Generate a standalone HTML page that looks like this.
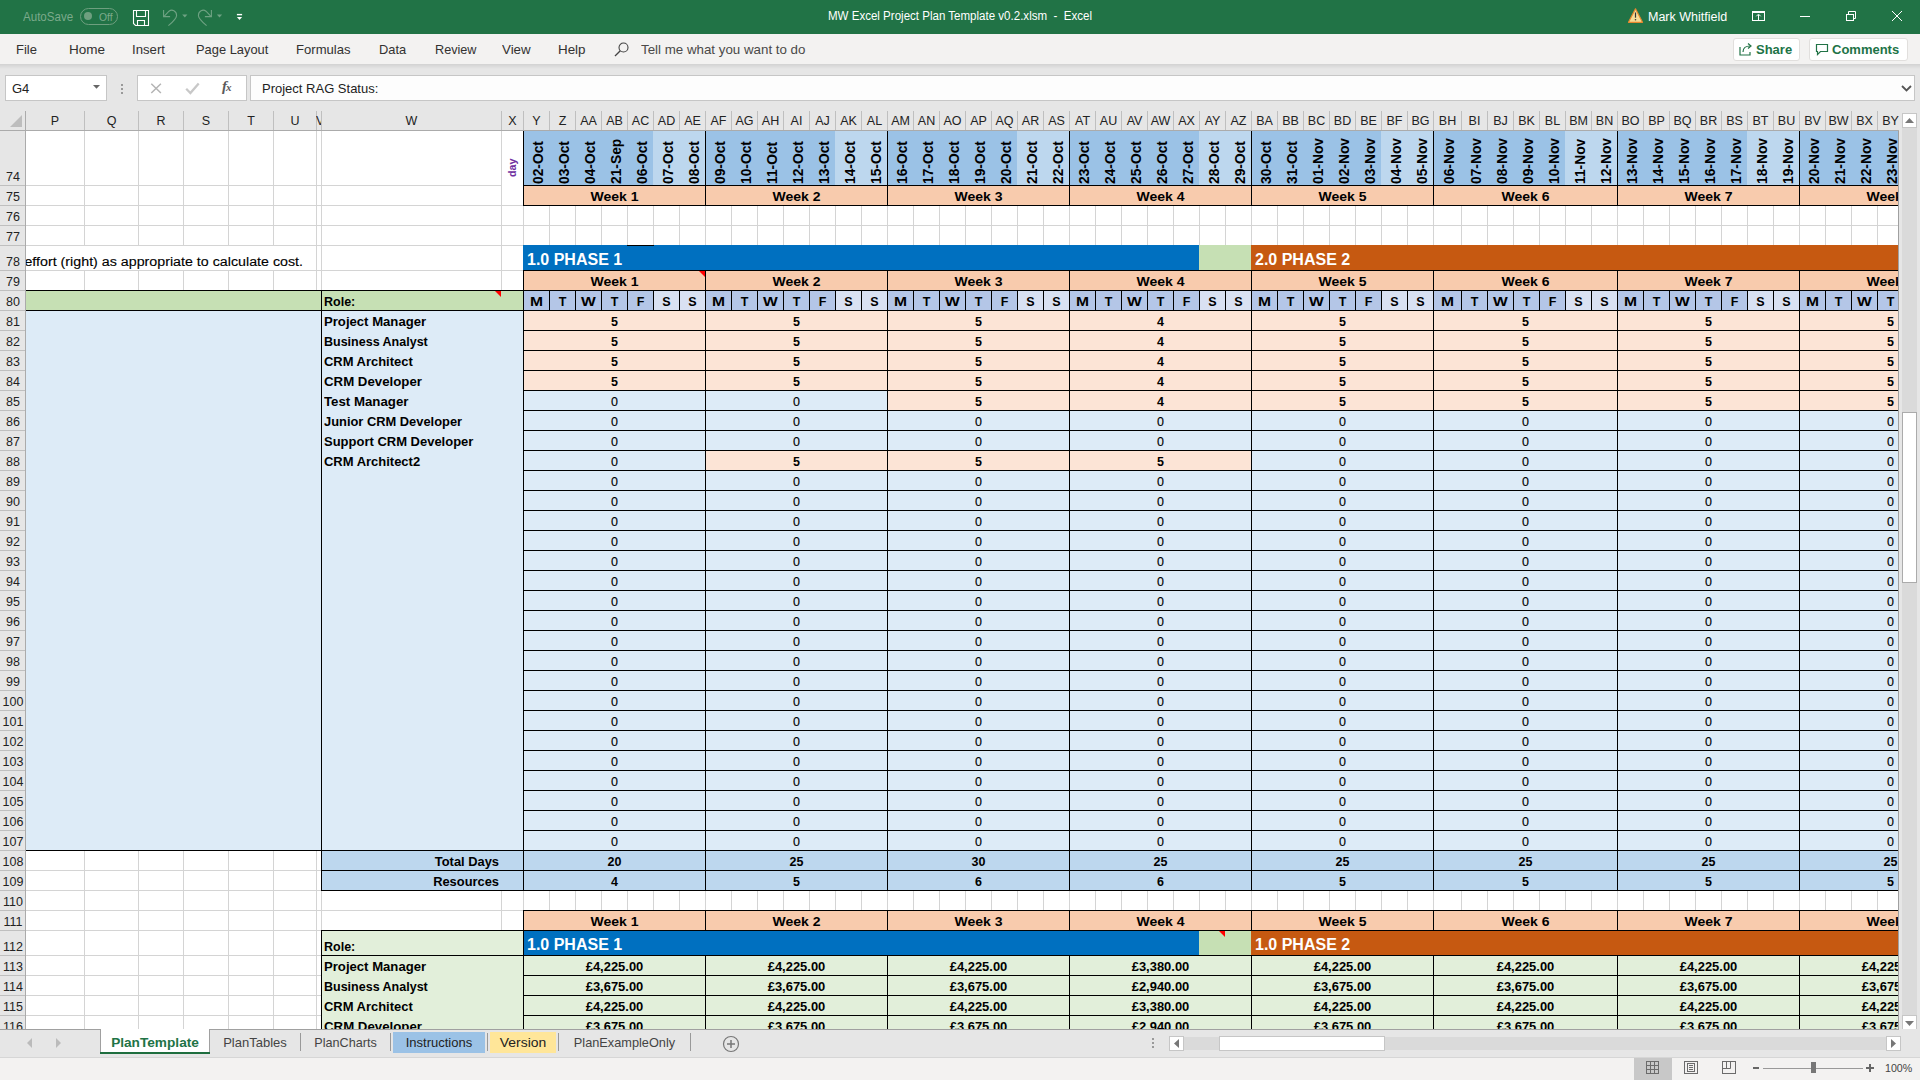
<!DOCTYPE html>
<html><head><meta charset="utf-8"><style>
html,body{margin:0;padding:0;width:1920px;height:1080px;overflow:hidden;background:#fff;}
body{position:relative;font-family:"Liberation Sans", sans-serif;}
div,span,svg{position:absolute;box-sizing:border-box;}
.sheet{left:0;top:0;width:1920px;height:1080px;}
</style></head><body>
<div style="left:0px;top:0px;width:1920px;height:34px;background:#217346;"></div>
<div style="left:23px;top:8.50px;height:16px;line-height:16px;font-size:13px;font-weight:400;color:#7BAA8B;white-space:nowrap;font-family:'Liberation Sans', sans-serif;transform:scaleX(0.89);transform-origin:0 0;">AutoSave</div>
<div style="left:80px;top:8px;width:38px;height:17px;border:1px solid #6E9F7F;border-radius:9px;"></div>
<div style="left:84px;top:12px;width:8px;height:8px;border-radius:50%;background:#6E9F7F;"></div>
<div style="left:99px;top:9.52px;height:14px;line-height:14px;font-size:11.5px;font-weight:400;color:#7BAA8B;white-space:nowrap;font-family:'Liberation Sans', sans-serif;transform:scaleX(0.9);transform-origin:0 0;">Off</div>
<svg style="left:128px;top:6px" width="26" height="24" viewBox="0 0 26 24"><g fill="none" stroke="#fff" stroke-width="1.1"><path d="M5.5 4.5H20.5V19.5H7.5L5.5 17.5Z"/><path d="M8.5 4.5V10.5H17.5V4.5"/><path d="M9.5 19.5V14.5H16.5V19.5"/></g></svg>
<svg style="left:155px;top:5px" width="95" height="25" viewBox="0 0 95 25"><g fill="none" stroke="#6FA283" stroke-width="1.1"><path d="M8.6 5v6.6h6.5"/><path d="M9.3 11.2L14 6.2C17 3.8 21.6 5.8 21.6 10.4C21.6 13 20 15 13.4 20.6"/><path d="M56.4 5v6.6h-6.5"/><path d="M55.7 11.2L51 6.2C48 3.8 43.4 5.8 43.4 10.4C43.4 13 45 15 51.6 20.6"/></g><path d="M27.2 9.6h5.2l-2.6 2.8z" fill="#6FA283"/><path d="M61.9 9.6h5.2l-2.6 2.8z" fill="#6FA283"/><rect x="81.9" y="8.9" width="5.2" height="1.4" fill="#fff"/><path d="M81.9 12.1h5.2l-2.6 3z" fill="#fff"/></svg>
<div style="left:828px;top:7.67px;height:16px;line-height:16px;font-size:12.5px;font-weight:400;color:#fff;white-space:nowrap;font-family:'Liberation Sans', sans-serif;transform:scaleX(0.923);transform-origin:0 0;">MW Excel Project Plan Template v0.2.xlsm&nbsp; -&nbsp; Excel</div>
<svg style="left:1627px;top:7px" width="17" height="17" viewBox="0 0 17 17"><path d="M8.5 1.8L15.5 15.3H1.5z" fill="#F5DC96" stroke="#E8872E" stroke-width="1.2" stroke-linejoin="round"/><path d="M8.5 5.5v5.2" stroke="#333" stroke-width="1.2"/><circle cx="8.5" cy="12.8" r="0.8" fill="#333"/></svg>
<div style="left:1648px;top:8.67px;height:16px;line-height:16px;font-size:12.5px;font-weight:400;color:#fff;white-space:nowrap;font-family:'Liberation Sans', sans-serif;">Mark Whitfield</div>
<svg style="left:1745px;top:4px" width="165" height="24" viewBox="0 0 165 24"><g fill="none" stroke="#fff" stroke-width="1"><rect x="7.5" y="7.5" width="12" height="9"/><path d="M7.5 8.5h12M13.5 11v5.5M11.3 12.3l2.2-2.2l2.2 2.2"/><path d="M55 12.5h10"/><rect x="101.5" y="10.5" width="7" height="6"/><path d="M103.5 10.5v-3h7v7h-2"/><path d="M147 7l10 10M157 7l-10 10"/></g></svg>
<div style="left:0px;top:34px;width:1920px;height:30px;background:#F3F2F1;"></div>
<div style="left:16px;top:41.50px;height:16px;line-height:16px;font-size:13px;font-weight:400;color:#323130;white-space:nowrap;font-family:'Liberation Sans', sans-serif;transform:scaleX(1.0);transform-origin:0 0;">File</div>
<div style="left:69px;top:41.50px;height:16px;line-height:16px;font-size:13px;font-weight:400;color:#323130;white-space:nowrap;font-family:'Liberation Sans', sans-serif;transform:scaleX(1.04);transform-origin:0 0;">Home</div>
<div style="left:132px;top:41.50px;height:16px;line-height:16px;font-size:13px;font-weight:400;color:#323130;white-space:nowrap;font-family:'Liberation Sans', sans-serif;transform:scaleX(1.013);transform-origin:0 0;">Insert</div>
<div style="left:196px;top:41.50px;height:16px;line-height:16px;font-size:13px;font-weight:400;color:#323130;white-space:nowrap;font-family:'Liberation Sans', sans-serif;transform:scaleX(0.99);transform-origin:0 0;">Page Layout</div>
<div style="left:296px;top:41.50px;height:16px;line-height:16px;font-size:13px;font-weight:400;color:#323130;white-space:nowrap;font-family:'Liberation Sans', sans-serif;transform:scaleX(1.007);transform-origin:0 0;">Formulas</div>
<div style="left:379px;top:41.50px;height:16px;line-height:16px;font-size:13px;font-weight:400;color:#323130;white-space:nowrap;font-family:'Liberation Sans', sans-serif;transform:scaleX(0.988);transform-origin:0 0;">Data</div>
<div style="left:435px;top:41.50px;height:16px;line-height:16px;font-size:13px;font-weight:400;color:#323130;white-space:nowrap;font-family:'Liberation Sans', sans-serif;transform:scaleX(0.974);transform-origin:0 0;">Review</div>
<div style="left:502px;top:41.50px;height:16px;line-height:16px;font-size:13px;font-weight:400;color:#323130;white-space:nowrap;font-family:'Liberation Sans', sans-serif;transform:scaleX(1.023);transform-origin:0 0;">View</div>
<div style="left:558px;top:41.50px;height:16px;line-height:16px;font-size:13px;font-weight:400;color:#323130;white-space:nowrap;font-family:'Liberation Sans', sans-serif;transform:scaleX(1.03);transform-origin:0 0;">Help</div>
<svg style="left:613px;top:41px" width="18" height="18" viewBox="0 0 18 18"><circle cx="10.5" cy="6.5" r="4.5" fill="none" stroke="#444" stroke-width="1.1"/><path d="M7.3 9.7L2 15" stroke="#444" stroke-width="1.3"/></svg>
<div style="left:641px;top:41.50px;height:16px;line-height:16px;font-size:13px;font-weight:400;color:#4A4948;white-space:nowrap;font-family:'Liberation Sans', sans-serif;transform:scaleX(1.025);transform-origin:0 0;">Tell me what you want to do</div>
<div style="left:1733px;top:38px;width:67px;height:23px;background:#fff;border:1px solid #E1DFDD;border-radius:3px;"></div>
<svg style="left:1739px;top:42px" width="14" height="14" viewBox="0 0 14 14"><path d="M1 5v8h10v-3" fill="none" stroke="#217346" stroke-width="1.2"/><path d="M4 10c0-4 3-6 7-6" fill="none" stroke="#217346" stroke-width="1.2"/><path d="M9 1.5l3 2.5l-3 2.5" fill="none" stroke="#217346" stroke-width="1.2"/></svg>
<div style="left:1756px;top:41.50px;height:16px;line-height:16px;font-size:13px;font-weight:700;color:#217346;white-space:nowrap;font-family:'Liberation Sans', sans-serif;">Share</div>
<div style="left:1809px;top:38px;width:99px;height:23px;background:#fff;border:1px solid #E1DFDD;border-radius:3px;"></div>
<svg style="left:1815px;top:43px" width="14" height="13" viewBox="0 0 14 13"><path d="M1.5 1.5h11v7h-7l-3 3v-3h-1z" fill="none" stroke="#217346" stroke-width="1.2"/></svg>
<div style="left:1832px;top:41.50px;height:16px;line-height:16px;font-size:13px;font-weight:700;color:#217346;white-space:nowrap;font-family:'Liberation Sans', sans-serif;">Comments</div>
<div style="left:0;top:64px;width:1920px;height:5px;background:linear-gradient(#D2D2D2,#E6E6E6);"></div>
<div style="left:0px;top:69px;width:1920px;height:42px;background:#E6E6E6;"></div>
<div style="left:5px;top:75px;width:102px;height:26px;background:#fff;border:1px solid #C6C6C6;"></div>
<div style="left:12px;top:80.50px;height:16px;line-height:16px;font-size:13px;font-weight:400;color:#222;white-space:nowrap;font-family:'Liberation Sans', sans-serif;">G4</div>
<svg style="left:93px;top:85px" width="8" height="5" viewBox="0 0 8 5"><path d="M0 0h7l-3.5 3.8z" fill="#666"/></svg>
<div style="left:121px;top:84px;width:2px;height:2px;background:#999;"></div>
<div style="left:121px;top:88px;width:2px;height:2px;background:#999;"></div>
<div style="left:121px;top:92px;width:2px;height:2px;background:#999;"></div>
<div style="left:137px;top:75px;width:110px;height:26px;background:#fff;border:1px solid #C6C6C6;"></div>
<svg style="left:150px;top:83px" width="13" height="11" viewBox="0 0 13 11"><path d="M1.3 0.8l9.6 9.2M10.9 0.8l-9.6 9.2" stroke="#B4B4B4" stroke-width="1.5"/></svg>
<svg style="left:185px;top:82px" width="15" height="13" viewBox="0 0 15 13"><path d="M1.2 6.8l4.2 4.2l8.3-9.6" fill="none" stroke="#C8C8C8" stroke-width="2.3"/></svg>
<div style="left:222px;top:77.30px;height:19px;line-height:19px;font-size:15px;font-weight:400;color:#5A5A5A;white-space:nowrap;font-family:'Liberation Serif', serif;"><b><i>f</i></b><span style="position:relative;font-size:11px;font-style:italic;font-weight:700;margin-left:-1px">x</span></div>
<div style="left:250px;top:75px;width:1665px;height:26px;background:#FDFDFD;border:1px solid #C6C6C6;"></div>
<div style="left:262px;top:80.50px;height:16px;line-height:16px;font-size:13px;font-weight:400;color:#222;white-space:nowrap;font-family:'Liberation Sans', sans-serif;">Project RAG Status:</div>
<svg style="left:1901px;top:85px" width="11" height="7" viewBox="0 0 11 7"><path d="M1 1l4.5 4.5l4.5-4.5" fill="none" stroke="#555" stroke-width="1.8"/></svg>
<div style="left:0px;top:111px;width:1920px;height:20px;background:#E6E6E6;"></div>
<div style="left:0px;top:130px;width:1899px;height:1px;background:#ABABAB;"></div>
<div style="left:25px;top:111px;width:1px;height:918px;background:#ABABAB;"></div>
<svg style="left:8px;top:114px" width="16" height="14" viewBox="0 0 16 14"><path d="M14 1v12h-12z" fill="#BDBDBD"/></svg>
<div style="left:84px;top:111px;width:1px;height:19px;background:#BFBFBF;"></div>
<div style="left:26px;top:112.67px;height:16px;line-height:16px;font-size:12.5px;font-weight:400;color:#222;white-space:nowrap;font-family:'Liberation Sans', sans-serif;width:58px;text-align:center;overflow:hidden;">P</div>
<div style="left:138px;top:111px;width:1px;height:19px;background:#BFBFBF;"></div>
<div style="left:85px;top:112.67px;height:16px;line-height:16px;font-size:12.5px;font-weight:400;color:#222;white-space:nowrap;font-family:'Liberation Sans', sans-serif;width:53px;text-align:center;overflow:hidden;">Q</div>
<div style="left:183px;top:111px;width:1px;height:19px;background:#BFBFBF;"></div>
<div style="left:139px;top:112.67px;height:16px;line-height:16px;font-size:12.5px;font-weight:400;color:#222;white-space:nowrap;font-family:'Liberation Sans', sans-serif;width:44px;text-align:center;overflow:hidden;">R</div>
<div style="left:228px;top:111px;width:1px;height:19px;background:#BFBFBF;"></div>
<div style="left:184px;top:112.67px;height:16px;line-height:16px;font-size:12.5px;font-weight:400;color:#222;white-space:nowrap;font-family:'Liberation Sans', sans-serif;width:44px;text-align:center;overflow:hidden;">S</div>
<div style="left:273px;top:111px;width:1px;height:19px;background:#BFBFBF;"></div>
<div style="left:229px;top:112.67px;height:16px;line-height:16px;font-size:12.5px;font-weight:400;color:#222;white-space:nowrap;font-family:'Liberation Sans', sans-serif;width:44px;text-align:center;overflow:hidden;">T</div>
<div style="left:316px;top:111px;width:1px;height:19px;background:#BFBFBF;"></div>
<div style="left:274px;top:112.67px;height:16px;line-height:16px;font-size:12.5px;font-weight:400;color:#222;white-space:nowrap;font-family:'Liberation Sans', sans-serif;width:42px;text-align:center;overflow:hidden;">U</div>
<div style="left:321px;top:111px;width:1px;height:19px;background:#BFBFBF;"></div>
<div style="left:501px;top:111px;width:1px;height:19px;background:#BFBFBF;"></div>
<div style="left:322px;top:112.67px;height:16px;line-height:16px;font-size:12.5px;font-weight:400;color:#222;white-space:nowrap;font-family:'Liberation Sans', sans-serif;width:179px;text-align:center;overflow:hidden;">W</div>
<div style="left:523px;top:111px;width:1px;height:19px;background:#BFBFBF;"></div>
<div style="left:502px;top:112.67px;height:16px;line-height:16px;font-size:12.5px;font-weight:400;color:#222;white-space:nowrap;font-family:'Liberation Sans', sans-serif;width:21px;text-align:center;overflow:hidden;">X</div>
<div style="left:549px;top:111px;width:1px;height:19px;background:#BFBFBF;"></div>
<div style="left:524px;top:112.67px;height:16px;line-height:16px;font-size:12.5px;font-weight:400;color:#222;white-space:nowrap;font-family:'Liberation Sans', sans-serif;width:25px;text-align:center;overflow:hidden;">Y</div>
<div style="left:575px;top:111px;width:1px;height:19px;background:#BFBFBF;"></div>
<div style="left:550px;top:112.67px;height:16px;line-height:16px;font-size:12.5px;font-weight:400;color:#222;white-space:nowrap;font-family:'Liberation Sans', sans-serif;width:25px;text-align:center;overflow:hidden;">Z</div>
<div style="left:601px;top:111px;width:1px;height:19px;background:#BFBFBF;"></div>
<div style="left:576px;top:112.67px;height:16px;line-height:16px;font-size:12.5px;font-weight:400;color:#222;white-space:nowrap;font-family:'Liberation Sans', sans-serif;width:25px;text-align:center;overflow:hidden;">AA</div>
<div style="left:627px;top:111px;width:1px;height:19px;background:#BFBFBF;"></div>
<div style="left:602px;top:112.67px;height:16px;line-height:16px;font-size:12.5px;font-weight:400;color:#222;white-space:nowrap;font-family:'Liberation Sans', sans-serif;width:25px;text-align:center;overflow:hidden;">AB</div>
<div style="left:653px;top:111px;width:1px;height:19px;background:#BFBFBF;"></div>
<div style="left:628px;top:112.67px;height:16px;line-height:16px;font-size:12.5px;font-weight:400;color:#222;white-space:nowrap;font-family:'Liberation Sans', sans-serif;width:25px;text-align:center;overflow:hidden;">AC</div>
<div style="left:679px;top:111px;width:1px;height:19px;background:#BFBFBF;"></div>
<div style="left:654px;top:112.67px;height:16px;line-height:16px;font-size:12.5px;font-weight:400;color:#222;white-space:nowrap;font-family:'Liberation Sans', sans-serif;width:25px;text-align:center;overflow:hidden;">AD</div>
<div style="left:705px;top:111px;width:1px;height:19px;background:#BFBFBF;"></div>
<div style="left:680px;top:112.67px;height:16px;line-height:16px;font-size:12.5px;font-weight:400;color:#222;white-space:nowrap;font-family:'Liberation Sans', sans-serif;width:25px;text-align:center;overflow:hidden;">AE</div>
<div style="left:731px;top:111px;width:1px;height:19px;background:#BFBFBF;"></div>
<div style="left:706px;top:112.67px;height:16px;line-height:16px;font-size:12.5px;font-weight:400;color:#222;white-space:nowrap;font-family:'Liberation Sans', sans-serif;width:25px;text-align:center;overflow:hidden;">AF</div>
<div style="left:757px;top:111px;width:1px;height:19px;background:#BFBFBF;"></div>
<div style="left:732px;top:112.67px;height:16px;line-height:16px;font-size:12.5px;font-weight:400;color:#222;white-space:nowrap;font-family:'Liberation Sans', sans-serif;width:25px;text-align:center;overflow:hidden;">AG</div>
<div style="left:783px;top:111px;width:1px;height:19px;background:#BFBFBF;"></div>
<div style="left:758px;top:112.67px;height:16px;line-height:16px;font-size:12.5px;font-weight:400;color:#222;white-space:nowrap;font-family:'Liberation Sans', sans-serif;width:25px;text-align:center;overflow:hidden;">AH</div>
<div style="left:809px;top:111px;width:1px;height:19px;background:#BFBFBF;"></div>
<div style="left:784px;top:112.67px;height:16px;line-height:16px;font-size:12.5px;font-weight:400;color:#222;white-space:nowrap;font-family:'Liberation Sans', sans-serif;width:25px;text-align:center;overflow:hidden;">AI</div>
<div style="left:835px;top:111px;width:1px;height:19px;background:#BFBFBF;"></div>
<div style="left:810px;top:112.67px;height:16px;line-height:16px;font-size:12.5px;font-weight:400;color:#222;white-space:nowrap;font-family:'Liberation Sans', sans-serif;width:25px;text-align:center;overflow:hidden;">AJ</div>
<div style="left:861px;top:111px;width:1px;height:19px;background:#BFBFBF;"></div>
<div style="left:836px;top:112.67px;height:16px;line-height:16px;font-size:12.5px;font-weight:400;color:#222;white-space:nowrap;font-family:'Liberation Sans', sans-serif;width:25px;text-align:center;overflow:hidden;">AK</div>
<div style="left:887px;top:111px;width:1px;height:19px;background:#BFBFBF;"></div>
<div style="left:862px;top:112.67px;height:16px;line-height:16px;font-size:12.5px;font-weight:400;color:#222;white-space:nowrap;font-family:'Liberation Sans', sans-serif;width:25px;text-align:center;overflow:hidden;">AL</div>
<div style="left:913px;top:111px;width:1px;height:19px;background:#BFBFBF;"></div>
<div style="left:888px;top:112.67px;height:16px;line-height:16px;font-size:12.5px;font-weight:400;color:#222;white-space:nowrap;font-family:'Liberation Sans', sans-serif;width:25px;text-align:center;overflow:hidden;">AM</div>
<div style="left:939px;top:111px;width:1px;height:19px;background:#BFBFBF;"></div>
<div style="left:914px;top:112.67px;height:16px;line-height:16px;font-size:12.5px;font-weight:400;color:#222;white-space:nowrap;font-family:'Liberation Sans', sans-serif;width:25px;text-align:center;overflow:hidden;">AN</div>
<div style="left:965px;top:111px;width:1px;height:19px;background:#BFBFBF;"></div>
<div style="left:940px;top:112.67px;height:16px;line-height:16px;font-size:12.5px;font-weight:400;color:#222;white-space:nowrap;font-family:'Liberation Sans', sans-serif;width:25px;text-align:center;overflow:hidden;">AO</div>
<div style="left:991px;top:111px;width:1px;height:19px;background:#BFBFBF;"></div>
<div style="left:966px;top:112.67px;height:16px;line-height:16px;font-size:12.5px;font-weight:400;color:#222;white-space:nowrap;font-family:'Liberation Sans', sans-serif;width:25px;text-align:center;overflow:hidden;">AP</div>
<div style="left:1017px;top:111px;width:1px;height:19px;background:#BFBFBF;"></div>
<div style="left:992px;top:112.67px;height:16px;line-height:16px;font-size:12.5px;font-weight:400;color:#222;white-space:nowrap;font-family:'Liberation Sans', sans-serif;width:25px;text-align:center;overflow:hidden;">AQ</div>
<div style="left:1043px;top:111px;width:1px;height:19px;background:#BFBFBF;"></div>
<div style="left:1018px;top:112.67px;height:16px;line-height:16px;font-size:12.5px;font-weight:400;color:#222;white-space:nowrap;font-family:'Liberation Sans', sans-serif;width:25px;text-align:center;overflow:hidden;">AR</div>
<div style="left:1069px;top:111px;width:1px;height:19px;background:#BFBFBF;"></div>
<div style="left:1044px;top:112.67px;height:16px;line-height:16px;font-size:12.5px;font-weight:400;color:#222;white-space:nowrap;font-family:'Liberation Sans', sans-serif;width:25px;text-align:center;overflow:hidden;">AS</div>
<div style="left:1095px;top:111px;width:1px;height:19px;background:#BFBFBF;"></div>
<div style="left:1070px;top:112.67px;height:16px;line-height:16px;font-size:12.5px;font-weight:400;color:#222;white-space:nowrap;font-family:'Liberation Sans', sans-serif;width:25px;text-align:center;overflow:hidden;">AT</div>
<div style="left:1121px;top:111px;width:1px;height:19px;background:#BFBFBF;"></div>
<div style="left:1096px;top:112.67px;height:16px;line-height:16px;font-size:12.5px;font-weight:400;color:#222;white-space:nowrap;font-family:'Liberation Sans', sans-serif;width:25px;text-align:center;overflow:hidden;">AU</div>
<div style="left:1147px;top:111px;width:1px;height:19px;background:#BFBFBF;"></div>
<div style="left:1122px;top:112.67px;height:16px;line-height:16px;font-size:12.5px;font-weight:400;color:#222;white-space:nowrap;font-family:'Liberation Sans', sans-serif;width:25px;text-align:center;overflow:hidden;">AV</div>
<div style="left:1173px;top:111px;width:1px;height:19px;background:#BFBFBF;"></div>
<div style="left:1148px;top:112.67px;height:16px;line-height:16px;font-size:12.5px;font-weight:400;color:#222;white-space:nowrap;font-family:'Liberation Sans', sans-serif;width:25px;text-align:center;overflow:hidden;">AW</div>
<div style="left:1199px;top:111px;width:1px;height:19px;background:#BFBFBF;"></div>
<div style="left:1174px;top:112.67px;height:16px;line-height:16px;font-size:12.5px;font-weight:400;color:#222;white-space:nowrap;font-family:'Liberation Sans', sans-serif;width:25px;text-align:center;overflow:hidden;">AX</div>
<div style="left:1225px;top:111px;width:1px;height:19px;background:#BFBFBF;"></div>
<div style="left:1200px;top:112.67px;height:16px;line-height:16px;font-size:12.5px;font-weight:400;color:#222;white-space:nowrap;font-family:'Liberation Sans', sans-serif;width:25px;text-align:center;overflow:hidden;">AY</div>
<div style="left:1251px;top:111px;width:1px;height:19px;background:#BFBFBF;"></div>
<div style="left:1226px;top:112.67px;height:16px;line-height:16px;font-size:12.5px;font-weight:400;color:#222;white-space:nowrap;font-family:'Liberation Sans', sans-serif;width:25px;text-align:center;overflow:hidden;">AZ</div>
<div style="left:1277px;top:111px;width:1px;height:19px;background:#BFBFBF;"></div>
<div style="left:1252px;top:112.67px;height:16px;line-height:16px;font-size:12.5px;font-weight:400;color:#222;white-space:nowrap;font-family:'Liberation Sans', sans-serif;width:25px;text-align:center;overflow:hidden;">BA</div>
<div style="left:1303px;top:111px;width:1px;height:19px;background:#BFBFBF;"></div>
<div style="left:1278px;top:112.67px;height:16px;line-height:16px;font-size:12.5px;font-weight:400;color:#222;white-space:nowrap;font-family:'Liberation Sans', sans-serif;width:25px;text-align:center;overflow:hidden;">BB</div>
<div style="left:1329px;top:111px;width:1px;height:19px;background:#BFBFBF;"></div>
<div style="left:1304px;top:112.67px;height:16px;line-height:16px;font-size:12.5px;font-weight:400;color:#222;white-space:nowrap;font-family:'Liberation Sans', sans-serif;width:25px;text-align:center;overflow:hidden;">BC</div>
<div style="left:1355px;top:111px;width:1px;height:19px;background:#BFBFBF;"></div>
<div style="left:1330px;top:112.67px;height:16px;line-height:16px;font-size:12.5px;font-weight:400;color:#222;white-space:nowrap;font-family:'Liberation Sans', sans-serif;width:25px;text-align:center;overflow:hidden;">BD</div>
<div style="left:1381px;top:111px;width:1px;height:19px;background:#BFBFBF;"></div>
<div style="left:1356px;top:112.67px;height:16px;line-height:16px;font-size:12.5px;font-weight:400;color:#222;white-space:nowrap;font-family:'Liberation Sans', sans-serif;width:25px;text-align:center;overflow:hidden;">BE</div>
<div style="left:1407px;top:111px;width:1px;height:19px;background:#BFBFBF;"></div>
<div style="left:1382px;top:112.67px;height:16px;line-height:16px;font-size:12.5px;font-weight:400;color:#222;white-space:nowrap;font-family:'Liberation Sans', sans-serif;width:25px;text-align:center;overflow:hidden;">BF</div>
<div style="left:1433px;top:111px;width:1px;height:19px;background:#BFBFBF;"></div>
<div style="left:1408px;top:112.67px;height:16px;line-height:16px;font-size:12.5px;font-weight:400;color:#222;white-space:nowrap;font-family:'Liberation Sans', sans-serif;width:25px;text-align:center;overflow:hidden;">BG</div>
<div style="left:1461px;top:111px;width:1px;height:19px;background:#BFBFBF;"></div>
<div style="left:1434px;top:112.67px;height:16px;line-height:16px;font-size:12.5px;font-weight:400;color:#222;white-space:nowrap;font-family:'Liberation Sans', sans-serif;width:27px;text-align:center;overflow:hidden;">BH</div>
<div style="left:1487px;top:111px;width:1px;height:19px;background:#BFBFBF;"></div>
<div style="left:1462px;top:112.67px;height:16px;line-height:16px;font-size:12.5px;font-weight:400;color:#222;white-space:nowrap;font-family:'Liberation Sans', sans-serif;width:25px;text-align:center;overflow:hidden;">BI</div>
<div style="left:1513px;top:111px;width:1px;height:19px;background:#BFBFBF;"></div>
<div style="left:1488px;top:112.67px;height:16px;line-height:16px;font-size:12.5px;font-weight:400;color:#222;white-space:nowrap;font-family:'Liberation Sans', sans-serif;width:25px;text-align:center;overflow:hidden;">BJ</div>
<div style="left:1539px;top:111px;width:1px;height:19px;background:#BFBFBF;"></div>
<div style="left:1514px;top:112.67px;height:16px;line-height:16px;font-size:12.5px;font-weight:400;color:#222;white-space:nowrap;font-family:'Liberation Sans', sans-serif;width:25px;text-align:center;overflow:hidden;">BK</div>
<div style="left:1565px;top:111px;width:1px;height:19px;background:#BFBFBF;"></div>
<div style="left:1540px;top:112.67px;height:16px;line-height:16px;font-size:12.5px;font-weight:400;color:#222;white-space:nowrap;font-family:'Liberation Sans', sans-serif;width:25px;text-align:center;overflow:hidden;">BL</div>
<div style="left:1591px;top:111px;width:1px;height:19px;background:#BFBFBF;"></div>
<div style="left:1566px;top:112.67px;height:16px;line-height:16px;font-size:12.5px;font-weight:400;color:#222;white-space:nowrap;font-family:'Liberation Sans', sans-serif;width:25px;text-align:center;overflow:hidden;">BM</div>
<div style="left:1617px;top:111px;width:1px;height:19px;background:#BFBFBF;"></div>
<div style="left:1592px;top:112.67px;height:16px;line-height:16px;font-size:12.5px;font-weight:400;color:#222;white-space:nowrap;font-family:'Liberation Sans', sans-serif;width:25px;text-align:center;overflow:hidden;">BN</div>
<div style="left:1643px;top:111px;width:1px;height:19px;background:#BFBFBF;"></div>
<div style="left:1618px;top:112.67px;height:16px;line-height:16px;font-size:12.5px;font-weight:400;color:#222;white-space:nowrap;font-family:'Liberation Sans', sans-serif;width:25px;text-align:center;overflow:hidden;">BO</div>
<div style="left:1669px;top:111px;width:1px;height:19px;background:#BFBFBF;"></div>
<div style="left:1644px;top:112.67px;height:16px;line-height:16px;font-size:12.5px;font-weight:400;color:#222;white-space:nowrap;font-family:'Liberation Sans', sans-serif;width:25px;text-align:center;overflow:hidden;">BP</div>
<div style="left:1695px;top:111px;width:1px;height:19px;background:#BFBFBF;"></div>
<div style="left:1670px;top:112.67px;height:16px;line-height:16px;font-size:12.5px;font-weight:400;color:#222;white-space:nowrap;font-family:'Liberation Sans', sans-serif;width:25px;text-align:center;overflow:hidden;">BQ</div>
<div style="left:1721px;top:111px;width:1px;height:19px;background:#BFBFBF;"></div>
<div style="left:1696px;top:112.67px;height:16px;line-height:16px;font-size:12.5px;font-weight:400;color:#222;white-space:nowrap;font-family:'Liberation Sans', sans-serif;width:25px;text-align:center;overflow:hidden;">BR</div>
<div style="left:1747px;top:111px;width:1px;height:19px;background:#BFBFBF;"></div>
<div style="left:1722px;top:112.67px;height:16px;line-height:16px;font-size:12.5px;font-weight:400;color:#222;white-space:nowrap;font-family:'Liberation Sans', sans-serif;width:25px;text-align:center;overflow:hidden;">BS</div>
<div style="left:1773px;top:111px;width:1px;height:19px;background:#BFBFBF;"></div>
<div style="left:1748px;top:112.67px;height:16px;line-height:16px;font-size:12.5px;font-weight:400;color:#222;white-space:nowrap;font-family:'Liberation Sans', sans-serif;width:25px;text-align:center;overflow:hidden;">BT</div>
<div style="left:1799px;top:111px;width:1px;height:19px;background:#BFBFBF;"></div>
<div style="left:1774px;top:112.67px;height:16px;line-height:16px;font-size:12.5px;font-weight:400;color:#222;white-space:nowrap;font-family:'Liberation Sans', sans-serif;width:25px;text-align:center;overflow:hidden;">BU</div>
<div style="left:1825px;top:111px;width:1px;height:19px;background:#BFBFBF;"></div>
<div style="left:1800px;top:112.67px;height:16px;line-height:16px;font-size:12.5px;font-weight:400;color:#222;white-space:nowrap;font-family:'Liberation Sans', sans-serif;width:25px;text-align:center;overflow:hidden;">BV</div>
<div style="left:1851px;top:111px;width:1px;height:19px;background:#BFBFBF;"></div>
<div style="left:1826px;top:112.67px;height:16px;line-height:16px;font-size:12.5px;font-weight:400;color:#222;white-space:nowrap;font-family:'Liberation Sans', sans-serif;width:25px;text-align:center;overflow:hidden;">BW</div>
<div style="left:1877px;top:111px;width:1px;height:19px;background:#BFBFBF;"></div>
<div style="left:1852px;top:112.67px;height:16px;line-height:16px;font-size:12.5px;font-weight:400;color:#222;white-space:nowrap;font-family:'Liberation Sans', sans-serif;width:25px;text-align:center;overflow:hidden;">BX</div>
<div style="left:1903px;top:111px;width:1px;height:19px;background:#BFBFBF;"></div>
<div style="left:1878px;top:112.67px;height:16px;line-height:16px;font-size:12.5px;font-weight:400;color:#222;white-space:nowrap;font-family:'Liberation Sans', sans-serif;width:25px;text-align:center;overflow:hidden;">BY</div>
<div style="left:316px;top:112.67px;height:16px;line-height:16px;font-size:12.5px;font-weight:400;color:#222;white-space:nowrap;font-family:'Liberation Sans', sans-serif;width:5px;overflow:hidden;">V</div>
<div style="left:0px;top:131px;width:25px;height:898px;background:#E6E6E6;"></div>
<div style="left:0px;top:185px;width:25px;height:1px;background:#BFBFBF;"></div>
<div style="left:0px;top:168.67px;height:16px;line-height:16px;font-size:12.5px;font-weight:400;color:#222;white-space:nowrap;font-family:'Liberation Sans', sans-serif;width:26px;text-align:center;">74</div>
<div style="left:0px;top:205px;width:25px;height:1px;background:#BFBFBF;"></div>
<div style="left:0px;top:188.67px;height:16px;line-height:16px;font-size:12.5px;font-weight:400;color:#222;white-space:nowrap;font-family:'Liberation Sans', sans-serif;width:26px;text-align:center;">75</div>
<div style="left:0px;top:225px;width:25px;height:1px;background:#BFBFBF;"></div>
<div style="left:0px;top:208.67px;height:16px;line-height:16px;font-size:12.5px;font-weight:400;color:#222;white-space:nowrap;font-family:'Liberation Sans', sans-serif;width:26px;text-align:center;">76</div>
<div style="left:0px;top:245px;width:25px;height:1px;background:#BFBFBF;"></div>
<div style="left:0px;top:228.67px;height:16px;line-height:16px;font-size:12.5px;font-weight:400;color:#222;white-space:nowrap;font-family:'Liberation Sans', sans-serif;width:26px;text-align:center;">77</div>
<div style="left:0px;top:270px;width:25px;height:1px;background:#BFBFBF;"></div>
<div style="left:0px;top:253.67px;height:16px;line-height:16px;font-size:12.5px;font-weight:400;color:#222;white-space:nowrap;font-family:'Liberation Sans', sans-serif;width:26px;text-align:center;">78</div>
<div style="left:0px;top:290px;width:25px;height:1px;background:#BFBFBF;"></div>
<div style="left:0px;top:273.67px;height:16px;line-height:16px;font-size:12.5px;font-weight:400;color:#222;white-space:nowrap;font-family:'Liberation Sans', sans-serif;width:26px;text-align:center;">79</div>
<div style="left:0px;top:310px;width:25px;height:1px;background:#BFBFBF;"></div>
<div style="left:0px;top:293.67px;height:16px;line-height:16px;font-size:12.5px;font-weight:400;color:#222;white-space:nowrap;font-family:'Liberation Sans', sans-serif;width:26px;text-align:center;">80</div>
<div style="left:0px;top:330px;width:25px;height:1px;background:#BFBFBF;"></div>
<div style="left:0px;top:313.67px;height:16px;line-height:16px;font-size:12.5px;font-weight:400;color:#222;white-space:nowrap;font-family:'Liberation Sans', sans-serif;width:26px;text-align:center;">81</div>
<div style="left:0px;top:350px;width:25px;height:1px;background:#BFBFBF;"></div>
<div style="left:0px;top:333.67px;height:16px;line-height:16px;font-size:12.5px;font-weight:400;color:#222;white-space:nowrap;font-family:'Liberation Sans', sans-serif;width:26px;text-align:center;">82</div>
<div style="left:0px;top:370px;width:25px;height:1px;background:#BFBFBF;"></div>
<div style="left:0px;top:353.67px;height:16px;line-height:16px;font-size:12.5px;font-weight:400;color:#222;white-space:nowrap;font-family:'Liberation Sans', sans-serif;width:26px;text-align:center;">83</div>
<div style="left:0px;top:390px;width:25px;height:1px;background:#BFBFBF;"></div>
<div style="left:0px;top:373.67px;height:16px;line-height:16px;font-size:12.5px;font-weight:400;color:#222;white-space:nowrap;font-family:'Liberation Sans', sans-serif;width:26px;text-align:center;">84</div>
<div style="left:0px;top:410px;width:25px;height:1px;background:#BFBFBF;"></div>
<div style="left:0px;top:393.67px;height:16px;line-height:16px;font-size:12.5px;font-weight:400;color:#222;white-space:nowrap;font-family:'Liberation Sans', sans-serif;width:26px;text-align:center;">85</div>
<div style="left:0px;top:430px;width:25px;height:1px;background:#BFBFBF;"></div>
<div style="left:0px;top:413.67px;height:16px;line-height:16px;font-size:12.5px;font-weight:400;color:#222;white-space:nowrap;font-family:'Liberation Sans', sans-serif;width:26px;text-align:center;">86</div>
<div style="left:0px;top:450px;width:25px;height:1px;background:#BFBFBF;"></div>
<div style="left:0px;top:433.67px;height:16px;line-height:16px;font-size:12.5px;font-weight:400;color:#222;white-space:nowrap;font-family:'Liberation Sans', sans-serif;width:26px;text-align:center;">87</div>
<div style="left:0px;top:470px;width:25px;height:1px;background:#BFBFBF;"></div>
<div style="left:0px;top:453.67px;height:16px;line-height:16px;font-size:12.5px;font-weight:400;color:#222;white-space:nowrap;font-family:'Liberation Sans', sans-serif;width:26px;text-align:center;">88</div>
<div style="left:0px;top:490px;width:25px;height:1px;background:#BFBFBF;"></div>
<div style="left:0px;top:473.67px;height:16px;line-height:16px;font-size:12.5px;font-weight:400;color:#222;white-space:nowrap;font-family:'Liberation Sans', sans-serif;width:26px;text-align:center;">89</div>
<div style="left:0px;top:510px;width:25px;height:1px;background:#BFBFBF;"></div>
<div style="left:0px;top:493.67px;height:16px;line-height:16px;font-size:12.5px;font-weight:400;color:#222;white-space:nowrap;font-family:'Liberation Sans', sans-serif;width:26px;text-align:center;">90</div>
<div style="left:0px;top:530px;width:25px;height:1px;background:#BFBFBF;"></div>
<div style="left:0px;top:513.67px;height:16px;line-height:16px;font-size:12.5px;font-weight:400;color:#222;white-space:nowrap;font-family:'Liberation Sans', sans-serif;width:26px;text-align:center;">91</div>
<div style="left:0px;top:550px;width:25px;height:1px;background:#BFBFBF;"></div>
<div style="left:0px;top:533.67px;height:16px;line-height:16px;font-size:12.5px;font-weight:400;color:#222;white-space:nowrap;font-family:'Liberation Sans', sans-serif;width:26px;text-align:center;">92</div>
<div style="left:0px;top:570px;width:25px;height:1px;background:#BFBFBF;"></div>
<div style="left:0px;top:553.67px;height:16px;line-height:16px;font-size:12.5px;font-weight:400;color:#222;white-space:nowrap;font-family:'Liberation Sans', sans-serif;width:26px;text-align:center;">93</div>
<div style="left:0px;top:590px;width:25px;height:1px;background:#BFBFBF;"></div>
<div style="left:0px;top:573.67px;height:16px;line-height:16px;font-size:12.5px;font-weight:400;color:#222;white-space:nowrap;font-family:'Liberation Sans', sans-serif;width:26px;text-align:center;">94</div>
<div style="left:0px;top:610px;width:25px;height:1px;background:#BFBFBF;"></div>
<div style="left:0px;top:593.67px;height:16px;line-height:16px;font-size:12.5px;font-weight:400;color:#222;white-space:nowrap;font-family:'Liberation Sans', sans-serif;width:26px;text-align:center;">95</div>
<div style="left:0px;top:630px;width:25px;height:1px;background:#BFBFBF;"></div>
<div style="left:0px;top:613.67px;height:16px;line-height:16px;font-size:12.5px;font-weight:400;color:#222;white-space:nowrap;font-family:'Liberation Sans', sans-serif;width:26px;text-align:center;">96</div>
<div style="left:0px;top:650px;width:25px;height:1px;background:#BFBFBF;"></div>
<div style="left:0px;top:633.67px;height:16px;line-height:16px;font-size:12.5px;font-weight:400;color:#222;white-space:nowrap;font-family:'Liberation Sans', sans-serif;width:26px;text-align:center;">97</div>
<div style="left:0px;top:670px;width:25px;height:1px;background:#BFBFBF;"></div>
<div style="left:0px;top:653.67px;height:16px;line-height:16px;font-size:12.5px;font-weight:400;color:#222;white-space:nowrap;font-family:'Liberation Sans', sans-serif;width:26px;text-align:center;">98</div>
<div style="left:0px;top:690px;width:25px;height:1px;background:#BFBFBF;"></div>
<div style="left:0px;top:673.67px;height:16px;line-height:16px;font-size:12.5px;font-weight:400;color:#222;white-space:nowrap;font-family:'Liberation Sans', sans-serif;width:26px;text-align:center;">99</div>
<div style="left:0px;top:710px;width:25px;height:1px;background:#BFBFBF;"></div>
<div style="left:0px;top:693.67px;height:16px;line-height:16px;font-size:12.5px;font-weight:400;color:#222;white-space:nowrap;font-family:'Liberation Sans', sans-serif;width:26px;text-align:center;">100</div>
<div style="left:0px;top:730px;width:25px;height:1px;background:#BFBFBF;"></div>
<div style="left:0px;top:713.67px;height:16px;line-height:16px;font-size:12.5px;font-weight:400;color:#222;white-space:nowrap;font-family:'Liberation Sans', sans-serif;width:26px;text-align:center;">101</div>
<div style="left:0px;top:750px;width:25px;height:1px;background:#BFBFBF;"></div>
<div style="left:0px;top:733.67px;height:16px;line-height:16px;font-size:12.5px;font-weight:400;color:#222;white-space:nowrap;font-family:'Liberation Sans', sans-serif;width:26px;text-align:center;">102</div>
<div style="left:0px;top:770px;width:25px;height:1px;background:#BFBFBF;"></div>
<div style="left:0px;top:753.67px;height:16px;line-height:16px;font-size:12.5px;font-weight:400;color:#222;white-space:nowrap;font-family:'Liberation Sans', sans-serif;width:26px;text-align:center;">103</div>
<div style="left:0px;top:790px;width:25px;height:1px;background:#BFBFBF;"></div>
<div style="left:0px;top:773.67px;height:16px;line-height:16px;font-size:12.5px;font-weight:400;color:#222;white-space:nowrap;font-family:'Liberation Sans', sans-serif;width:26px;text-align:center;">104</div>
<div style="left:0px;top:810px;width:25px;height:1px;background:#BFBFBF;"></div>
<div style="left:0px;top:793.67px;height:16px;line-height:16px;font-size:12.5px;font-weight:400;color:#222;white-space:nowrap;font-family:'Liberation Sans', sans-serif;width:26px;text-align:center;">105</div>
<div style="left:0px;top:830px;width:25px;height:1px;background:#BFBFBF;"></div>
<div style="left:0px;top:813.67px;height:16px;line-height:16px;font-size:12.5px;font-weight:400;color:#222;white-space:nowrap;font-family:'Liberation Sans', sans-serif;width:26px;text-align:center;">106</div>
<div style="left:0px;top:850px;width:25px;height:1px;background:#BFBFBF;"></div>
<div style="left:0px;top:833.67px;height:16px;line-height:16px;font-size:12.5px;font-weight:400;color:#222;white-space:nowrap;font-family:'Liberation Sans', sans-serif;width:26px;text-align:center;">107</div>
<div style="left:0px;top:870px;width:25px;height:1px;background:#BFBFBF;"></div>
<div style="left:0px;top:853.67px;height:16px;line-height:16px;font-size:12.5px;font-weight:400;color:#222;white-space:nowrap;font-family:'Liberation Sans', sans-serif;width:26px;text-align:center;">108</div>
<div style="left:0px;top:890px;width:25px;height:1px;background:#BFBFBF;"></div>
<div style="left:0px;top:873.67px;height:16px;line-height:16px;font-size:12.5px;font-weight:400;color:#222;white-space:nowrap;font-family:'Liberation Sans', sans-serif;width:26px;text-align:center;">109</div>
<div style="left:0px;top:910px;width:25px;height:1px;background:#BFBFBF;"></div>
<div style="left:0px;top:893.67px;height:16px;line-height:16px;font-size:12.5px;font-weight:400;color:#222;white-space:nowrap;font-family:'Liberation Sans', sans-serif;width:26px;text-align:center;">110</div>
<div style="left:0px;top:930px;width:25px;height:1px;background:#BFBFBF;"></div>
<div style="left:0px;top:913.67px;height:16px;line-height:16px;font-size:12.5px;font-weight:400;color:#222;white-space:nowrap;font-family:'Liberation Sans', sans-serif;width:26px;text-align:center;">111</div>
<div style="left:0px;top:955px;width:25px;height:1px;background:#BFBFBF;"></div>
<div style="left:0px;top:938.67px;height:16px;line-height:16px;font-size:12.5px;font-weight:400;color:#222;white-space:nowrap;font-family:'Liberation Sans', sans-serif;width:26px;text-align:center;">112</div>
<div style="left:0px;top:975px;width:25px;height:1px;background:#BFBFBF;"></div>
<div style="left:0px;top:958.67px;height:16px;line-height:16px;font-size:12.5px;font-weight:400;color:#222;white-space:nowrap;font-family:'Liberation Sans', sans-serif;width:26px;text-align:center;">113</div>
<div style="left:0px;top:995px;width:25px;height:1px;background:#BFBFBF;"></div>
<div style="left:0px;top:978.67px;height:16px;line-height:16px;font-size:12.5px;font-weight:400;color:#222;white-space:nowrap;font-family:'Liberation Sans', sans-serif;width:26px;text-align:center;">114</div>
<div style="left:0px;top:1015px;width:25px;height:1px;background:#BFBFBF;"></div>
<div style="left:0px;top:998.67px;height:16px;line-height:16px;font-size:12.5px;font-weight:400;color:#222;white-space:nowrap;font-family:'Liberation Sans', sans-serif;width:26px;text-align:center;">115</div>
<div style="left:0px;top:1018.67px;height:16px;line-height:16px;font-size:12.5px;font-weight:400;color:#222;white-space:nowrap;font-family:'Liberation Sans', sans-serif;width:26px;text-align:center;">116</div>
<div style="left:26px;top:131px;width:1872px;height:898px;overflow:hidden;background:#fff;">
<div style="left:58px;top:0px;width:1px;height:910px;background:#D4D4D4;"></div>
<div style="left:112px;top:0px;width:1px;height:910px;background:#D4D4D4;"></div>
<div style="left:157px;top:0px;width:1px;height:910px;background:#D4D4D4;"></div>
<div style="left:202px;top:0px;width:1px;height:910px;background:#D4D4D4;"></div>
<div style="left:247px;top:0px;width:1px;height:910px;background:#D4D4D4;"></div>
<div style="left:290px;top:0px;width:1px;height:910px;background:#D4D4D4;"></div>
<div style="left:295px;top:0px;width:1px;height:910px;background:#D4D4D4;"></div>
<div style="left:475px;top:0px;width:1px;height:910px;background:#D4D4D4;"></div>
<div style="left:497px;top:0px;width:1px;height:910px;background:#D4D4D4;"></div>
<div style="left:523px;top:0px;width:1px;height:910px;background:#D4D4D4;"></div>
<div style="left:549px;top:0px;width:1px;height:910px;background:#D4D4D4;"></div>
<div style="left:575px;top:0px;width:1px;height:910px;background:#D4D4D4;"></div>
<div style="left:601px;top:0px;width:1px;height:910px;background:#D4D4D4;"></div>
<div style="left:627px;top:0px;width:1px;height:910px;background:#D4D4D4;"></div>
<div style="left:653px;top:0px;width:1px;height:910px;background:#D4D4D4;"></div>
<div style="left:679px;top:0px;width:1px;height:910px;background:#D4D4D4;"></div>
<div style="left:705px;top:0px;width:1px;height:910px;background:#D4D4D4;"></div>
<div style="left:731px;top:0px;width:1px;height:910px;background:#D4D4D4;"></div>
<div style="left:757px;top:0px;width:1px;height:910px;background:#D4D4D4;"></div>
<div style="left:783px;top:0px;width:1px;height:910px;background:#D4D4D4;"></div>
<div style="left:809px;top:0px;width:1px;height:910px;background:#D4D4D4;"></div>
<div style="left:835px;top:0px;width:1px;height:910px;background:#D4D4D4;"></div>
<div style="left:861px;top:0px;width:1px;height:910px;background:#D4D4D4;"></div>
<div style="left:887px;top:0px;width:1px;height:910px;background:#D4D4D4;"></div>
<div style="left:913px;top:0px;width:1px;height:910px;background:#D4D4D4;"></div>
<div style="left:939px;top:0px;width:1px;height:910px;background:#D4D4D4;"></div>
<div style="left:965px;top:0px;width:1px;height:910px;background:#D4D4D4;"></div>
<div style="left:991px;top:0px;width:1px;height:910px;background:#D4D4D4;"></div>
<div style="left:1017px;top:0px;width:1px;height:910px;background:#D4D4D4;"></div>
<div style="left:1043px;top:0px;width:1px;height:910px;background:#D4D4D4;"></div>
<div style="left:1069px;top:0px;width:1px;height:910px;background:#D4D4D4;"></div>
<div style="left:1095px;top:0px;width:1px;height:910px;background:#D4D4D4;"></div>
<div style="left:1121px;top:0px;width:1px;height:910px;background:#D4D4D4;"></div>
<div style="left:1147px;top:0px;width:1px;height:910px;background:#D4D4D4;"></div>
<div style="left:1173px;top:0px;width:1px;height:910px;background:#D4D4D4;"></div>
<div style="left:1199px;top:0px;width:1px;height:910px;background:#D4D4D4;"></div>
<div style="left:1225px;top:0px;width:1px;height:910px;background:#D4D4D4;"></div>
<div style="left:1251px;top:0px;width:1px;height:910px;background:#D4D4D4;"></div>
<div style="left:1277px;top:0px;width:1px;height:910px;background:#D4D4D4;"></div>
<div style="left:1303px;top:0px;width:1px;height:910px;background:#D4D4D4;"></div>
<div style="left:1329px;top:0px;width:1px;height:910px;background:#D4D4D4;"></div>
<div style="left:1355px;top:0px;width:1px;height:910px;background:#D4D4D4;"></div>
<div style="left:1381px;top:0px;width:1px;height:910px;background:#D4D4D4;"></div>
<div style="left:1407px;top:0px;width:1px;height:910px;background:#D4D4D4;"></div>
<div style="left:1435px;top:0px;width:1px;height:910px;background:#D4D4D4;"></div>
<div style="left:1461px;top:0px;width:1px;height:910px;background:#D4D4D4;"></div>
<div style="left:1487px;top:0px;width:1px;height:910px;background:#D4D4D4;"></div>
<div style="left:1513px;top:0px;width:1px;height:910px;background:#D4D4D4;"></div>
<div style="left:1539px;top:0px;width:1px;height:910px;background:#D4D4D4;"></div>
<div style="left:1565px;top:0px;width:1px;height:910px;background:#D4D4D4;"></div>
<div style="left:1591px;top:0px;width:1px;height:910px;background:#D4D4D4;"></div>
<div style="left:1617px;top:0px;width:1px;height:910px;background:#D4D4D4;"></div>
<div style="left:1643px;top:0px;width:1px;height:910px;background:#D4D4D4;"></div>
<div style="left:1669px;top:0px;width:1px;height:910px;background:#D4D4D4;"></div>
<div style="left:1695px;top:0px;width:1px;height:910px;background:#D4D4D4;"></div>
<div style="left:1721px;top:0px;width:1px;height:910px;background:#D4D4D4;"></div>
<div style="left:1747px;top:0px;width:1px;height:910px;background:#D4D4D4;"></div>
<div style="left:1773px;top:0px;width:1px;height:910px;background:#D4D4D4;"></div>
<div style="left:1799px;top:0px;width:1px;height:910px;background:#D4D4D4;"></div>
<div style="left:1825px;top:0px;width:1px;height:910px;background:#D4D4D4;"></div>
<div style="left:1851px;top:0px;width:1px;height:910px;background:#D4D4D4;"></div>
<div style="left:1877px;top:0px;width:1px;height:910px;background:#D4D4D4;"></div>
<div style="left:0px;top:54px;width:1885px;height:1px;background:#D4D4D4;"></div>
<div style="left:0px;top:74px;width:1885px;height:1px;background:#D4D4D4;"></div>
<div style="left:0px;top:94px;width:1885px;height:1px;background:#D4D4D4;"></div>
<div style="left:0px;top:114px;width:1885px;height:1px;background:#D4D4D4;"></div>
<div style="left:0px;top:139px;width:1885px;height:1px;background:#D4D4D4;"></div>
<div style="left:0px;top:159px;width:1885px;height:1px;background:#D4D4D4;"></div>
<div style="left:0px;top:179px;width:1885px;height:1px;background:#D4D4D4;"></div>
<div style="left:0px;top:199px;width:1885px;height:1px;background:#D4D4D4;"></div>
<div style="left:0px;top:219px;width:1885px;height:1px;background:#D4D4D4;"></div>
<div style="left:0px;top:239px;width:1885px;height:1px;background:#D4D4D4;"></div>
<div style="left:0px;top:259px;width:1885px;height:1px;background:#D4D4D4;"></div>
<div style="left:0px;top:279px;width:1885px;height:1px;background:#D4D4D4;"></div>
<div style="left:0px;top:299px;width:1885px;height:1px;background:#D4D4D4;"></div>
<div style="left:0px;top:319px;width:1885px;height:1px;background:#D4D4D4;"></div>
<div style="left:0px;top:339px;width:1885px;height:1px;background:#D4D4D4;"></div>
<div style="left:0px;top:359px;width:1885px;height:1px;background:#D4D4D4;"></div>
<div style="left:0px;top:379px;width:1885px;height:1px;background:#D4D4D4;"></div>
<div style="left:0px;top:399px;width:1885px;height:1px;background:#D4D4D4;"></div>
<div style="left:0px;top:419px;width:1885px;height:1px;background:#D4D4D4;"></div>
<div style="left:0px;top:439px;width:1885px;height:1px;background:#D4D4D4;"></div>
<div style="left:0px;top:459px;width:1885px;height:1px;background:#D4D4D4;"></div>
<div style="left:0px;top:479px;width:1885px;height:1px;background:#D4D4D4;"></div>
<div style="left:0px;top:499px;width:1885px;height:1px;background:#D4D4D4;"></div>
<div style="left:0px;top:519px;width:1885px;height:1px;background:#D4D4D4;"></div>
<div style="left:0px;top:539px;width:1885px;height:1px;background:#D4D4D4;"></div>
<div style="left:0px;top:559px;width:1885px;height:1px;background:#D4D4D4;"></div>
<div style="left:0px;top:579px;width:1885px;height:1px;background:#D4D4D4;"></div>
<div style="left:0px;top:599px;width:1885px;height:1px;background:#D4D4D4;"></div>
<div style="left:0px;top:619px;width:1885px;height:1px;background:#D4D4D4;"></div>
<div style="left:0px;top:639px;width:1885px;height:1px;background:#D4D4D4;"></div>
<div style="left:0px;top:659px;width:1885px;height:1px;background:#D4D4D4;"></div>
<div style="left:0px;top:679px;width:1885px;height:1px;background:#D4D4D4;"></div>
<div style="left:0px;top:699px;width:1885px;height:1px;background:#D4D4D4;"></div>
<div style="left:0px;top:719px;width:1885px;height:1px;background:#D4D4D4;"></div>
<div style="left:0px;top:739px;width:1885px;height:1px;background:#D4D4D4;"></div>
<div style="left:0px;top:759px;width:1885px;height:1px;background:#D4D4D4;"></div>
<div style="left:0px;top:779px;width:1885px;height:1px;background:#D4D4D4;"></div>
<div style="left:0px;top:799px;width:1885px;height:1px;background:#D4D4D4;"></div>
<div style="left:0px;top:824px;width:1885px;height:1px;background:#D4D4D4;"></div>
<div style="left:0px;top:844px;width:1885px;height:1px;background:#D4D4D4;"></div>
<div style="left:0px;top:864px;width:1885px;height:1px;background:#D4D4D4;"></div>
<div style="left:0px;top:884px;width:1885px;height:1px;background:#D4D4D4;"></div>
<div style="left:0px;top:904px;width:1885px;height:1px;background:#D4D4D4;"></div>
<div style="left:497px;top:-1px;width:27px;height:56px;background:#9BC2E6;"></div>
<div style="left:523px;top:-1px;width:27px;height:56px;background:#9BC2E6;"></div>
<div style="left:549px;top:-1px;width:27px;height:56px;background:#9BC2E6;"></div>
<div style="left:575px;top:-1px;width:27px;height:56px;background:#9BC2E6;"></div>
<div style="left:601px;top:-1px;width:27px;height:56px;background:#9BC2E6;"></div>
<div style="left:627px;top:-1px;width:27px;height:56px;background:#BDD7EE;"></div>
<div style="left:653px;top:-1px;width:27px;height:56px;background:#BDD7EE;"></div>
<div style="left:679px;top:-1px;width:27px;height:56px;background:#9BC2E6;"></div>
<div style="left:705px;top:-1px;width:27px;height:56px;background:#9BC2E6;"></div>
<div style="left:731px;top:-1px;width:27px;height:56px;background:#9BC2E6;"></div>
<div style="left:757px;top:-1px;width:27px;height:56px;background:#9BC2E6;"></div>
<div style="left:783px;top:-1px;width:27px;height:56px;background:#9BC2E6;"></div>
<div style="left:809px;top:-1px;width:27px;height:56px;background:#BDD7EE;"></div>
<div style="left:835px;top:-1px;width:27px;height:56px;background:#BDD7EE;"></div>
<div style="left:861px;top:-1px;width:27px;height:56px;background:#9BC2E6;"></div>
<div style="left:887px;top:-1px;width:27px;height:56px;background:#9BC2E6;"></div>
<div style="left:913px;top:-1px;width:27px;height:56px;background:#9BC2E6;"></div>
<div style="left:939px;top:-1px;width:27px;height:56px;background:#9BC2E6;"></div>
<div style="left:965px;top:-1px;width:27px;height:56px;background:#9BC2E6;"></div>
<div style="left:991px;top:-1px;width:27px;height:56px;background:#BDD7EE;"></div>
<div style="left:1017px;top:-1px;width:27px;height:56px;background:#BDD7EE;"></div>
<div style="left:1043px;top:-1px;width:27px;height:56px;background:#9BC2E6;"></div>
<div style="left:1069px;top:-1px;width:27px;height:56px;background:#9BC2E6;"></div>
<div style="left:1095px;top:-1px;width:27px;height:56px;background:#9BC2E6;"></div>
<div style="left:1121px;top:-1px;width:27px;height:56px;background:#9BC2E6;"></div>
<div style="left:1147px;top:-1px;width:27px;height:56px;background:#9BC2E6;"></div>
<div style="left:1173px;top:-1px;width:27px;height:56px;background:#BDD7EE;"></div>
<div style="left:1199px;top:-1px;width:27px;height:56px;background:#BDD7EE;"></div>
<div style="left:1225px;top:-1px;width:27px;height:56px;background:#9BC2E6;"></div>
<div style="left:1251px;top:-1px;width:27px;height:56px;background:#9BC2E6;"></div>
<div style="left:1277px;top:-1px;width:27px;height:56px;background:#9BC2E6;"></div>
<div style="left:1303px;top:-1px;width:27px;height:56px;background:#9BC2E6;"></div>
<div style="left:1329px;top:-1px;width:27px;height:56px;background:#9BC2E6;"></div>
<div style="left:1355px;top:-1px;width:27px;height:56px;background:#BDD7EE;"></div>
<div style="left:1381px;top:-1px;width:27px;height:56px;background:#BDD7EE;"></div>
<div style="left:1407px;top:-1px;width:29px;height:56px;background:#9BC2E6;"></div>
<div style="left:1435px;top:-1px;width:27px;height:56px;background:#9BC2E6;"></div>
<div style="left:1461px;top:-1px;width:27px;height:56px;background:#9BC2E6;"></div>
<div style="left:1487px;top:-1px;width:27px;height:56px;background:#9BC2E6;"></div>
<div style="left:1513px;top:-1px;width:27px;height:56px;background:#9BC2E6;"></div>
<div style="left:1539px;top:-1px;width:27px;height:56px;background:#BDD7EE;"></div>
<div style="left:1565px;top:-1px;width:27px;height:56px;background:#BDD7EE;"></div>
<div style="left:1591px;top:-1px;width:27px;height:56px;background:#9BC2E6;"></div>
<div style="left:1617px;top:-1px;width:27px;height:56px;background:#9BC2E6;"></div>
<div style="left:1643px;top:-1px;width:27px;height:56px;background:#9BC2E6;"></div>
<div style="left:1669px;top:-1px;width:27px;height:56px;background:#9BC2E6;"></div>
<div style="left:1695px;top:-1px;width:27px;height:56px;background:#9BC2E6;"></div>
<div style="left:1721px;top:-1px;width:27px;height:56px;background:#BDD7EE;"></div>
<div style="left:1747px;top:-1px;width:27px;height:56px;background:#BDD7EE;"></div>
<div style="left:1773px;top:-1px;width:27px;height:56px;background:#9BC2E6;"></div>
<div style="left:1799px;top:-1px;width:27px;height:56px;background:#9BC2E6;"></div>
<div style="left:1825px;top:-1px;width:27px;height:56px;background:#9BC2E6;"></div>
<div style="left:1851px;top:-1px;width:27px;height:56px;background:#9BC2E6;"></div>
<div style="left:476px;top:54px;width:21px;height:1px;background:#fff;"></div>
<div style="left:497px;top:54px;width:183px;height:21px;background:#F8CBAD;"></div>
<div style="left:679px;top:54px;width:183px;height:21px;background:#F8CBAD;"></div>
<div style="left:861px;top:54px;width:183px;height:21px;background:#F8CBAD;"></div>
<div style="left:1043px;top:54px;width:183px;height:21px;background:#F8CBAD;"></div>
<div style="left:1225px;top:54px;width:183px;height:21px;background:#F8CBAD;"></div>
<div style="left:1407px;top:54px;width:185px;height:21px;background:#F8CBAD;"></div>
<div style="left:1591px;top:54px;width:183px;height:21px;background:#F8CBAD;"></div>
<div style="left:1773px;top:54px;width:183px;height:21px;background:#F8CBAD;"></div>
<div style="left:497px;top:114px;width:677px;height:26px;background:#0070C0;"></div>
<div style="left:1173px;top:114px;width:53px;height:26px;background:#C6E0B4;"></div>
<div style="left:1225px;top:114px;width:660px;height:26px;background:#C65911;"></div>
<div style="left:0px;top:115px;width:290px;height:24px;background:#fff;"></div>
<div style="left:497px;top:139px;width:183px;height:21px;background:#F8CBAD;"></div>
<div style="left:679px;top:139px;width:183px;height:21px;background:#F8CBAD;"></div>
<div style="left:861px;top:139px;width:183px;height:21px;background:#F8CBAD;"></div>
<div style="left:1043px;top:139px;width:183px;height:21px;background:#F8CBAD;"></div>
<div style="left:1225px;top:139px;width:183px;height:21px;background:#F8CBAD;"></div>
<div style="left:1407px;top:139px;width:185px;height:21px;background:#F8CBAD;"></div>
<div style="left:1591px;top:139px;width:183px;height:21px;background:#F8CBAD;"></div>
<div style="left:1773px;top:139px;width:183px;height:21px;background:#F8CBAD;"></div>
<div style="left:0px;top:159px;width:498px;height:21px;background:#C6E0B4;"></div>
<div style="left:497px;top:159px;width:27px;height:21px;background:#B4C6E7;"></div>
<div style="left:523px;top:159px;width:27px;height:21px;background:#B4C6E7;"></div>
<div style="left:549px;top:159px;width:27px;height:21px;background:#B4C6E7;"></div>
<div style="left:575px;top:159px;width:27px;height:21px;background:#B4C6E7;"></div>
<div style="left:601px;top:159px;width:27px;height:21px;background:#B4C6E7;"></div>
<div style="left:627px;top:159px;width:27px;height:21px;background:#D9E1F2;"></div>
<div style="left:653px;top:159px;width:27px;height:21px;background:#D9E1F2;"></div>
<div style="left:679px;top:159px;width:27px;height:21px;background:#B4C6E7;"></div>
<div style="left:705px;top:159px;width:27px;height:21px;background:#B4C6E7;"></div>
<div style="left:731px;top:159px;width:27px;height:21px;background:#B4C6E7;"></div>
<div style="left:757px;top:159px;width:27px;height:21px;background:#B4C6E7;"></div>
<div style="left:783px;top:159px;width:27px;height:21px;background:#B4C6E7;"></div>
<div style="left:809px;top:159px;width:27px;height:21px;background:#D9E1F2;"></div>
<div style="left:835px;top:159px;width:27px;height:21px;background:#D9E1F2;"></div>
<div style="left:861px;top:159px;width:27px;height:21px;background:#B4C6E7;"></div>
<div style="left:887px;top:159px;width:27px;height:21px;background:#B4C6E7;"></div>
<div style="left:913px;top:159px;width:27px;height:21px;background:#B4C6E7;"></div>
<div style="left:939px;top:159px;width:27px;height:21px;background:#B4C6E7;"></div>
<div style="left:965px;top:159px;width:27px;height:21px;background:#B4C6E7;"></div>
<div style="left:991px;top:159px;width:27px;height:21px;background:#D9E1F2;"></div>
<div style="left:1017px;top:159px;width:27px;height:21px;background:#D9E1F2;"></div>
<div style="left:1043px;top:159px;width:27px;height:21px;background:#B4C6E7;"></div>
<div style="left:1069px;top:159px;width:27px;height:21px;background:#B4C6E7;"></div>
<div style="left:1095px;top:159px;width:27px;height:21px;background:#B4C6E7;"></div>
<div style="left:1121px;top:159px;width:27px;height:21px;background:#B4C6E7;"></div>
<div style="left:1147px;top:159px;width:27px;height:21px;background:#B4C6E7;"></div>
<div style="left:1173px;top:159px;width:27px;height:21px;background:#D9E1F2;"></div>
<div style="left:1199px;top:159px;width:27px;height:21px;background:#D9E1F2;"></div>
<div style="left:1225px;top:159px;width:27px;height:21px;background:#B4C6E7;"></div>
<div style="left:1251px;top:159px;width:27px;height:21px;background:#B4C6E7;"></div>
<div style="left:1277px;top:159px;width:27px;height:21px;background:#B4C6E7;"></div>
<div style="left:1303px;top:159px;width:27px;height:21px;background:#B4C6E7;"></div>
<div style="left:1329px;top:159px;width:27px;height:21px;background:#B4C6E7;"></div>
<div style="left:1355px;top:159px;width:27px;height:21px;background:#D9E1F2;"></div>
<div style="left:1381px;top:159px;width:27px;height:21px;background:#D9E1F2;"></div>
<div style="left:1407px;top:159px;width:29px;height:21px;background:#B4C6E7;"></div>
<div style="left:1435px;top:159px;width:27px;height:21px;background:#B4C6E7;"></div>
<div style="left:1461px;top:159px;width:27px;height:21px;background:#B4C6E7;"></div>
<div style="left:1487px;top:159px;width:27px;height:21px;background:#B4C6E7;"></div>
<div style="left:1513px;top:159px;width:27px;height:21px;background:#B4C6E7;"></div>
<div style="left:1539px;top:159px;width:27px;height:21px;background:#D9E1F2;"></div>
<div style="left:1565px;top:159px;width:27px;height:21px;background:#D9E1F2;"></div>
<div style="left:1591px;top:159px;width:27px;height:21px;background:#B4C6E7;"></div>
<div style="left:1617px;top:159px;width:27px;height:21px;background:#B4C6E7;"></div>
<div style="left:1643px;top:159px;width:27px;height:21px;background:#B4C6E7;"></div>
<div style="left:1669px;top:159px;width:27px;height:21px;background:#B4C6E7;"></div>
<div style="left:1695px;top:159px;width:27px;height:21px;background:#B4C6E7;"></div>
<div style="left:1721px;top:159px;width:27px;height:21px;background:#D9E1F2;"></div>
<div style="left:1747px;top:159px;width:27px;height:21px;background:#D9E1F2;"></div>
<div style="left:1773px;top:159px;width:27px;height:21px;background:#B4C6E7;"></div>
<div style="left:1799px;top:159px;width:27px;height:21px;background:#B4C6E7;"></div>
<div style="left:1825px;top:159px;width:27px;height:21px;background:#B4C6E7;"></div>
<div style="left:1851px;top:159px;width:27px;height:21px;background:#B4C6E7;"></div>
<div style="left:0px;top:179px;width:498px;height:541px;background:#DDEBF7;"></div>
<div style="left:497px;top:179px;width:183px;height:21px;background:#FCE4D6;"></div>
<div style="left:679px;top:179px;width:183px;height:21px;background:#FCE4D6;"></div>
<div style="left:861px;top:179px;width:183px;height:21px;background:#FCE4D6;"></div>
<div style="left:1043px;top:179px;width:183px;height:21px;background:#FCE4D6;"></div>
<div style="left:1225px;top:179px;width:183px;height:21px;background:#FCE4D6;"></div>
<div style="left:1407px;top:179px;width:185px;height:21px;background:#FCE4D6;"></div>
<div style="left:1591px;top:179px;width:183px;height:21px;background:#FCE4D6;"></div>
<div style="left:1773px;top:179px;width:183px;height:21px;background:#FCE4D6;"></div>
<div style="left:497px;top:199px;width:183px;height:21px;background:#FCE4D6;"></div>
<div style="left:679px;top:199px;width:183px;height:21px;background:#FCE4D6;"></div>
<div style="left:861px;top:199px;width:183px;height:21px;background:#FCE4D6;"></div>
<div style="left:1043px;top:199px;width:183px;height:21px;background:#FCE4D6;"></div>
<div style="left:1225px;top:199px;width:183px;height:21px;background:#FCE4D6;"></div>
<div style="left:1407px;top:199px;width:185px;height:21px;background:#FCE4D6;"></div>
<div style="left:1591px;top:199px;width:183px;height:21px;background:#FCE4D6;"></div>
<div style="left:1773px;top:199px;width:183px;height:21px;background:#FCE4D6;"></div>
<div style="left:497px;top:219px;width:183px;height:21px;background:#FCE4D6;"></div>
<div style="left:679px;top:219px;width:183px;height:21px;background:#FCE4D6;"></div>
<div style="left:861px;top:219px;width:183px;height:21px;background:#FCE4D6;"></div>
<div style="left:1043px;top:219px;width:183px;height:21px;background:#FCE4D6;"></div>
<div style="left:1225px;top:219px;width:183px;height:21px;background:#FCE4D6;"></div>
<div style="left:1407px;top:219px;width:185px;height:21px;background:#FCE4D6;"></div>
<div style="left:1591px;top:219px;width:183px;height:21px;background:#FCE4D6;"></div>
<div style="left:1773px;top:219px;width:183px;height:21px;background:#FCE4D6;"></div>
<div style="left:497px;top:239px;width:183px;height:21px;background:#FCE4D6;"></div>
<div style="left:679px;top:239px;width:183px;height:21px;background:#FCE4D6;"></div>
<div style="left:861px;top:239px;width:183px;height:21px;background:#FCE4D6;"></div>
<div style="left:1043px;top:239px;width:183px;height:21px;background:#FCE4D6;"></div>
<div style="left:1225px;top:239px;width:183px;height:21px;background:#FCE4D6;"></div>
<div style="left:1407px;top:239px;width:185px;height:21px;background:#FCE4D6;"></div>
<div style="left:1591px;top:239px;width:183px;height:21px;background:#FCE4D6;"></div>
<div style="left:1773px;top:239px;width:183px;height:21px;background:#FCE4D6;"></div>
<div style="left:497px;top:259px;width:183px;height:21px;background:#DDEBF7;"></div>
<div style="left:679px;top:259px;width:183px;height:21px;background:#DDEBF7;"></div>
<div style="left:861px;top:259px;width:183px;height:21px;background:#FCE4D6;"></div>
<div style="left:1043px;top:259px;width:183px;height:21px;background:#FCE4D6;"></div>
<div style="left:1225px;top:259px;width:183px;height:21px;background:#FCE4D6;"></div>
<div style="left:1407px;top:259px;width:185px;height:21px;background:#FCE4D6;"></div>
<div style="left:1591px;top:259px;width:183px;height:21px;background:#FCE4D6;"></div>
<div style="left:1773px;top:259px;width:183px;height:21px;background:#FCE4D6;"></div>
<div style="left:497px;top:279px;width:183px;height:21px;background:#DDEBF7;"></div>
<div style="left:679px;top:279px;width:183px;height:21px;background:#DDEBF7;"></div>
<div style="left:861px;top:279px;width:183px;height:21px;background:#DDEBF7;"></div>
<div style="left:1043px;top:279px;width:183px;height:21px;background:#DDEBF7;"></div>
<div style="left:1225px;top:279px;width:183px;height:21px;background:#DDEBF7;"></div>
<div style="left:1407px;top:279px;width:185px;height:21px;background:#DDEBF7;"></div>
<div style="left:1591px;top:279px;width:183px;height:21px;background:#DDEBF7;"></div>
<div style="left:1773px;top:279px;width:183px;height:21px;background:#DDEBF7;"></div>
<div style="left:497px;top:299px;width:183px;height:21px;background:#DDEBF7;"></div>
<div style="left:679px;top:299px;width:183px;height:21px;background:#DDEBF7;"></div>
<div style="left:861px;top:299px;width:183px;height:21px;background:#DDEBF7;"></div>
<div style="left:1043px;top:299px;width:183px;height:21px;background:#DDEBF7;"></div>
<div style="left:1225px;top:299px;width:183px;height:21px;background:#DDEBF7;"></div>
<div style="left:1407px;top:299px;width:185px;height:21px;background:#DDEBF7;"></div>
<div style="left:1591px;top:299px;width:183px;height:21px;background:#DDEBF7;"></div>
<div style="left:1773px;top:299px;width:183px;height:21px;background:#DDEBF7;"></div>
<div style="left:497px;top:319px;width:183px;height:21px;background:#DDEBF7;"></div>
<div style="left:679px;top:319px;width:183px;height:21px;background:#FCE4D6;"></div>
<div style="left:861px;top:319px;width:183px;height:21px;background:#FCE4D6;"></div>
<div style="left:1043px;top:319px;width:183px;height:21px;background:#FCE4D6;"></div>
<div style="left:1225px;top:319px;width:183px;height:21px;background:#DDEBF7;"></div>
<div style="left:1407px;top:319px;width:185px;height:21px;background:#DDEBF7;"></div>
<div style="left:1591px;top:319px;width:183px;height:21px;background:#DDEBF7;"></div>
<div style="left:1773px;top:319px;width:183px;height:21px;background:#DDEBF7;"></div>
<div style="left:497px;top:339px;width:183px;height:21px;background:#DDEBF7;"></div>
<div style="left:679px;top:339px;width:183px;height:21px;background:#DDEBF7;"></div>
<div style="left:861px;top:339px;width:183px;height:21px;background:#DDEBF7;"></div>
<div style="left:1043px;top:339px;width:183px;height:21px;background:#DDEBF7;"></div>
<div style="left:1225px;top:339px;width:183px;height:21px;background:#DDEBF7;"></div>
<div style="left:1407px;top:339px;width:185px;height:21px;background:#DDEBF7;"></div>
<div style="left:1591px;top:339px;width:183px;height:21px;background:#DDEBF7;"></div>
<div style="left:1773px;top:339px;width:183px;height:21px;background:#DDEBF7;"></div>
<div style="left:497px;top:359px;width:183px;height:21px;background:#DDEBF7;"></div>
<div style="left:679px;top:359px;width:183px;height:21px;background:#DDEBF7;"></div>
<div style="left:861px;top:359px;width:183px;height:21px;background:#DDEBF7;"></div>
<div style="left:1043px;top:359px;width:183px;height:21px;background:#DDEBF7;"></div>
<div style="left:1225px;top:359px;width:183px;height:21px;background:#DDEBF7;"></div>
<div style="left:1407px;top:359px;width:185px;height:21px;background:#DDEBF7;"></div>
<div style="left:1591px;top:359px;width:183px;height:21px;background:#DDEBF7;"></div>
<div style="left:1773px;top:359px;width:183px;height:21px;background:#DDEBF7;"></div>
<div style="left:497px;top:379px;width:183px;height:21px;background:#DDEBF7;"></div>
<div style="left:679px;top:379px;width:183px;height:21px;background:#DDEBF7;"></div>
<div style="left:861px;top:379px;width:183px;height:21px;background:#DDEBF7;"></div>
<div style="left:1043px;top:379px;width:183px;height:21px;background:#DDEBF7;"></div>
<div style="left:1225px;top:379px;width:183px;height:21px;background:#DDEBF7;"></div>
<div style="left:1407px;top:379px;width:185px;height:21px;background:#DDEBF7;"></div>
<div style="left:1591px;top:379px;width:183px;height:21px;background:#DDEBF7;"></div>
<div style="left:1773px;top:379px;width:183px;height:21px;background:#DDEBF7;"></div>
<div style="left:497px;top:399px;width:183px;height:21px;background:#DDEBF7;"></div>
<div style="left:679px;top:399px;width:183px;height:21px;background:#DDEBF7;"></div>
<div style="left:861px;top:399px;width:183px;height:21px;background:#DDEBF7;"></div>
<div style="left:1043px;top:399px;width:183px;height:21px;background:#DDEBF7;"></div>
<div style="left:1225px;top:399px;width:183px;height:21px;background:#DDEBF7;"></div>
<div style="left:1407px;top:399px;width:185px;height:21px;background:#DDEBF7;"></div>
<div style="left:1591px;top:399px;width:183px;height:21px;background:#DDEBF7;"></div>
<div style="left:1773px;top:399px;width:183px;height:21px;background:#DDEBF7;"></div>
<div style="left:497px;top:419px;width:183px;height:21px;background:#DDEBF7;"></div>
<div style="left:679px;top:419px;width:183px;height:21px;background:#DDEBF7;"></div>
<div style="left:861px;top:419px;width:183px;height:21px;background:#DDEBF7;"></div>
<div style="left:1043px;top:419px;width:183px;height:21px;background:#DDEBF7;"></div>
<div style="left:1225px;top:419px;width:183px;height:21px;background:#DDEBF7;"></div>
<div style="left:1407px;top:419px;width:185px;height:21px;background:#DDEBF7;"></div>
<div style="left:1591px;top:419px;width:183px;height:21px;background:#DDEBF7;"></div>
<div style="left:1773px;top:419px;width:183px;height:21px;background:#DDEBF7;"></div>
<div style="left:497px;top:439px;width:183px;height:21px;background:#DDEBF7;"></div>
<div style="left:679px;top:439px;width:183px;height:21px;background:#DDEBF7;"></div>
<div style="left:861px;top:439px;width:183px;height:21px;background:#DDEBF7;"></div>
<div style="left:1043px;top:439px;width:183px;height:21px;background:#DDEBF7;"></div>
<div style="left:1225px;top:439px;width:183px;height:21px;background:#DDEBF7;"></div>
<div style="left:1407px;top:439px;width:185px;height:21px;background:#DDEBF7;"></div>
<div style="left:1591px;top:439px;width:183px;height:21px;background:#DDEBF7;"></div>
<div style="left:1773px;top:439px;width:183px;height:21px;background:#DDEBF7;"></div>
<div style="left:497px;top:459px;width:183px;height:21px;background:#DDEBF7;"></div>
<div style="left:679px;top:459px;width:183px;height:21px;background:#DDEBF7;"></div>
<div style="left:861px;top:459px;width:183px;height:21px;background:#DDEBF7;"></div>
<div style="left:1043px;top:459px;width:183px;height:21px;background:#DDEBF7;"></div>
<div style="left:1225px;top:459px;width:183px;height:21px;background:#DDEBF7;"></div>
<div style="left:1407px;top:459px;width:185px;height:21px;background:#DDEBF7;"></div>
<div style="left:1591px;top:459px;width:183px;height:21px;background:#DDEBF7;"></div>
<div style="left:1773px;top:459px;width:183px;height:21px;background:#DDEBF7;"></div>
<div style="left:497px;top:479px;width:183px;height:21px;background:#DDEBF7;"></div>
<div style="left:679px;top:479px;width:183px;height:21px;background:#DDEBF7;"></div>
<div style="left:861px;top:479px;width:183px;height:21px;background:#DDEBF7;"></div>
<div style="left:1043px;top:479px;width:183px;height:21px;background:#DDEBF7;"></div>
<div style="left:1225px;top:479px;width:183px;height:21px;background:#DDEBF7;"></div>
<div style="left:1407px;top:479px;width:185px;height:21px;background:#DDEBF7;"></div>
<div style="left:1591px;top:479px;width:183px;height:21px;background:#DDEBF7;"></div>
<div style="left:1773px;top:479px;width:183px;height:21px;background:#DDEBF7;"></div>
<div style="left:497px;top:499px;width:183px;height:21px;background:#DDEBF7;"></div>
<div style="left:679px;top:499px;width:183px;height:21px;background:#DDEBF7;"></div>
<div style="left:861px;top:499px;width:183px;height:21px;background:#DDEBF7;"></div>
<div style="left:1043px;top:499px;width:183px;height:21px;background:#DDEBF7;"></div>
<div style="left:1225px;top:499px;width:183px;height:21px;background:#DDEBF7;"></div>
<div style="left:1407px;top:499px;width:185px;height:21px;background:#DDEBF7;"></div>
<div style="left:1591px;top:499px;width:183px;height:21px;background:#DDEBF7;"></div>
<div style="left:1773px;top:499px;width:183px;height:21px;background:#DDEBF7;"></div>
<div style="left:497px;top:519px;width:183px;height:21px;background:#DDEBF7;"></div>
<div style="left:679px;top:519px;width:183px;height:21px;background:#DDEBF7;"></div>
<div style="left:861px;top:519px;width:183px;height:21px;background:#DDEBF7;"></div>
<div style="left:1043px;top:519px;width:183px;height:21px;background:#DDEBF7;"></div>
<div style="left:1225px;top:519px;width:183px;height:21px;background:#DDEBF7;"></div>
<div style="left:1407px;top:519px;width:185px;height:21px;background:#DDEBF7;"></div>
<div style="left:1591px;top:519px;width:183px;height:21px;background:#DDEBF7;"></div>
<div style="left:1773px;top:519px;width:183px;height:21px;background:#DDEBF7;"></div>
<div style="left:497px;top:539px;width:183px;height:21px;background:#DDEBF7;"></div>
<div style="left:679px;top:539px;width:183px;height:21px;background:#DDEBF7;"></div>
<div style="left:861px;top:539px;width:183px;height:21px;background:#DDEBF7;"></div>
<div style="left:1043px;top:539px;width:183px;height:21px;background:#DDEBF7;"></div>
<div style="left:1225px;top:539px;width:183px;height:21px;background:#DDEBF7;"></div>
<div style="left:1407px;top:539px;width:185px;height:21px;background:#DDEBF7;"></div>
<div style="left:1591px;top:539px;width:183px;height:21px;background:#DDEBF7;"></div>
<div style="left:1773px;top:539px;width:183px;height:21px;background:#DDEBF7;"></div>
<div style="left:497px;top:559px;width:183px;height:21px;background:#DDEBF7;"></div>
<div style="left:679px;top:559px;width:183px;height:21px;background:#DDEBF7;"></div>
<div style="left:861px;top:559px;width:183px;height:21px;background:#DDEBF7;"></div>
<div style="left:1043px;top:559px;width:183px;height:21px;background:#DDEBF7;"></div>
<div style="left:1225px;top:559px;width:183px;height:21px;background:#DDEBF7;"></div>
<div style="left:1407px;top:559px;width:185px;height:21px;background:#DDEBF7;"></div>
<div style="left:1591px;top:559px;width:183px;height:21px;background:#DDEBF7;"></div>
<div style="left:1773px;top:559px;width:183px;height:21px;background:#DDEBF7;"></div>
<div style="left:497px;top:579px;width:183px;height:21px;background:#DDEBF7;"></div>
<div style="left:679px;top:579px;width:183px;height:21px;background:#DDEBF7;"></div>
<div style="left:861px;top:579px;width:183px;height:21px;background:#DDEBF7;"></div>
<div style="left:1043px;top:579px;width:183px;height:21px;background:#DDEBF7;"></div>
<div style="left:1225px;top:579px;width:183px;height:21px;background:#DDEBF7;"></div>
<div style="left:1407px;top:579px;width:185px;height:21px;background:#DDEBF7;"></div>
<div style="left:1591px;top:579px;width:183px;height:21px;background:#DDEBF7;"></div>
<div style="left:1773px;top:579px;width:183px;height:21px;background:#DDEBF7;"></div>
<div style="left:497px;top:599px;width:183px;height:21px;background:#DDEBF7;"></div>
<div style="left:679px;top:599px;width:183px;height:21px;background:#DDEBF7;"></div>
<div style="left:861px;top:599px;width:183px;height:21px;background:#DDEBF7;"></div>
<div style="left:1043px;top:599px;width:183px;height:21px;background:#DDEBF7;"></div>
<div style="left:1225px;top:599px;width:183px;height:21px;background:#DDEBF7;"></div>
<div style="left:1407px;top:599px;width:185px;height:21px;background:#DDEBF7;"></div>
<div style="left:1591px;top:599px;width:183px;height:21px;background:#DDEBF7;"></div>
<div style="left:1773px;top:599px;width:183px;height:21px;background:#DDEBF7;"></div>
<div style="left:497px;top:619px;width:183px;height:21px;background:#DDEBF7;"></div>
<div style="left:679px;top:619px;width:183px;height:21px;background:#DDEBF7;"></div>
<div style="left:861px;top:619px;width:183px;height:21px;background:#DDEBF7;"></div>
<div style="left:1043px;top:619px;width:183px;height:21px;background:#DDEBF7;"></div>
<div style="left:1225px;top:619px;width:183px;height:21px;background:#DDEBF7;"></div>
<div style="left:1407px;top:619px;width:185px;height:21px;background:#DDEBF7;"></div>
<div style="left:1591px;top:619px;width:183px;height:21px;background:#DDEBF7;"></div>
<div style="left:1773px;top:619px;width:183px;height:21px;background:#DDEBF7;"></div>
<div style="left:497px;top:639px;width:183px;height:21px;background:#DDEBF7;"></div>
<div style="left:679px;top:639px;width:183px;height:21px;background:#DDEBF7;"></div>
<div style="left:861px;top:639px;width:183px;height:21px;background:#DDEBF7;"></div>
<div style="left:1043px;top:639px;width:183px;height:21px;background:#DDEBF7;"></div>
<div style="left:1225px;top:639px;width:183px;height:21px;background:#DDEBF7;"></div>
<div style="left:1407px;top:639px;width:185px;height:21px;background:#DDEBF7;"></div>
<div style="left:1591px;top:639px;width:183px;height:21px;background:#DDEBF7;"></div>
<div style="left:1773px;top:639px;width:183px;height:21px;background:#DDEBF7;"></div>
<div style="left:497px;top:659px;width:183px;height:21px;background:#DDEBF7;"></div>
<div style="left:679px;top:659px;width:183px;height:21px;background:#DDEBF7;"></div>
<div style="left:861px;top:659px;width:183px;height:21px;background:#DDEBF7;"></div>
<div style="left:1043px;top:659px;width:183px;height:21px;background:#DDEBF7;"></div>
<div style="left:1225px;top:659px;width:183px;height:21px;background:#DDEBF7;"></div>
<div style="left:1407px;top:659px;width:185px;height:21px;background:#DDEBF7;"></div>
<div style="left:1591px;top:659px;width:183px;height:21px;background:#DDEBF7;"></div>
<div style="left:1773px;top:659px;width:183px;height:21px;background:#DDEBF7;"></div>
<div style="left:497px;top:679px;width:183px;height:21px;background:#DDEBF7;"></div>
<div style="left:679px;top:679px;width:183px;height:21px;background:#DDEBF7;"></div>
<div style="left:861px;top:679px;width:183px;height:21px;background:#DDEBF7;"></div>
<div style="left:1043px;top:679px;width:183px;height:21px;background:#DDEBF7;"></div>
<div style="left:1225px;top:679px;width:183px;height:21px;background:#DDEBF7;"></div>
<div style="left:1407px;top:679px;width:185px;height:21px;background:#DDEBF7;"></div>
<div style="left:1591px;top:679px;width:183px;height:21px;background:#DDEBF7;"></div>
<div style="left:1773px;top:679px;width:183px;height:21px;background:#DDEBF7;"></div>
<div style="left:497px;top:699px;width:183px;height:21px;background:#DDEBF7;"></div>
<div style="left:679px;top:699px;width:183px;height:21px;background:#DDEBF7;"></div>
<div style="left:861px;top:699px;width:183px;height:21px;background:#DDEBF7;"></div>
<div style="left:1043px;top:699px;width:183px;height:21px;background:#DDEBF7;"></div>
<div style="left:1225px;top:699px;width:183px;height:21px;background:#DDEBF7;"></div>
<div style="left:1407px;top:699px;width:185px;height:21px;background:#DDEBF7;"></div>
<div style="left:1591px;top:699px;width:183px;height:21px;background:#DDEBF7;"></div>
<div style="left:1773px;top:699px;width:183px;height:21px;background:#DDEBF7;"></div>
<div style="left:295px;top:719px;width:203px;height:41px;background:#BDD7EE;"></div>
<div style="left:497px;top:719px;width:183px;height:21px;background:#BDD7EE;"></div>
<div style="left:679px;top:719px;width:183px;height:21px;background:#BDD7EE;"></div>
<div style="left:861px;top:719px;width:183px;height:21px;background:#BDD7EE;"></div>
<div style="left:1043px;top:719px;width:183px;height:21px;background:#BDD7EE;"></div>
<div style="left:1225px;top:719px;width:183px;height:21px;background:#BDD7EE;"></div>
<div style="left:1407px;top:719px;width:185px;height:21px;background:#BDD7EE;"></div>
<div style="left:1591px;top:719px;width:183px;height:21px;background:#BDD7EE;"></div>
<div style="left:1773px;top:719px;width:183px;height:21px;background:#BDD7EE;"></div>
<div style="left:497px;top:739px;width:183px;height:21px;background:#BDD7EE;"></div>
<div style="left:679px;top:739px;width:183px;height:21px;background:#BDD7EE;"></div>
<div style="left:861px;top:739px;width:183px;height:21px;background:#BDD7EE;"></div>
<div style="left:1043px;top:739px;width:183px;height:21px;background:#BDD7EE;"></div>
<div style="left:1225px;top:739px;width:183px;height:21px;background:#BDD7EE;"></div>
<div style="left:1407px;top:739px;width:185px;height:21px;background:#BDD7EE;"></div>
<div style="left:1591px;top:739px;width:183px;height:21px;background:#BDD7EE;"></div>
<div style="left:1773px;top:739px;width:183px;height:21px;background:#BDD7EE;"></div>
<div style="left:497px;top:779px;width:183px;height:21px;background:#F8CBAD;"></div>
<div style="left:679px;top:779px;width:183px;height:21px;background:#F8CBAD;"></div>
<div style="left:861px;top:779px;width:183px;height:21px;background:#F8CBAD;"></div>
<div style="left:1043px;top:779px;width:183px;height:21px;background:#F8CBAD;"></div>
<div style="left:1225px;top:779px;width:183px;height:21px;background:#F8CBAD;"></div>
<div style="left:1407px;top:779px;width:185px;height:21px;background:#F8CBAD;"></div>
<div style="left:1591px;top:779px;width:183px;height:21px;background:#F8CBAD;"></div>
<div style="left:1773px;top:779px;width:183px;height:21px;background:#F8CBAD;"></div>
<div style="left:295px;top:799px;width:203px;height:26px;background:#E2EFDA;"></div>
<div style="left:497px;top:799px;width:677px;height:26px;background:#0070C0;"></div>
<div style="left:1173px;top:799px;width:53px;height:26px;background:#C6E0B4;"></div>
<div style="left:1225px;top:799px;width:660px;height:26px;background:#C65911;"></div>
<div style="left:295px;top:824px;width:203px;height:86px;background:#E2EFDA;"></div>
<div style="left:497px;top:824px;width:183px;height:21px;background:#E2EFDA;"></div>
<div style="left:679px;top:824px;width:183px;height:21px;background:#E2EFDA;"></div>
<div style="left:861px;top:824px;width:183px;height:21px;background:#E2EFDA;"></div>
<div style="left:1043px;top:824px;width:183px;height:21px;background:#E2EFDA;"></div>
<div style="left:1225px;top:824px;width:183px;height:21px;background:#E2EFDA;"></div>
<div style="left:1407px;top:824px;width:185px;height:21px;background:#E2EFDA;"></div>
<div style="left:1591px;top:824px;width:183px;height:21px;background:#E2EFDA;"></div>
<div style="left:1773px;top:824px;width:183px;height:21px;background:#E2EFDA;"></div>
<div style="left:497px;top:844px;width:183px;height:21px;background:#E2EFDA;"></div>
<div style="left:679px;top:844px;width:183px;height:21px;background:#E2EFDA;"></div>
<div style="left:861px;top:844px;width:183px;height:21px;background:#E2EFDA;"></div>
<div style="left:1043px;top:844px;width:183px;height:21px;background:#E2EFDA;"></div>
<div style="left:1225px;top:844px;width:183px;height:21px;background:#E2EFDA;"></div>
<div style="left:1407px;top:844px;width:185px;height:21px;background:#E2EFDA;"></div>
<div style="left:1591px;top:844px;width:183px;height:21px;background:#E2EFDA;"></div>
<div style="left:1773px;top:844px;width:183px;height:21px;background:#E2EFDA;"></div>
<div style="left:497px;top:864px;width:183px;height:21px;background:#E2EFDA;"></div>
<div style="left:679px;top:864px;width:183px;height:21px;background:#E2EFDA;"></div>
<div style="left:861px;top:864px;width:183px;height:21px;background:#E2EFDA;"></div>
<div style="left:1043px;top:864px;width:183px;height:21px;background:#E2EFDA;"></div>
<div style="left:1225px;top:864px;width:183px;height:21px;background:#E2EFDA;"></div>
<div style="left:1407px;top:864px;width:185px;height:21px;background:#E2EFDA;"></div>
<div style="left:1591px;top:864px;width:183px;height:21px;background:#E2EFDA;"></div>
<div style="left:1773px;top:864px;width:183px;height:21px;background:#E2EFDA;"></div>
<div style="left:497px;top:884px;width:183px;height:21px;background:#E2EFDA;"></div>
<div style="left:679px;top:884px;width:183px;height:21px;background:#E2EFDA;"></div>
<div style="left:861px;top:884px;width:183px;height:21px;background:#E2EFDA;"></div>
<div style="left:1043px;top:884px;width:183px;height:21px;background:#E2EFDA;"></div>
<div style="left:1225px;top:884px;width:183px;height:21px;background:#E2EFDA;"></div>
<div style="left:1407px;top:884px;width:185px;height:21px;background:#E2EFDA;"></div>
<div style="left:1591px;top:884px;width:183px;height:21px;background:#E2EFDA;"></div>
<div style="left:1773px;top:884px;width:183px;height:21px;background:#E2EFDA;"></div>
<div style="left:497px;top:-1px;width:1px;height:76px;background:#000;"></div>
<div style="left:679px;top:-1px;width:1px;height:76px;background:#000;"></div>
<div style="left:861px;top:-1px;width:1px;height:76px;background:#000;"></div>
<div style="left:1043px;top:-1px;width:1px;height:76px;background:#000;"></div>
<div style="left:1225px;top:-1px;width:1px;height:76px;background:#000;"></div>
<div style="left:1407px;top:-1px;width:1px;height:76px;background:#000;"></div>
<div style="left:1591px;top:-1px;width:1px;height:76px;background:#000;"></div>
<div style="left:1773px;top:-1px;width:1px;height:76px;background:#000;"></div>
<div style="left:1955px;top:-1px;width:1px;height:76px;background:#000;"></div>
<div style="left:497px;top:54px;width:1388px;height:1px;background:#000;"></div>
<div style="left:497px;top:74px;width:1388px;height:1px;background:#000;"></div>
<div style="left:601px;top:114px;width:27px;height:1px;background:#000;"></div>
<div style="left:497px;top:139px;width:1px;height:41px;background:#000;"></div>
<div style="left:679px;top:139px;width:1px;height:41px;background:#000;"></div>
<div style="left:861px;top:139px;width:1px;height:41px;background:#000;"></div>
<div style="left:1043px;top:139px;width:1px;height:41px;background:#000;"></div>
<div style="left:1225px;top:139px;width:1px;height:41px;background:#000;"></div>
<div style="left:1407px;top:139px;width:1px;height:41px;background:#000;"></div>
<div style="left:1591px;top:139px;width:1px;height:41px;background:#000;"></div>
<div style="left:1773px;top:139px;width:1px;height:41px;background:#000;"></div>
<div style="left:1955px;top:139px;width:1px;height:41px;background:#000;"></div>
<div style="left:497px;top:139px;width:1388px;height:1px;background:#000;"></div>
<div style="left:0px;top:159px;width:1885px;height:1px;background:#000;"></div>
<div style="left:0px;top:179px;width:1885px;height:1px;background:#000;"></div>
<div style="left:523px;top:159px;width:1px;height:21px;background:#000;"></div>
<div style="left:549px;top:159px;width:1px;height:21px;background:#000;"></div>
<div style="left:575px;top:159px;width:1px;height:21px;background:#000;"></div>
<div style="left:601px;top:159px;width:1px;height:21px;background:#000;"></div>
<div style="left:627px;top:159px;width:1px;height:21px;background:#000;"></div>
<div style="left:653px;top:159px;width:1px;height:21px;background:#000;"></div>
<div style="left:679px;top:159px;width:1px;height:21px;background:#000;"></div>
<div style="left:705px;top:159px;width:1px;height:21px;background:#000;"></div>
<div style="left:731px;top:159px;width:1px;height:21px;background:#000;"></div>
<div style="left:757px;top:159px;width:1px;height:21px;background:#000;"></div>
<div style="left:783px;top:159px;width:1px;height:21px;background:#000;"></div>
<div style="left:809px;top:159px;width:1px;height:21px;background:#000;"></div>
<div style="left:835px;top:159px;width:1px;height:21px;background:#000;"></div>
<div style="left:861px;top:159px;width:1px;height:21px;background:#000;"></div>
<div style="left:887px;top:159px;width:1px;height:21px;background:#000;"></div>
<div style="left:913px;top:159px;width:1px;height:21px;background:#000;"></div>
<div style="left:939px;top:159px;width:1px;height:21px;background:#000;"></div>
<div style="left:965px;top:159px;width:1px;height:21px;background:#000;"></div>
<div style="left:991px;top:159px;width:1px;height:21px;background:#000;"></div>
<div style="left:1017px;top:159px;width:1px;height:21px;background:#000;"></div>
<div style="left:1043px;top:159px;width:1px;height:21px;background:#000;"></div>
<div style="left:1069px;top:159px;width:1px;height:21px;background:#000;"></div>
<div style="left:1095px;top:159px;width:1px;height:21px;background:#000;"></div>
<div style="left:1121px;top:159px;width:1px;height:21px;background:#000;"></div>
<div style="left:1147px;top:159px;width:1px;height:21px;background:#000;"></div>
<div style="left:1173px;top:159px;width:1px;height:21px;background:#000;"></div>
<div style="left:1199px;top:159px;width:1px;height:21px;background:#000;"></div>
<div style="left:1225px;top:159px;width:1px;height:21px;background:#000;"></div>
<div style="left:1251px;top:159px;width:1px;height:21px;background:#000;"></div>
<div style="left:1277px;top:159px;width:1px;height:21px;background:#000;"></div>
<div style="left:1303px;top:159px;width:1px;height:21px;background:#000;"></div>
<div style="left:1329px;top:159px;width:1px;height:21px;background:#000;"></div>
<div style="left:1355px;top:159px;width:1px;height:21px;background:#000;"></div>
<div style="left:1381px;top:159px;width:1px;height:21px;background:#000;"></div>
<div style="left:1407px;top:159px;width:1px;height:21px;background:#000;"></div>
<div style="left:1435px;top:159px;width:1px;height:21px;background:#000;"></div>
<div style="left:1461px;top:159px;width:1px;height:21px;background:#000;"></div>
<div style="left:1487px;top:159px;width:1px;height:21px;background:#000;"></div>
<div style="left:1513px;top:159px;width:1px;height:21px;background:#000;"></div>
<div style="left:1539px;top:159px;width:1px;height:21px;background:#000;"></div>
<div style="left:1565px;top:159px;width:1px;height:21px;background:#000;"></div>
<div style="left:1591px;top:159px;width:1px;height:21px;background:#000;"></div>
<div style="left:1617px;top:159px;width:1px;height:21px;background:#000;"></div>
<div style="left:1643px;top:159px;width:1px;height:21px;background:#000;"></div>
<div style="left:1669px;top:159px;width:1px;height:21px;background:#000;"></div>
<div style="left:1695px;top:159px;width:1px;height:21px;background:#000;"></div>
<div style="left:1721px;top:159px;width:1px;height:21px;background:#000;"></div>
<div style="left:1747px;top:159px;width:1px;height:21px;background:#000;"></div>
<div style="left:1773px;top:159px;width:1px;height:21px;background:#000;"></div>
<div style="left:1799px;top:159px;width:1px;height:21px;background:#000;"></div>
<div style="left:1825px;top:159px;width:1px;height:21px;background:#000;"></div>
<div style="left:1851px;top:159px;width:1px;height:21px;background:#000;"></div>
<div style="left:1877px;top:159px;width:1px;height:21px;background:#000;"></div>
<div style="left:295px;top:159px;width:1px;height:601px;background:#000;"></div>
<div style="left:295px;top:799px;width:1px;height:111px;background:#000;"></div>
<div style="left:497px;top:199px;width:1388px;height:1px;background:#000;"></div>
<div style="left:497px;top:219px;width:1388px;height:1px;background:#000;"></div>
<div style="left:497px;top:239px;width:1388px;height:1px;background:#000;"></div>
<div style="left:497px;top:259px;width:1388px;height:1px;background:#000;"></div>
<div style="left:497px;top:279px;width:1388px;height:1px;background:#000;"></div>
<div style="left:497px;top:299px;width:1388px;height:1px;background:#000;"></div>
<div style="left:497px;top:319px;width:1388px;height:1px;background:#000;"></div>
<div style="left:497px;top:339px;width:1388px;height:1px;background:#000;"></div>
<div style="left:497px;top:359px;width:1388px;height:1px;background:#000;"></div>
<div style="left:497px;top:379px;width:1388px;height:1px;background:#000;"></div>
<div style="left:497px;top:399px;width:1388px;height:1px;background:#000;"></div>
<div style="left:497px;top:419px;width:1388px;height:1px;background:#000;"></div>
<div style="left:497px;top:439px;width:1388px;height:1px;background:#000;"></div>
<div style="left:497px;top:459px;width:1388px;height:1px;background:#000;"></div>
<div style="left:497px;top:479px;width:1388px;height:1px;background:#000;"></div>
<div style="left:497px;top:499px;width:1388px;height:1px;background:#000;"></div>
<div style="left:497px;top:519px;width:1388px;height:1px;background:#000;"></div>
<div style="left:497px;top:539px;width:1388px;height:1px;background:#000;"></div>
<div style="left:497px;top:559px;width:1388px;height:1px;background:#000;"></div>
<div style="left:497px;top:579px;width:1388px;height:1px;background:#000;"></div>
<div style="left:497px;top:599px;width:1388px;height:1px;background:#000;"></div>
<div style="left:497px;top:619px;width:1388px;height:1px;background:#000;"></div>
<div style="left:497px;top:639px;width:1388px;height:1px;background:#000;"></div>
<div style="left:497px;top:659px;width:1388px;height:1px;background:#000;"></div>
<div style="left:497px;top:679px;width:1388px;height:1px;background:#000;"></div>
<div style="left:497px;top:699px;width:1388px;height:1px;background:#000;"></div>
<div style="left:497px;top:719px;width:1388px;height:1px;background:#000;"></div>
<div style="left:497px;top:179px;width:1px;height:581px;background:#000;"></div>
<div style="left:679px;top:179px;width:1px;height:581px;background:#000;"></div>
<div style="left:861px;top:179px;width:1px;height:581px;background:#000;"></div>
<div style="left:1043px;top:179px;width:1px;height:581px;background:#000;"></div>
<div style="left:1225px;top:179px;width:1px;height:581px;background:#000;"></div>
<div style="left:1407px;top:179px;width:1px;height:581px;background:#000;"></div>
<div style="left:1591px;top:179px;width:1px;height:581px;background:#000;"></div>
<div style="left:1773px;top:179px;width:1px;height:581px;background:#000;"></div>
<div style="left:1955px;top:179px;width:1px;height:581px;background:#000;"></div>
<div style="left:0px;top:719px;width:1885px;height:1px;background:#000;"></div>
<div style="left:295px;top:739px;width:1590px;height:1px;background:#000;"></div>
<div style="left:295px;top:759px;width:1590px;height:1px;background:#000;"></div>
<div style="left:497px;top:719px;width:1px;height:41px;background:#000;"></div>
<div style="left:497px;top:779px;width:1388px;height:1px;background:#000;"></div>
<div style="left:497px;top:779px;width:1px;height:21px;background:#000;"></div>
<div style="left:679px;top:779px;width:1px;height:21px;background:#000;"></div>
<div style="left:861px;top:779px;width:1px;height:21px;background:#000;"></div>
<div style="left:1043px;top:779px;width:1px;height:21px;background:#000;"></div>
<div style="left:1225px;top:779px;width:1px;height:21px;background:#000;"></div>
<div style="left:1407px;top:779px;width:1px;height:21px;background:#000;"></div>
<div style="left:1591px;top:779px;width:1px;height:21px;background:#000;"></div>
<div style="left:1773px;top:779px;width:1px;height:21px;background:#000;"></div>
<div style="left:1955px;top:779px;width:1px;height:21px;background:#000;"></div>
<div style="left:295px;top:799px;width:1590px;height:1px;background:#000;"></div>
<div style="left:295px;top:824px;width:1590px;height:1px;background:#000;"></div>
<div style="left:497px;top:799px;width:1px;height:111px;background:#000;"></div>
<div style="left:497px;top:844px;width:1388px;height:1px;background:#000;"></div>
<div style="left:497px;top:864px;width:1388px;height:1px;background:#000;"></div>
<div style="left:497px;top:884px;width:1388px;height:1px;background:#000;"></div>
<div style="left:497px;top:904px;width:1388px;height:1px;background:#000;"></div>
<div style="left:497px;top:824px;width:1px;height:86px;background:#000;"></div>
<div style="left:679px;top:824px;width:1px;height:86px;background:#000;"></div>
<div style="left:861px;top:824px;width:1px;height:86px;background:#000;"></div>
<div style="left:1043px;top:824px;width:1px;height:86px;background:#000;"></div>
<div style="left:1225px;top:824px;width:1px;height:86px;background:#000;"></div>
<div style="left:1407px;top:824px;width:1px;height:86px;background:#000;"></div>
<div style="left:1591px;top:824px;width:1px;height:86px;background:#000;"></div>
<div style="left:1773px;top:824px;width:1px;height:86px;background:#000;"></div>
<div style="left:1955px;top:824px;width:1px;height:86px;background:#000;"></div>
<svg style="left:469px;top:160px" width="6" height="6" viewBox="0 0 6 6"><path d="M0 0H6V6z" fill="#F00"/></svg>
<svg style="left:673px;top:140px" width="6" height="6" viewBox="0 0 6 6"><path d="M0 0H6V6z" fill="#F00"/></svg>
<svg style="left:1193px;top:800px" width="6" height="6" viewBox="0 0 6 6"><path d="M0 0H6V6z" fill="#F00"/></svg>
<div style="left:504.19px;top:53.00px;width:80px;height:17px;line-height:17px;font-size:13.8px;font-weight:700;color:#000;white-space:nowrap;transform-origin:0 0;transform:rotate(-90deg);">02-Oct</div>
<div style="left:530.19px;top:53.00px;width:80px;height:17px;line-height:17px;font-size:13.8px;font-weight:700;color:#000;white-space:nowrap;transform-origin:0 0;transform:rotate(-90deg);">03-Oct</div>
<div style="left:556.19px;top:53.00px;width:80px;height:17px;line-height:17px;font-size:13.8px;font-weight:700;color:#000;white-space:nowrap;transform-origin:0 0;transform:rotate(-90deg);">04-Oct</div>
<div style="left:582.19px;top:53.00px;width:80px;height:17px;line-height:17px;font-size:13.8px;font-weight:700;color:#000;white-space:nowrap;transform-origin:0 0;transform:rotate(-90deg);">21-Sep</div>
<div style="left:608.19px;top:53.00px;width:80px;height:17px;line-height:17px;font-size:13.8px;font-weight:700;color:#000;white-space:nowrap;transform-origin:0 0;transform:rotate(-90deg);">06-Oct</div>
<div style="left:634.19px;top:53.00px;width:80px;height:17px;line-height:17px;font-size:13.8px;font-weight:700;color:#000;white-space:nowrap;transform-origin:0 0;transform:rotate(-90deg);">07-Oct</div>
<div style="left:660.19px;top:53.00px;width:80px;height:17px;line-height:17px;font-size:13.8px;font-weight:700;color:#000;white-space:nowrap;transform-origin:0 0;transform:rotate(-90deg);">08-Oct</div>
<div style="left:686.19px;top:53.00px;width:80px;height:17px;line-height:17px;font-size:13.8px;font-weight:700;color:#000;white-space:nowrap;transform-origin:0 0;transform:rotate(-90deg);">09-Oct</div>
<div style="left:712.19px;top:53.00px;width:80px;height:17px;line-height:17px;font-size:13.8px;font-weight:700;color:#000;white-space:nowrap;transform-origin:0 0;transform:rotate(-90deg);">10-Oct</div>
<div style="left:738.19px;top:53.00px;width:80px;height:17px;line-height:17px;font-size:13.8px;font-weight:700;color:#000;white-space:nowrap;transform-origin:0 0;transform:rotate(-90deg);">11-Oct</div>
<div style="left:764.19px;top:53.00px;width:80px;height:17px;line-height:17px;font-size:13.8px;font-weight:700;color:#000;white-space:nowrap;transform-origin:0 0;transform:rotate(-90deg);">12-Oct</div>
<div style="left:790.19px;top:53.00px;width:80px;height:17px;line-height:17px;font-size:13.8px;font-weight:700;color:#000;white-space:nowrap;transform-origin:0 0;transform:rotate(-90deg);">13-Oct</div>
<div style="left:816.19px;top:53.00px;width:80px;height:17px;line-height:17px;font-size:13.8px;font-weight:700;color:#000;white-space:nowrap;transform-origin:0 0;transform:rotate(-90deg);">14-Oct</div>
<div style="left:842.19px;top:53.00px;width:80px;height:17px;line-height:17px;font-size:13.8px;font-weight:700;color:#000;white-space:nowrap;transform-origin:0 0;transform:rotate(-90deg);">15-Oct</div>
<div style="left:868.19px;top:53.00px;width:80px;height:17px;line-height:17px;font-size:13.8px;font-weight:700;color:#000;white-space:nowrap;transform-origin:0 0;transform:rotate(-90deg);">16-Oct</div>
<div style="left:894.19px;top:53.00px;width:80px;height:17px;line-height:17px;font-size:13.8px;font-weight:700;color:#000;white-space:nowrap;transform-origin:0 0;transform:rotate(-90deg);">17-Oct</div>
<div style="left:920.19px;top:53.00px;width:80px;height:17px;line-height:17px;font-size:13.8px;font-weight:700;color:#000;white-space:nowrap;transform-origin:0 0;transform:rotate(-90deg);">18-Oct</div>
<div style="left:946.19px;top:53.00px;width:80px;height:17px;line-height:17px;font-size:13.8px;font-weight:700;color:#000;white-space:nowrap;transform-origin:0 0;transform:rotate(-90deg);">19-Oct</div>
<div style="left:972.19px;top:53.00px;width:80px;height:17px;line-height:17px;font-size:13.8px;font-weight:700;color:#000;white-space:nowrap;transform-origin:0 0;transform:rotate(-90deg);">20-Oct</div>
<div style="left:998.19px;top:53.00px;width:80px;height:17px;line-height:17px;font-size:13.8px;font-weight:700;color:#000;white-space:nowrap;transform-origin:0 0;transform:rotate(-90deg);">21-Oct</div>
<div style="left:1024.19px;top:53.00px;width:80px;height:17px;line-height:17px;font-size:13.8px;font-weight:700;color:#000;white-space:nowrap;transform-origin:0 0;transform:rotate(-90deg);">22-Oct</div>
<div style="left:1050.19px;top:53.00px;width:80px;height:17px;line-height:17px;font-size:13.8px;font-weight:700;color:#000;white-space:nowrap;transform-origin:0 0;transform:rotate(-90deg);">23-Oct</div>
<div style="left:1076.19px;top:53.00px;width:80px;height:17px;line-height:17px;font-size:13.8px;font-weight:700;color:#000;white-space:nowrap;transform-origin:0 0;transform:rotate(-90deg);">24-Oct</div>
<div style="left:1102.19px;top:53.00px;width:80px;height:17px;line-height:17px;font-size:13.8px;font-weight:700;color:#000;white-space:nowrap;transform-origin:0 0;transform:rotate(-90deg);">25-Oct</div>
<div style="left:1128.19px;top:53.00px;width:80px;height:17px;line-height:17px;font-size:13.8px;font-weight:700;color:#000;white-space:nowrap;transform-origin:0 0;transform:rotate(-90deg);">26-Oct</div>
<div style="left:1154.19px;top:53.00px;width:80px;height:17px;line-height:17px;font-size:13.8px;font-weight:700;color:#000;white-space:nowrap;transform-origin:0 0;transform:rotate(-90deg);">27-Oct</div>
<div style="left:1180.19px;top:53.00px;width:80px;height:17px;line-height:17px;font-size:13.8px;font-weight:700;color:#000;white-space:nowrap;transform-origin:0 0;transform:rotate(-90deg);">28-Oct</div>
<div style="left:1206.19px;top:53.00px;width:80px;height:17px;line-height:17px;font-size:13.8px;font-weight:700;color:#000;white-space:nowrap;transform-origin:0 0;transform:rotate(-90deg);">29-Oct</div>
<div style="left:1232.19px;top:53.00px;width:80px;height:17px;line-height:17px;font-size:13.8px;font-weight:700;color:#000;white-space:nowrap;transform-origin:0 0;transform:rotate(-90deg);">30-Oct</div>
<div style="left:1258.19px;top:53.00px;width:80px;height:17px;line-height:17px;font-size:13.8px;font-weight:700;color:#000;white-space:nowrap;transform-origin:0 0;transform:rotate(-90deg);">31-Oct</div>
<div style="left:1284.19px;top:53.00px;width:80px;height:17px;line-height:17px;font-size:13.8px;font-weight:700;color:#000;white-space:nowrap;transform-origin:0 0;transform:rotate(-90deg);">01-Nov</div>
<div style="left:1310.19px;top:53.00px;width:80px;height:17px;line-height:17px;font-size:13.8px;font-weight:700;color:#000;white-space:nowrap;transform-origin:0 0;transform:rotate(-90deg);">02-Nov</div>
<div style="left:1336.19px;top:53.00px;width:80px;height:17px;line-height:17px;font-size:13.8px;font-weight:700;color:#000;white-space:nowrap;transform-origin:0 0;transform:rotate(-90deg);">03-Nov</div>
<div style="left:1362.19px;top:53.00px;width:80px;height:17px;line-height:17px;font-size:13.8px;font-weight:700;color:#000;white-space:nowrap;transform-origin:0 0;transform:rotate(-90deg);">04-Nov</div>
<div style="left:1388.19px;top:53.00px;width:80px;height:17px;line-height:17px;font-size:13.8px;font-weight:700;color:#000;white-space:nowrap;transform-origin:0 0;transform:rotate(-90deg);">05-Nov</div>
<div style="left:1415.19px;top:53.00px;width:80px;height:17px;line-height:17px;font-size:13.8px;font-weight:700;color:#000;white-space:nowrap;transform-origin:0 0;transform:rotate(-90deg);">06-Nov</div>
<div style="left:1442.19px;top:53.00px;width:80px;height:17px;line-height:17px;font-size:13.8px;font-weight:700;color:#000;white-space:nowrap;transform-origin:0 0;transform:rotate(-90deg);">07-Nov</div>
<div style="left:1468.19px;top:53.00px;width:80px;height:17px;line-height:17px;font-size:13.8px;font-weight:700;color:#000;white-space:nowrap;transform-origin:0 0;transform:rotate(-90deg);">08-Nov</div>
<div style="left:1494.19px;top:53.00px;width:80px;height:17px;line-height:17px;font-size:13.8px;font-weight:700;color:#000;white-space:nowrap;transform-origin:0 0;transform:rotate(-90deg);">09-Nov</div>
<div style="left:1520.19px;top:53.00px;width:80px;height:17px;line-height:17px;font-size:13.8px;font-weight:700;color:#000;white-space:nowrap;transform-origin:0 0;transform:rotate(-90deg);">10-Nov</div>
<div style="left:1546.19px;top:53.00px;width:80px;height:17px;line-height:17px;font-size:13.8px;font-weight:700;color:#000;white-space:nowrap;transform-origin:0 0;transform:rotate(-90deg);">11-Nov</div>
<div style="left:1572.19px;top:53.00px;width:80px;height:17px;line-height:17px;font-size:13.8px;font-weight:700;color:#000;white-space:nowrap;transform-origin:0 0;transform:rotate(-90deg);">12-Nov</div>
<div style="left:1598.19px;top:53.00px;width:80px;height:17px;line-height:17px;font-size:13.8px;font-weight:700;color:#000;white-space:nowrap;transform-origin:0 0;transform:rotate(-90deg);">13-Nov</div>
<div style="left:1624.19px;top:53.00px;width:80px;height:17px;line-height:17px;font-size:13.8px;font-weight:700;color:#000;white-space:nowrap;transform-origin:0 0;transform:rotate(-90deg);">14-Nov</div>
<div style="left:1650.19px;top:53.00px;width:80px;height:17px;line-height:17px;font-size:13.8px;font-weight:700;color:#000;white-space:nowrap;transform-origin:0 0;transform:rotate(-90deg);">15-Nov</div>
<div style="left:1676.19px;top:53.00px;width:80px;height:17px;line-height:17px;font-size:13.8px;font-weight:700;color:#000;white-space:nowrap;transform-origin:0 0;transform:rotate(-90deg);">16-Nov</div>
<div style="left:1702.19px;top:53.00px;width:80px;height:17px;line-height:17px;font-size:13.8px;font-weight:700;color:#000;white-space:nowrap;transform-origin:0 0;transform:rotate(-90deg);">17-Nov</div>
<div style="left:1728.19px;top:53.00px;width:80px;height:17px;line-height:17px;font-size:13.8px;font-weight:700;color:#000;white-space:nowrap;transform-origin:0 0;transform:rotate(-90deg);">18-Nov</div>
<div style="left:1754.19px;top:53.00px;width:80px;height:17px;line-height:17px;font-size:13.8px;font-weight:700;color:#000;white-space:nowrap;transform-origin:0 0;transform:rotate(-90deg);">19-Nov</div>
<div style="left:1780.19px;top:53.00px;width:80px;height:17px;line-height:17px;font-size:13.8px;font-weight:700;color:#000;white-space:nowrap;transform-origin:0 0;transform:rotate(-90deg);">20-Nov</div>
<div style="left:1806.19px;top:53.00px;width:80px;height:17px;line-height:17px;font-size:13.8px;font-weight:700;color:#000;white-space:nowrap;transform-origin:0 0;transform:rotate(-90deg);">21-Nov</div>
<div style="left:1832.19px;top:53.00px;width:80px;height:17px;line-height:17px;font-size:13.8px;font-weight:700;color:#000;white-space:nowrap;transform-origin:0 0;transform:rotate(-90deg);">22-Nov</div>
<div style="left:1858.19px;top:53.00px;width:80px;height:17px;line-height:17px;font-size:13.8px;font-weight:700;color:#000;white-space:nowrap;transform-origin:0 0;transform:rotate(-90deg);">23-Nov</div>
<div style="left:479.15px;top:46.00px;width:80px;height:14px;line-height:14px;font-size:10.8px;font-weight:700;color:#7030A0;white-space:nowrap;transform-origin:0 0;transform:rotate(-90deg);">day</div>
<div style="left:498px;top:57.67px;height:16px;line-height:16px;font-size:12.5px;font-weight:700;color:#000;white-space:nowrap;font-family:'Liberation Sans', sans-serif;width:181px;text-align:center;transform:scaleX(1.12);transform-origin:50% 0;">Week 1</div>
<div style="left:498px;top:142.67px;height:16px;line-height:16px;font-size:12.5px;font-weight:700;color:#000;white-space:nowrap;font-family:'Liberation Sans', sans-serif;width:181px;text-align:center;transform:scaleX(1.12);transform-origin:50% 0;">Week 1</div>
<div style="left:498px;top:782.67px;height:16px;line-height:16px;font-size:12.5px;font-weight:700;color:#000;white-space:nowrap;font-family:'Liberation Sans', sans-serif;width:181px;text-align:center;transform:scaleX(1.12);transform-origin:50% 0;">Week 1</div>
<div style="left:680px;top:57.67px;height:16px;line-height:16px;font-size:12.5px;font-weight:700;color:#000;white-space:nowrap;font-family:'Liberation Sans', sans-serif;width:181px;text-align:center;transform:scaleX(1.12);transform-origin:50% 0;">Week 2</div>
<div style="left:680px;top:142.67px;height:16px;line-height:16px;font-size:12.5px;font-weight:700;color:#000;white-space:nowrap;font-family:'Liberation Sans', sans-serif;width:181px;text-align:center;transform:scaleX(1.12);transform-origin:50% 0;">Week 2</div>
<div style="left:680px;top:782.67px;height:16px;line-height:16px;font-size:12.5px;font-weight:700;color:#000;white-space:nowrap;font-family:'Liberation Sans', sans-serif;width:181px;text-align:center;transform:scaleX(1.12);transform-origin:50% 0;">Week 2</div>
<div style="left:862px;top:57.67px;height:16px;line-height:16px;font-size:12.5px;font-weight:700;color:#000;white-space:nowrap;font-family:'Liberation Sans', sans-serif;width:181px;text-align:center;transform:scaleX(1.12);transform-origin:50% 0;">Week 3</div>
<div style="left:862px;top:142.67px;height:16px;line-height:16px;font-size:12.5px;font-weight:700;color:#000;white-space:nowrap;font-family:'Liberation Sans', sans-serif;width:181px;text-align:center;transform:scaleX(1.12);transform-origin:50% 0;">Week 3</div>
<div style="left:862px;top:782.67px;height:16px;line-height:16px;font-size:12.5px;font-weight:700;color:#000;white-space:nowrap;font-family:'Liberation Sans', sans-serif;width:181px;text-align:center;transform:scaleX(1.12);transform-origin:50% 0;">Week 3</div>
<div style="left:1044px;top:57.67px;height:16px;line-height:16px;font-size:12.5px;font-weight:700;color:#000;white-space:nowrap;font-family:'Liberation Sans', sans-serif;width:181px;text-align:center;transform:scaleX(1.12);transform-origin:50% 0;">Week 4</div>
<div style="left:1044px;top:142.67px;height:16px;line-height:16px;font-size:12.5px;font-weight:700;color:#000;white-space:nowrap;font-family:'Liberation Sans', sans-serif;width:181px;text-align:center;transform:scaleX(1.12);transform-origin:50% 0;">Week 4</div>
<div style="left:1044px;top:782.67px;height:16px;line-height:16px;font-size:12.5px;font-weight:700;color:#000;white-space:nowrap;font-family:'Liberation Sans', sans-serif;width:181px;text-align:center;transform:scaleX(1.12);transform-origin:50% 0;">Week 4</div>
<div style="left:1226px;top:57.67px;height:16px;line-height:16px;font-size:12.5px;font-weight:700;color:#000;white-space:nowrap;font-family:'Liberation Sans', sans-serif;width:181px;text-align:center;transform:scaleX(1.12);transform-origin:50% 0;">Week 5</div>
<div style="left:1226px;top:142.67px;height:16px;line-height:16px;font-size:12.5px;font-weight:700;color:#000;white-space:nowrap;font-family:'Liberation Sans', sans-serif;width:181px;text-align:center;transform:scaleX(1.12);transform-origin:50% 0;">Week 5</div>
<div style="left:1226px;top:782.67px;height:16px;line-height:16px;font-size:12.5px;font-weight:700;color:#000;white-space:nowrap;font-family:'Liberation Sans', sans-serif;width:181px;text-align:center;transform:scaleX(1.12);transform-origin:50% 0;">Week 5</div>
<div style="left:1408px;top:57.67px;height:16px;line-height:16px;font-size:12.5px;font-weight:700;color:#000;white-space:nowrap;font-family:'Liberation Sans', sans-serif;width:183px;text-align:center;transform:scaleX(1.12);transform-origin:50% 0;">Week 6</div>
<div style="left:1408px;top:142.67px;height:16px;line-height:16px;font-size:12.5px;font-weight:700;color:#000;white-space:nowrap;font-family:'Liberation Sans', sans-serif;width:183px;text-align:center;transform:scaleX(1.12);transform-origin:50% 0;">Week 6</div>
<div style="left:1408px;top:782.67px;height:16px;line-height:16px;font-size:12.5px;font-weight:700;color:#000;white-space:nowrap;font-family:'Liberation Sans', sans-serif;width:183px;text-align:center;transform:scaleX(1.12);transform-origin:50% 0;">Week 6</div>
<div style="left:1592px;top:57.67px;height:16px;line-height:16px;font-size:12.5px;font-weight:700;color:#000;white-space:nowrap;font-family:'Liberation Sans', sans-serif;width:181px;text-align:center;transform:scaleX(1.12);transform-origin:50% 0;">Week 7</div>
<div style="left:1592px;top:142.67px;height:16px;line-height:16px;font-size:12.5px;font-weight:700;color:#000;white-space:nowrap;font-family:'Liberation Sans', sans-serif;width:181px;text-align:center;transform:scaleX(1.12);transform-origin:50% 0;">Week 7</div>
<div style="left:1592px;top:782.67px;height:16px;line-height:16px;font-size:12.5px;font-weight:700;color:#000;white-space:nowrap;font-family:'Liberation Sans', sans-serif;width:181px;text-align:center;transform:scaleX(1.12);transform-origin:50% 0;">Week 7</div>
<div style="left:1774px;top:57.67px;height:16px;line-height:16px;font-size:12.5px;font-weight:700;color:#000;white-space:nowrap;font-family:'Liberation Sans', sans-serif;width:181px;text-align:center;transform:scaleX(1.12);transform-origin:50% 0;">Week 8</div>
<div style="left:1774px;top:142.67px;height:16px;line-height:16px;font-size:12.5px;font-weight:700;color:#000;white-space:nowrap;font-family:'Liberation Sans', sans-serif;width:181px;text-align:center;transform:scaleX(1.12);transform-origin:50% 0;">Week 8</div>
<div style="left:1774px;top:782.67px;height:16px;line-height:16px;font-size:12.5px;font-weight:700;color:#000;white-space:nowrap;font-family:'Liberation Sans', sans-serif;width:181px;text-align:center;transform:scaleX(1.12);transform-origin:50% 0;">Week 8</div>
<div style="left:-221px;top:122.67px;height:16px;line-height:16px;font-size:12.5px;font-weight:400;color:#000;white-space:nowrap;font-family:'Liberation Sans', sans-serif;width:498px;text-align:right;transform:scaleX(1.14);transform-origin:100% 0;-webkit-text-stroke:0.12px #000;">effort (right) as appropriate to calculate cost.</div>
<div style="left:501px;top:119.46px;height:20px;line-height:20px;font-size:16px;font-weight:700;color:#fff;white-space:nowrap;font-family:'Liberation Sans', sans-serif;">1.0 PHASE 1</div>
<div style="left:1229px;top:119.46px;height:20px;line-height:20px;font-size:16px;font-weight:700;color:#fff;white-space:nowrap;font-family:'Liberation Sans', sans-serif;">2.0 PHASE 2</div>
<div style="left:501px;top:804.46px;height:20px;line-height:20px;font-size:16px;font-weight:700;color:#fff;white-space:nowrap;font-family:'Liberation Sans', sans-serif;">1.0 PHASE 1</div>
<div style="left:1229px;top:804.46px;height:20px;line-height:20px;font-size:16px;font-weight:700;color:#fff;white-space:nowrap;font-family:'Liberation Sans', sans-serif;">1.0 PHASE 2</div>
<div style="left:298px;top:162.67px;height:16px;line-height:16px;font-size:12.5px;font-weight:700;color:#000;white-space:nowrap;font-family:'Liberation Sans', sans-serif;">Role:</div>
<div style="left:298px;top:807.67px;height:16px;line-height:16px;font-size:12.5px;font-weight:700;color:#000;white-space:nowrap;font-family:'Liberation Sans', sans-serif;">Role:</div>
<div style="left:498px;top:162.67px;height:16px;line-height:16px;font-size:12.5px;font-weight:700;color:#000;white-space:nowrap;font-family:'Liberation Sans', sans-serif;width:25px;text-align:center;transform:scaleX(1.25);transform-origin:50% 0;">M</div>
<div style="left:524px;top:162.67px;height:16px;line-height:16px;font-size:12.5px;font-weight:700;color:#000;white-space:nowrap;font-family:'Liberation Sans', sans-serif;width:25px;text-align:center;transform:scaleX(1.0);transform-origin:50% 0;">T</div>
<div style="left:550px;top:162.67px;height:16px;line-height:16px;font-size:12.5px;font-weight:700;color:#000;white-space:nowrap;font-family:'Liberation Sans', sans-serif;width:25px;text-align:center;transform:scaleX(1.25);transform-origin:50% 0;">W</div>
<div style="left:576px;top:162.67px;height:16px;line-height:16px;font-size:12.5px;font-weight:700;color:#000;white-space:nowrap;font-family:'Liberation Sans', sans-serif;width:25px;text-align:center;transform:scaleX(1.0);transform-origin:50% 0;">T</div>
<div style="left:602px;top:162.67px;height:16px;line-height:16px;font-size:12.5px;font-weight:700;color:#000;white-space:nowrap;font-family:'Liberation Sans', sans-serif;width:25px;text-align:center;transform:scaleX(1.0);transform-origin:50% 0;">F</div>
<div style="left:628px;top:162.67px;height:16px;line-height:16px;font-size:12.5px;font-weight:700;color:#000;white-space:nowrap;font-family:'Liberation Sans', sans-serif;width:25px;text-align:center;transform:scaleX(1.0);transform-origin:50% 0;">S</div>
<div style="left:654px;top:162.67px;height:16px;line-height:16px;font-size:12.5px;font-weight:700;color:#000;white-space:nowrap;font-family:'Liberation Sans', sans-serif;width:25px;text-align:center;transform:scaleX(1.0);transform-origin:50% 0;">S</div>
<div style="left:680px;top:162.67px;height:16px;line-height:16px;font-size:12.5px;font-weight:700;color:#000;white-space:nowrap;font-family:'Liberation Sans', sans-serif;width:25px;text-align:center;transform:scaleX(1.25);transform-origin:50% 0;">M</div>
<div style="left:706px;top:162.67px;height:16px;line-height:16px;font-size:12.5px;font-weight:700;color:#000;white-space:nowrap;font-family:'Liberation Sans', sans-serif;width:25px;text-align:center;transform:scaleX(1.0);transform-origin:50% 0;">T</div>
<div style="left:732px;top:162.67px;height:16px;line-height:16px;font-size:12.5px;font-weight:700;color:#000;white-space:nowrap;font-family:'Liberation Sans', sans-serif;width:25px;text-align:center;transform:scaleX(1.25);transform-origin:50% 0;">W</div>
<div style="left:758px;top:162.67px;height:16px;line-height:16px;font-size:12.5px;font-weight:700;color:#000;white-space:nowrap;font-family:'Liberation Sans', sans-serif;width:25px;text-align:center;transform:scaleX(1.0);transform-origin:50% 0;">T</div>
<div style="left:784px;top:162.67px;height:16px;line-height:16px;font-size:12.5px;font-weight:700;color:#000;white-space:nowrap;font-family:'Liberation Sans', sans-serif;width:25px;text-align:center;transform:scaleX(1.0);transform-origin:50% 0;">F</div>
<div style="left:810px;top:162.67px;height:16px;line-height:16px;font-size:12.5px;font-weight:700;color:#000;white-space:nowrap;font-family:'Liberation Sans', sans-serif;width:25px;text-align:center;transform:scaleX(1.0);transform-origin:50% 0;">S</div>
<div style="left:836px;top:162.67px;height:16px;line-height:16px;font-size:12.5px;font-weight:700;color:#000;white-space:nowrap;font-family:'Liberation Sans', sans-serif;width:25px;text-align:center;transform:scaleX(1.0);transform-origin:50% 0;">S</div>
<div style="left:862px;top:162.67px;height:16px;line-height:16px;font-size:12.5px;font-weight:700;color:#000;white-space:nowrap;font-family:'Liberation Sans', sans-serif;width:25px;text-align:center;transform:scaleX(1.25);transform-origin:50% 0;">M</div>
<div style="left:888px;top:162.67px;height:16px;line-height:16px;font-size:12.5px;font-weight:700;color:#000;white-space:nowrap;font-family:'Liberation Sans', sans-serif;width:25px;text-align:center;transform:scaleX(1.0);transform-origin:50% 0;">T</div>
<div style="left:914px;top:162.67px;height:16px;line-height:16px;font-size:12.5px;font-weight:700;color:#000;white-space:nowrap;font-family:'Liberation Sans', sans-serif;width:25px;text-align:center;transform:scaleX(1.25);transform-origin:50% 0;">W</div>
<div style="left:940px;top:162.67px;height:16px;line-height:16px;font-size:12.5px;font-weight:700;color:#000;white-space:nowrap;font-family:'Liberation Sans', sans-serif;width:25px;text-align:center;transform:scaleX(1.0);transform-origin:50% 0;">T</div>
<div style="left:966px;top:162.67px;height:16px;line-height:16px;font-size:12.5px;font-weight:700;color:#000;white-space:nowrap;font-family:'Liberation Sans', sans-serif;width:25px;text-align:center;transform:scaleX(1.0);transform-origin:50% 0;">F</div>
<div style="left:992px;top:162.67px;height:16px;line-height:16px;font-size:12.5px;font-weight:700;color:#000;white-space:nowrap;font-family:'Liberation Sans', sans-serif;width:25px;text-align:center;transform:scaleX(1.0);transform-origin:50% 0;">S</div>
<div style="left:1018px;top:162.67px;height:16px;line-height:16px;font-size:12.5px;font-weight:700;color:#000;white-space:nowrap;font-family:'Liberation Sans', sans-serif;width:25px;text-align:center;transform:scaleX(1.0);transform-origin:50% 0;">S</div>
<div style="left:1044px;top:162.67px;height:16px;line-height:16px;font-size:12.5px;font-weight:700;color:#000;white-space:nowrap;font-family:'Liberation Sans', sans-serif;width:25px;text-align:center;transform:scaleX(1.25);transform-origin:50% 0;">M</div>
<div style="left:1070px;top:162.67px;height:16px;line-height:16px;font-size:12.5px;font-weight:700;color:#000;white-space:nowrap;font-family:'Liberation Sans', sans-serif;width:25px;text-align:center;transform:scaleX(1.0);transform-origin:50% 0;">T</div>
<div style="left:1096px;top:162.67px;height:16px;line-height:16px;font-size:12.5px;font-weight:700;color:#000;white-space:nowrap;font-family:'Liberation Sans', sans-serif;width:25px;text-align:center;transform:scaleX(1.25);transform-origin:50% 0;">W</div>
<div style="left:1122px;top:162.67px;height:16px;line-height:16px;font-size:12.5px;font-weight:700;color:#000;white-space:nowrap;font-family:'Liberation Sans', sans-serif;width:25px;text-align:center;transform:scaleX(1.0);transform-origin:50% 0;">T</div>
<div style="left:1148px;top:162.67px;height:16px;line-height:16px;font-size:12.5px;font-weight:700;color:#000;white-space:nowrap;font-family:'Liberation Sans', sans-serif;width:25px;text-align:center;transform:scaleX(1.0);transform-origin:50% 0;">F</div>
<div style="left:1174px;top:162.67px;height:16px;line-height:16px;font-size:12.5px;font-weight:700;color:#000;white-space:nowrap;font-family:'Liberation Sans', sans-serif;width:25px;text-align:center;transform:scaleX(1.0);transform-origin:50% 0;">S</div>
<div style="left:1200px;top:162.67px;height:16px;line-height:16px;font-size:12.5px;font-weight:700;color:#000;white-space:nowrap;font-family:'Liberation Sans', sans-serif;width:25px;text-align:center;transform:scaleX(1.0);transform-origin:50% 0;">S</div>
<div style="left:1226px;top:162.67px;height:16px;line-height:16px;font-size:12.5px;font-weight:700;color:#000;white-space:nowrap;font-family:'Liberation Sans', sans-serif;width:25px;text-align:center;transform:scaleX(1.25);transform-origin:50% 0;">M</div>
<div style="left:1252px;top:162.67px;height:16px;line-height:16px;font-size:12.5px;font-weight:700;color:#000;white-space:nowrap;font-family:'Liberation Sans', sans-serif;width:25px;text-align:center;transform:scaleX(1.0);transform-origin:50% 0;">T</div>
<div style="left:1278px;top:162.67px;height:16px;line-height:16px;font-size:12.5px;font-weight:700;color:#000;white-space:nowrap;font-family:'Liberation Sans', sans-serif;width:25px;text-align:center;transform:scaleX(1.25);transform-origin:50% 0;">W</div>
<div style="left:1304px;top:162.67px;height:16px;line-height:16px;font-size:12.5px;font-weight:700;color:#000;white-space:nowrap;font-family:'Liberation Sans', sans-serif;width:25px;text-align:center;transform:scaleX(1.0);transform-origin:50% 0;">T</div>
<div style="left:1330px;top:162.67px;height:16px;line-height:16px;font-size:12.5px;font-weight:700;color:#000;white-space:nowrap;font-family:'Liberation Sans', sans-serif;width:25px;text-align:center;transform:scaleX(1.0);transform-origin:50% 0;">F</div>
<div style="left:1356px;top:162.67px;height:16px;line-height:16px;font-size:12.5px;font-weight:700;color:#000;white-space:nowrap;font-family:'Liberation Sans', sans-serif;width:25px;text-align:center;transform:scaleX(1.0);transform-origin:50% 0;">S</div>
<div style="left:1382px;top:162.67px;height:16px;line-height:16px;font-size:12.5px;font-weight:700;color:#000;white-space:nowrap;font-family:'Liberation Sans', sans-serif;width:25px;text-align:center;transform:scaleX(1.0);transform-origin:50% 0;">S</div>
<div style="left:1408px;top:162.67px;height:16px;line-height:16px;font-size:12.5px;font-weight:700;color:#000;white-space:nowrap;font-family:'Liberation Sans', sans-serif;width:27px;text-align:center;transform:scaleX(1.25);transform-origin:50% 0;">M</div>
<div style="left:1436px;top:162.67px;height:16px;line-height:16px;font-size:12.5px;font-weight:700;color:#000;white-space:nowrap;font-family:'Liberation Sans', sans-serif;width:25px;text-align:center;transform:scaleX(1.0);transform-origin:50% 0;">T</div>
<div style="left:1462px;top:162.67px;height:16px;line-height:16px;font-size:12.5px;font-weight:700;color:#000;white-space:nowrap;font-family:'Liberation Sans', sans-serif;width:25px;text-align:center;transform:scaleX(1.25);transform-origin:50% 0;">W</div>
<div style="left:1488px;top:162.67px;height:16px;line-height:16px;font-size:12.5px;font-weight:700;color:#000;white-space:nowrap;font-family:'Liberation Sans', sans-serif;width:25px;text-align:center;transform:scaleX(1.0);transform-origin:50% 0;">T</div>
<div style="left:1514px;top:162.67px;height:16px;line-height:16px;font-size:12.5px;font-weight:700;color:#000;white-space:nowrap;font-family:'Liberation Sans', sans-serif;width:25px;text-align:center;transform:scaleX(1.0);transform-origin:50% 0;">F</div>
<div style="left:1540px;top:162.67px;height:16px;line-height:16px;font-size:12.5px;font-weight:700;color:#000;white-space:nowrap;font-family:'Liberation Sans', sans-serif;width:25px;text-align:center;transform:scaleX(1.0);transform-origin:50% 0;">S</div>
<div style="left:1566px;top:162.67px;height:16px;line-height:16px;font-size:12.5px;font-weight:700;color:#000;white-space:nowrap;font-family:'Liberation Sans', sans-serif;width:25px;text-align:center;transform:scaleX(1.0);transform-origin:50% 0;">S</div>
<div style="left:1592px;top:162.67px;height:16px;line-height:16px;font-size:12.5px;font-weight:700;color:#000;white-space:nowrap;font-family:'Liberation Sans', sans-serif;width:25px;text-align:center;transform:scaleX(1.25);transform-origin:50% 0;">M</div>
<div style="left:1618px;top:162.67px;height:16px;line-height:16px;font-size:12.5px;font-weight:700;color:#000;white-space:nowrap;font-family:'Liberation Sans', sans-serif;width:25px;text-align:center;transform:scaleX(1.0);transform-origin:50% 0;">T</div>
<div style="left:1644px;top:162.67px;height:16px;line-height:16px;font-size:12.5px;font-weight:700;color:#000;white-space:nowrap;font-family:'Liberation Sans', sans-serif;width:25px;text-align:center;transform:scaleX(1.25);transform-origin:50% 0;">W</div>
<div style="left:1670px;top:162.67px;height:16px;line-height:16px;font-size:12.5px;font-weight:700;color:#000;white-space:nowrap;font-family:'Liberation Sans', sans-serif;width:25px;text-align:center;transform:scaleX(1.0);transform-origin:50% 0;">T</div>
<div style="left:1696px;top:162.67px;height:16px;line-height:16px;font-size:12.5px;font-weight:700;color:#000;white-space:nowrap;font-family:'Liberation Sans', sans-serif;width:25px;text-align:center;transform:scaleX(1.0);transform-origin:50% 0;">F</div>
<div style="left:1722px;top:162.67px;height:16px;line-height:16px;font-size:12.5px;font-weight:700;color:#000;white-space:nowrap;font-family:'Liberation Sans', sans-serif;width:25px;text-align:center;transform:scaleX(1.0);transform-origin:50% 0;">S</div>
<div style="left:1748px;top:162.67px;height:16px;line-height:16px;font-size:12.5px;font-weight:700;color:#000;white-space:nowrap;font-family:'Liberation Sans', sans-serif;width:25px;text-align:center;transform:scaleX(1.0);transform-origin:50% 0;">S</div>
<div style="left:1774px;top:162.67px;height:16px;line-height:16px;font-size:12.5px;font-weight:700;color:#000;white-space:nowrap;font-family:'Liberation Sans', sans-serif;width:25px;text-align:center;transform:scaleX(1.25);transform-origin:50% 0;">M</div>
<div style="left:1800px;top:162.67px;height:16px;line-height:16px;font-size:12.5px;font-weight:700;color:#000;white-space:nowrap;font-family:'Liberation Sans', sans-serif;width:25px;text-align:center;transform:scaleX(1.0);transform-origin:50% 0;">T</div>
<div style="left:1826px;top:162.67px;height:16px;line-height:16px;font-size:12.5px;font-weight:700;color:#000;white-space:nowrap;font-family:'Liberation Sans', sans-serif;width:25px;text-align:center;transform:scaleX(1.25);transform-origin:50% 0;">W</div>
<div style="left:1852px;top:162.67px;height:16px;line-height:16px;font-size:12.5px;font-weight:700;color:#000;white-space:nowrap;font-family:'Liberation Sans', sans-serif;width:25px;text-align:center;transform:scaleX(1.0);transform-origin:50% 0;">T</div>
<div style="left:298px;top:182.67px;height:16px;line-height:16px;font-size:12.5px;font-weight:700;color:#000;white-space:nowrap;font-family:'Liberation Sans', sans-serif;transform:scaleX(1.05);transform-origin:0 0;">Project Manager</div>
<div style="left:298px;top:202.67px;height:16px;line-height:16px;font-size:12.5px;font-weight:700;color:#000;white-space:nowrap;font-family:'Liberation Sans', sans-serif;transform:scaleX(1.0);transform-origin:0 0;">Business Analyst</div>
<div style="left:298px;top:222.67px;height:16px;line-height:16px;font-size:12.5px;font-weight:700;color:#000;white-space:nowrap;font-family:'Liberation Sans', sans-serif;transform:scaleX(1.036);transform-origin:0 0;">CRM Architect</div>
<div style="left:298px;top:242.67px;height:16px;line-height:16px;font-size:12.5px;font-weight:700;color:#000;white-space:nowrap;font-family:'Liberation Sans', sans-serif;transform:scaleX(1.06);transform-origin:0 0;">CRM Developer</div>
<div style="left:298px;top:262.67px;height:16px;line-height:16px;font-size:12.5px;font-weight:700;color:#000;white-space:nowrap;font-family:'Liberation Sans', sans-serif;transform:scaleX(1.06);transform-origin:0 0;">Test Manager</div>
<div style="left:298px;top:282.67px;height:16px;line-height:16px;font-size:12.5px;font-weight:700;color:#000;white-space:nowrap;font-family:'Liberation Sans', sans-serif;transform:scaleX(1.03);transform-origin:0 0;">Junior CRM Developer</div>
<div style="left:298px;top:302.67px;height:16px;line-height:16px;font-size:12.5px;font-weight:700;color:#000;white-space:nowrap;font-family:'Liberation Sans', sans-serif;transform:scaleX(1.039);transform-origin:0 0;">Support CRM Developer</div>
<div style="left:298px;top:322.67px;height:16px;line-height:16px;font-size:12.5px;font-weight:700;color:#000;white-space:nowrap;font-family:'Liberation Sans', sans-serif;transform:scaleX(1.038);transform-origin:0 0;">CRM Architect2</div>
<div style="left:498px;top:182.67px;height:16px;line-height:16px;font-size:12.5px;font-weight:700;color:#000;white-space:nowrap;font-family:'Liberation Sans', sans-serif;width:181px;text-align:center;">5</div>
<div style="left:680px;top:182.67px;height:16px;line-height:16px;font-size:12.5px;font-weight:700;color:#000;white-space:nowrap;font-family:'Liberation Sans', sans-serif;width:181px;text-align:center;">5</div>
<div style="left:862px;top:182.67px;height:16px;line-height:16px;font-size:12.5px;font-weight:700;color:#000;white-space:nowrap;font-family:'Liberation Sans', sans-serif;width:181px;text-align:center;">5</div>
<div style="left:1044px;top:182.67px;height:16px;line-height:16px;font-size:12.5px;font-weight:700;color:#000;white-space:nowrap;font-family:'Liberation Sans', sans-serif;width:181px;text-align:center;">4</div>
<div style="left:1226px;top:182.67px;height:16px;line-height:16px;font-size:12.5px;font-weight:700;color:#000;white-space:nowrap;font-family:'Liberation Sans', sans-serif;width:181px;text-align:center;">5</div>
<div style="left:1408px;top:182.67px;height:16px;line-height:16px;font-size:12.5px;font-weight:700;color:#000;white-space:nowrap;font-family:'Liberation Sans', sans-serif;width:183px;text-align:center;">5</div>
<div style="left:1592px;top:182.67px;height:16px;line-height:16px;font-size:12.5px;font-weight:700;color:#000;white-space:nowrap;font-family:'Liberation Sans', sans-serif;width:181px;text-align:center;">5</div>
<div style="left:1774px;top:182.67px;height:16px;line-height:16px;font-size:12.5px;font-weight:700;color:#000;white-space:nowrap;font-family:'Liberation Sans', sans-serif;width:181px;text-align:center;">5</div>
<div style="left:498px;top:202.67px;height:16px;line-height:16px;font-size:12.5px;font-weight:700;color:#000;white-space:nowrap;font-family:'Liberation Sans', sans-serif;width:181px;text-align:center;">5</div>
<div style="left:680px;top:202.67px;height:16px;line-height:16px;font-size:12.5px;font-weight:700;color:#000;white-space:nowrap;font-family:'Liberation Sans', sans-serif;width:181px;text-align:center;">5</div>
<div style="left:862px;top:202.67px;height:16px;line-height:16px;font-size:12.5px;font-weight:700;color:#000;white-space:nowrap;font-family:'Liberation Sans', sans-serif;width:181px;text-align:center;">5</div>
<div style="left:1044px;top:202.67px;height:16px;line-height:16px;font-size:12.5px;font-weight:700;color:#000;white-space:nowrap;font-family:'Liberation Sans', sans-serif;width:181px;text-align:center;">4</div>
<div style="left:1226px;top:202.67px;height:16px;line-height:16px;font-size:12.5px;font-weight:700;color:#000;white-space:nowrap;font-family:'Liberation Sans', sans-serif;width:181px;text-align:center;">5</div>
<div style="left:1408px;top:202.67px;height:16px;line-height:16px;font-size:12.5px;font-weight:700;color:#000;white-space:nowrap;font-family:'Liberation Sans', sans-serif;width:183px;text-align:center;">5</div>
<div style="left:1592px;top:202.67px;height:16px;line-height:16px;font-size:12.5px;font-weight:700;color:#000;white-space:nowrap;font-family:'Liberation Sans', sans-serif;width:181px;text-align:center;">5</div>
<div style="left:1774px;top:202.67px;height:16px;line-height:16px;font-size:12.5px;font-weight:700;color:#000;white-space:nowrap;font-family:'Liberation Sans', sans-serif;width:181px;text-align:center;">5</div>
<div style="left:498px;top:222.67px;height:16px;line-height:16px;font-size:12.5px;font-weight:700;color:#000;white-space:nowrap;font-family:'Liberation Sans', sans-serif;width:181px;text-align:center;">5</div>
<div style="left:680px;top:222.67px;height:16px;line-height:16px;font-size:12.5px;font-weight:700;color:#000;white-space:nowrap;font-family:'Liberation Sans', sans-serif;width:181px;text-align:center;">5</div>
<div style="left:862px;top:222.67px;height:16px;line-height:16px;font-size:12.5px;font-weight:700;color:#000;white-space:nowrap;font-family:'Liberation Sans', sans-serif;width:181px;text-align:center;">5</div>
<div style="left:1044px;top:222.67px;height:16px;line-height:16px;font-size:12.5px;font-weight:700;color:#000;white-space:nowrap;font-family:'Liberation Sans', sans-serif;width:181px;text-align:center;">4</div>
<div style="left:1226px;top:222.67px;height:16px;line-height:16px;font-size:12.5px;font-weight:700;color:#000;white-space:nowrap;font-family:'Liberation Sans', sans-serif;width:181px;text-align:center;">5</div>
<div style="left:1408px;top:222.67px;height:16px;line-height:16px;font-size:12.5px;font-weight:700;color:#000;white-space:nowrap;font-family:'Liberation Sans', sans-serif;width:183px;text-align:center;">5</div>
<div style="left:1592px;top:222.67px;height:16px;line-height:16px;font-size:12.5px;font-weight:700;color:#000;white-space:nowrap;font-family:'Liberation Sans', sans-serif;width:181px;text-align:center;">5</div>
<div style="left:1774px;top:222.67px;height:16px;line-height:16px;font-size:12.5px;font-weight:700;color:#000;white-space:nowrap;font-family:'Liberation Sans', sans-serif;width:181px;text-align:center;">5</div>
<div style="left:498px;top:242.67px;height:16px;line-height:16px;font-size:12.5px;font-weight:700;color:#000;white-space:nowrap;font-family:'Liberation Sans', sans-serif;width:181px;text-align:center;">5</div>
<div style="left:680px;top:242.67px;height:16px;line-height:16px;font-size:12.5px;font-weight:700;color:#000;white-space:nowrap;font-family:'Liberation Sans', sans-serif;width:181px;text-align:center;">5</div>
<div style="left:862px;top:242.67px;height:16px;line-height:16px;font-size:12.5px;font-weight:700;color:#000;white-space:nowrap;font-family:'Liberation Sans', sans-serif;width:181px;text-align:center;">5</div>
<div style="left:1044px;top:242.67px;height:16px;line-height:16px;font-size:12.5px;font-weight:700;color:#000;white-space:nowrap;font-family:'Liberation Sans', sans-serif;width:181px;text-align:center;">4</div>
<div style="left:1226px;top:242.67px;height:16px;line-height:16px;font-size:12.5px;font-weight:700;color:#000;white-space:nowrap;font-family:'Liberation Sans', sans-serif;width:181px;text-align:center;">5</div>
<div style="left:1408px;top:242.67px;height:16px;line-height:16px;font-size:12.5px;font-weight:700;color:#000;white-space:nowrap;font-family:'Liberation Sans', sans-serif;width:183px;text-align:center;">5</div>
<div style="left:1592px;top:242.67px;height:16px;line-height:16px;font-size:12.5px;font-weight:700;color:#000;white-space:nowrap;font-family:'Liberation Sans', sans-serif;width:181px;text-align:center;">5</div>
<div style="left:1774px;top:242.67px;height:16px;line-height:16px;font-size:12.5px;font-weight:700;color:#000;white-space:nowrap;font-family:'Liberation Sans', sans-serif;width:181px;text-align:center;">5</div>
<div style="left:498px;top:262.67px;height:16px;line-height:16px;font-size:12.5px;font-weight:400;color:#000;white-space:nowrap;font-family:'Liberation Sans', sans-serif;width:181px;text-align:center;-webkit-text-stroke:0.12px #000;">0</div>
<div style="left:680px;top:262.67px;height:16px;line-height:16px;font-size:12.5px;font-weight:400;color:#000;white-space:nowrap;font-family:'Liberation Sans', sans-serif;width:181px;text-align:center;-webkit-text-stroke:0.12px #000;">0</div>
<div style="left:862px;top:262.67px;height:16px;line-height:16px;font-size:12.5px;font-weight:700;color:#000;white-space:nowrap;font-family:'Liberation Sans', sans-serif;width:181px;text-align:center;">5</div>
<div style="left:1044px;top:262.67px;height:16px;line-height:16px;font-size:12.5px;font-weight:700;color:#000;white-space:nowrap;font-family:'Liberation Sans', sans-serif;width:181px;text-align:center;">4</div>
<div style="left:1226px;top:262.67px;height:16px;line-height:16px;font-size:12.5px;font-weight:700;color:#000;white-space:nowrap;font-family:'Liberation Sans', sans-serif;width:181px;text-align:center;">5</div>
<div style="left:1408px;top:262.67px;height:16px;line-height:16px;font-size:12.5px;font-weight:700;color:#000;white-space:nowrap;font-family:'Liberation Sans', sans-serif;width:183px;text-align:center;">5</div>
<div style="left:1592px;top:262.67px;height:16px;line-height:16px;font-size:12.5px;font-weight:700;color:#000;white-space:nowrap;font-family:'Liberation Sans', sans-serif;width:181px;text-align:center;">5</div>
<div style="left:1774px;top:262.67px;height:16px;line-height:16px;font-size:12.5px;font-weight:700;color:#000;white-space:nowrap;font-family:'Liberation Sans', sans-serif;width:181px;text-align:center;">5</div>
<div style="left:498px;top:282.67px;height:16px;line-height:16px;font-size:12.5px;font-weight:400;color:#000;white-space:nowrap;font-family:'Liberation Sans', sans-serif;width:181px;text-align:center;-webkit-text-stroke:0.12px #000;">0</div>
<div style="left:680px;top:282.67px;height:16px;line-height:16px;font-size:12.5px;font-weight:400;color:#000;white-space:nowrap;font-family:'Liberation Sans', sans-serif;width:181px;text-align:center;-webkit-text-stroke:0.12px #000;">0</div>
<div style="left:862px;top:282.67px;height:16px;line-height:16px;font-size:12.5px;font-weight:400;color:#000;white-space:nowrap;font-family:'Liberation Sans', sans-serif;width:181px;text-align:center;-webkit-text-stroke:0.12px #000;">0</div>
<div style="left:1044px;top:282.67px;height:16px;line-height:16px;font-size:12.5px;font-weight:400;color:#000;white-space:nowrap;font-family:'Liberation Sans', sans-serif;width:181px;text-align:center;-webkit-text-stroke:0.12px #000;">0</div>
<div style="left:1226px;top:282.67px;height:16px;line-height:16px;font-size:12.5px;font-weight:400;color:#000;white-space:nowrap;font-family:'Liberation Sans', sans-serif;width:181px;text-align:center;-webkit-text-stroke:0.12px #000;">0</div>
<div style="left:1408px;top:282.67px;height:16px;line-height:16px;font-size:12.5px;font-weight:400;color:#000;white-space:nowrap;font-family:'Liberation Sans', sans-serif;width:183px;text-align:center;-webkit-text-stroke:0.12px #000;">0</div>
<div style="left:1592px;top:282.67px;height:16px;line-height:16px;font-size:12.5px;font-weight:400;color:#000;white-space:nowrap;font-family:'Liberation Sans', sans-serif;width:181px;text-align:center;-webkit-text-stroke:0.12px #000;">0</div>
<div style="left:1774px;top:282.67px;height:16px;line-height:16px;font-size:12.5px;font-weight:400;color:#000;white-space:nowrap;font-family:'Liberation Sans', sans-serif;width:181px;text-align:center;-webkit-text-stroke:0.12px #000;">0</div>
<div style="left:498px;top:302.67px;height:16px;line-height:16px;font-size:12.5px;font-weight:400;color:#000;white-space:nowrap;font-family:'Liberation Sans', sans-serif;width:181px;text-align:center;-webkit-text-stroke:0.12px #000;">0</div>
<div style="left:680px;top:302.67px;height:16px;line-height:16px;font-size:12.5px;font-weight:400;color:#000;white-space:nowrap;font-family:'Liberation Sans', sans-serif;width:181px;text-align:center;-webkit-text-stroke:0.12px #000;">0</div>
<div style="left:862px;top:302.67px;height:16px;line-height:16px;font-size:12.5px;font-weight:400;color:#000;white-space:nowrap;font-family:'Liberation Sans', sans-serif;width:181px;text-align:center;-webkit-text-stroke:0.12px #000;">0</div>
<div style="left:1044px;top:302.67px;height:16px;line-height:16px;font-size:12.5px;font-weight:400;color:#000;white-space:nowrap;font-family:'Liberation Sans', sans-serif;width:181px;text-align:center;-webkit-text-stroke:0.12px #000;">0</div>
<div style="left:1226px;top:302.67px;height:16px;line-height:16px;font-size:12.5px;font-weight:400;color:#000;white-space:nowrap;font-family:'Liberation Sans', sans-serif;width:181px;text-align:center;-webkit-text-stroke:0.12px #000;">0</div>
<div style="left:1408px;top:302.67px;height:16px;line-height:16px;font-size:12.5px;font-weight:400;color:#000;white-space:nowrap;font-family:'Liberation Sans', sans-serif;width:183px;text-align:center;-webkit-text-stroke:0.12px #000;">0</div>
<div style="left:1592px;top:302.67px;height:16px;line-height:16px;font-size:12.5px;font-weight:400;color:#000;white-space:nowrap;font-family:'Liberation Sans', sans-serif;width:181px;text-align:center;-webkit-text-stroke:0.12px #000;">0</div>
<div style="left:1774px;top:302.67px;height:16px;line-height:16px;font-size:12.5px;font-weight:400;color:#000;white-space:nowrap;font-family:'Liberation Sans', sans-serif;width:181px;text-align:center;-webkit-text-stroke:0.12px #000;">0</div>
<div style="left:498px;top:322.67px;height:16px;line-height:16px;font-size:12.5px;font-weight:400;color:#000;white-space:nowrap;font-family:'Liberation Sans', sans-serif;width:181px;text-align:center;-webkit-text-stroke:0.12px #000;">0</div>
<div style="left:680px;top:322.67px;height:16px;line-height:16px;font-size:12.5px;font-weight:700;color:#000;white-space:nowrap;font-family:'Liberation Sans', sans-serif;width:181px;text-align:center;">5</div>
<div style="left:862px;top:322.67px;height:16px;line-height:16px;font-size:12.5px;font-weight:700;color:#000;white-space:nowrap;font-family:'Liberation Sans', sans-serif;width:181px;text-align:center;">5</div>
<div style="left:1044px;top:322.67px;height:16px;line-height:16px;font-size:12.5px;font-weight:700;color:#000;white-space:nowrap;font-family:'Liberation Sans', sans-serif;width:181px;text-align:center;">5</div>
<div style="left:1226px;top:322.67px;height:16px;line-height:16px;font-size:12.5px;font-weight:400;color:#000;white-space:nowrap;font-family:'Liberation Sans', sans-serif;width:181px;text-align:center;-webkit-text-stroke:0.12px #000;">0</div>
<div style="left:1408px;top:322.67px;height:16px;line-height:16px;font-size:12.5px;font-weight:400;color:#000;white-space:nowrap;font-family:'Liberation Sans', sans-serif;width:183px;text-align:center;-webkit-text-stroke:0.12px #000;">0</div>
<div style="left:1592px;top:322.67px;height:16px;line-height:16px;font-size:12.5px;font-weight:400;color:#000;white-space:nowrap;font-family:'Liberation Sans', sans-serif;width:181px;text-align:center;-webkit-text-stroke:0.12px #000;">0</div>
<div style="left:1774px;top:322.67px;height:16px;line-height:16px;font-size:12.5px;font-weight:400;color:#000;white-space:nowrap;font-family:'Liberation Sans', sans-serif;width:181px;text-align:center;-webkit-text-stroke:0.12px #000;">0</div>
<div style="left:498px;top:342.67px;height:16px;line-height:16px;font-size:12.5px;font-weight:400;color:#000;white-space:nowrap;font-family:'Liberation Sans', sans-serif;width:181px;text-align:center;-webkit-text-stroke:0.12px #000;">0</div>
<div style="left:680px;top:342.67px;height:16px;line-height:16px;font-size:12.5px;font-weight:400;color:#000;white-space:nowrap;font-family:'Liberation Sans', sans-serif;width:181px;text-align:center;-webkit-text-stroke:0.12px #000;">0</div>
<div style="left:862px;top:342.67px;height:16px;line-height:16px;font-size:12.5px;font-weight:400;color:#000;white-space:nowrap;font-family:'Liberation Sans', sans-serif;width:181px;text-align:center;-webkit-text-stroke:0.12px #000;">0</div>
<div style="left:1044px;top:342.67px;height:16px;line-height:16px;font-size:12.5px;font-weight:400;color:#000;white-space:nowrap;font-family:'Liberation Sans', sans-serif;width:181px;text-align:center;-webkit-text-stroke:0.12px #000;">0</div>
<div style="left:1226px;top:342.67px;height:16px;line-height:16px;font-size:12.5px;font-weight:400;color:#000;white-space:nowrap;font-family:'Liberation Sans', sans-serif;width:181px;text-align:center;-webkit-text-stroke:0.12px #000;">0</div>
<div style="left:1408px;top:342.67px;height:16px;line-height:16px;font-size:12.5px;font-weight:400;color:#000;white-space:nowrap;font-family:'Liberation Sans', sans-serif;width:183px;text-align:center;-webkit-text-stroke:0.12px #000;">0</div>
<div style="left:1592px;top:342.67px;height:16px;line-height:16px;font-size:12.5px;font-weight:400;color:#000;white-space:nowrap;font-family:'Liberation Sans', sans-serif;width:181px;text-align:center;-webkit-text-stroke:0.12px #000;">0</div>
<div style="left:1774px;top:342.67px;height:16px;line-height:16px;font-size:12.5px;font-weight:400;color:#000;white-space:nowrap;font-family:'Liberation Sans', sans-serif;width:181px;text-align:center;-webkit-text-stroke:0.12px #000;">0</div>
<div style="left:498px;top:362.67px;height:16px;line-height:16px;font-size:12.5px;font-weight:400;color:#000;white-space:nowrap;font-family:'Liberation Sans', sans-serif;width:181px;text-align:center;-webkit-text-stroke:0.12px #000;">0</div>
<div style="left:680px;top:362.67px;height:16px;line-height:16px;font-size:12.5px;font-weight:400;color:#000;white-space:nowrap;font-family:'Liberation Sans', sans-serif;width:181px;text-align:center;-webkit-text-stroke:0.12px #000;">0</div>
<div style="left:862px;top:362.67px;height:16px;line-height:16px;font-size:12.5px;font-weight:400;color:#000;white-space:nowrap;font-family:'Liberation Sans', sans-serif;width:181px;text-align:center;-webkit-text-stroke:0.12px #000;">0</div>
<div style="left:1044px;top:362.67px;height:16px;line-height:16px;font-size:12.5px;font-weight:400;color:#000;white-space:nowrap;font-family:'Liberation Sans', sans-serif;width:181px;text-align:center;-webkit-text-stroke:0.12px #000;">0</div>
<div style="left:1226px;top:362.67px;height:16px;line-height:16px;font-size:12.5px;font-weight:400;color:#000;white-space:nowrap;font-family:'Liberation Sans', sans-serif;width:181px;text-align:center;-webkit-text-stroke:0.12px #000;">0</div>
<div style="left:1408px;top:362.67px;height:16px;line-height:16px;font-size:12.5px;font-weight:400;color:#000;white-space:nowrap;font-family:'Liberation Sans', sans-serif;width:183px;text-align:center;-webkit-text-stroke:0.12px #000;">0</div>
<div style="left:1592px;top:362.67px;height:16px;line-height:16px;font-size:12.5px;font-weight:400;color:#000;white-space:nowrap;font-family:'Liberation Sans', sans-serif;width:181px;text-align:center;-webkit-text-stroke:0.12px #000;">0</div>
<div style="left:1774px;top:362.67px;height:16px;line-height:16px;font-size:12.5px;font-weight:400;color:#000;white-space:nowrap;font-family:'Liberation Sans', sans-serif;width:181px;text-align:center;-webkit-text-stroke:0.12px #000;">0</div>
<div style="left:498px;top:382.67px;height:16px;line-height:16px;font-size:12.5px;font-weight:400;color:#000;white-space:nowrap;font-family:'Liberation Sans', sans-serif;width:181px;text-align:center;-webkit-text-stroke:0.12px #000;">0</div>
<div style="left:680px;top:382.67px;height:16px;line-height:16px;font-size:12.5px;font-weight:400;color:#000;white-space:nowrap;font-family:'Liberation Sans', sans-serif;width:181px;text-align:center;-webkit-text-stroke:0.12px #000;">0</div>
<div style="left:862px;top:382.67px;height:16px;line-height:16px;font-size:12.5px;font-weight:400;color:#000;white-space:nowrap;font-family:'Liberation Sans', sans-serif;width:181px;text-align:center;-webkit-text-stroke:0.12px #000;">0</div>
<div style="left:1044px;top:382.67px;height:16px;line-height:16px;font-size:12.5px;font-weight:400;color:#000;white-space:nowrap;font-family:'Liberation Sans', sans-serif;width:181px;text-align:center;-webkit-text-stroke:0.12px #000;">0</div>
<div style="left:1226px;top:382.67px;height:16px;line-height:16px;font-size:12.5px;font-weight:400;color:#000;white-space:nowrap;font-family:'Liberation Sans', sans-serif;width:181px;text-align:center;-webkit-text-stroke:0.12px #000;">0</div>
<div style="left:1408px;top:382.67px;height:16px;line-height:16px;font-size:12.5px;font-weight:400;color:#000;white-space:nowrap;font-family:'Liberation Sans', sans-serif;width:183px;text-align:center;-webkit-text-stroke:0.12px #000;">0</div>
<div style="left:1592px;top:382.67px;height:16px;line-height:16px;font-size:12.5px;font-weight:400;color:#000;white-space:nowrap;font-family:'Liberation Sans', sans-serif;width:181px;text-align:center;-webkit-text-stroke:0.12px #000;">0</div>
<div style="left:1774px;top:382.67px;height:16px;line-height:16px;font-size:12.5px;font-weight:400;color:#000;white-space:nowrap;font-family:'Liberation Sans', sans-serif;width:181px;text-align:center;-webkit-text-stroke:0.12px #000;">0</div>
<div style="left:498px;top:402.67px;height:16px;line-height:16px;font-size:12.5px;font-weight:400;color:#000;white-space:nowrap;font-family:'Liberation Sans', sans-serif;width:181px;text-align:center;-webkit-text-stroke:0.12px #000;">0</div>
<div style="left:680px;top:402.67px;height:16px;line-height:16px;font-size:12.5px;font-weight:400;color:#000;white-space:nowrap;font-family:'Liberation Sans', sans-serif;width:181px;text-align:center;-webkit-text-stroke:0.12px #000;">0</div>
<div style="left:862px;top:402.67px;height:16px;line-height:16px;font-size:12.5px;font-weight:400;color:#000;white-space:nowrap;font-family:'Liberation Sans', sans-serif;width:181px;text-align:center;-webkit-text-stroke:0.12px #000;">0</div>
<div style="left:1044px;top:402.67px;height:16px;line-height:16px;font-size:12.5px;font-weight:400;color:#000;white-space:nowrap;font-family:'Liberation Sans', sans-serif;width:181px;text-align:center;-webkit-text-stroke:0.12px #000;">0</div>
<div style="left:1226px;top:402.67px;height:16px;line-height:16px;font-size:12.5px;font-weight:400;color:#000;white-space:nowrap;font-family:'Liberation Sans', sans-serif;width:181px;text-align:center;-webkit-text-stroke:0.12px #000;">0</div>
<div style="left:1408px;top:402.67px;height:16px;line-height:16px;font-size:12.5px;font-weight:400;color:#000;white-space:nowrap;font-family:'Liberation Sans', sans-serif;width:183px;text-align:center;-webkit-text-stroke:0.12px #000;">0</div>
<div style="left:1592px;top:402.67px;height:16px;line-height:16px;font-size:12.5px;font-weight:400;color:#000;white-space:nowrap;font-family:'Liberation Sans', sans-serif;width:181px;text-align:center;-webkit-text-stroke:0.12px #000;">0</div>
<div style="left:1774px;top:402.67px;height:16px;line-height:16px;font-size:12.5px;font-weight:400;color:#000;white-space:nowrap;font-family:'Liberation Sans', sans-serif;width:181px;text-align:center;-webkit-text-stroke:0.12px #000;">0</div>
<div style="left:498px;top:422.67px;height:16px;line-height:16px;font-size:12.5px;font-weight:400;color:#000;white-space:nowrap;font-family:'Liberation Sans', sans-serif;width:181px;text-align:center;-webkit-text-stroke:0.12px #000;">0</div>
<div style="left:680px;top:422.67px;height:16px;line-height:16px;font-size:12.5px;font-weight:400;color:#000;white-space:nowrap;font-family:'Liberation Sans', sans-serif;width:181px;text-align:center;-webkit-text-stroke:0.12px #000;">0</div>
<div style="left:862px;top:422.67px;height:16px;line-height:16px;font-size:12.5px;font-weight:400;color:#000;white-space:nowrap;font-family:'Liberation Sans', sans-serif;width:181px;text-align:center;-webkit-text-stroke:0.12px #000;">0</div>
<div style="left:1044px;top:422.67px;height:16px;line-height:16px;font-size:12.5px;font-weight:400;color:#000;white-space:nowrap;font-family:'Liberation Sans', sans-serif;width:181px;text-align:center;-webkit-text-stroke:0.12px #000;">0</div>
<div style="left:1226px;top:422.67px;height:16px;line-height:16px;font-size:12.5px;font-weight:400;color:#000;white-space:nowrap;font-family:'Liberation Sans', sans-serif;width:181px;text-align:center;-webkit-text-stroke:0.12px #000;">0</div>
<div style="left:1408px;top:422.67px;height:16px;line-height:16px;font-size:12.5px;font-weight:400;color:#000;white-space:nowrap;font-family:'Liberation Sans', sans-serif;width:183px;text-align:center;-webkit-text-stroke:0.12px #000;">0</div>
<div style="left:1592px;top:422.67px;height:16px;line-height:16px;font-size:12.5px;font-weight:400;color:#000;white-space:nowrap;font-family:'Liberation Sans', sans-serif;width:181px;text-align:center;-webkit-text-stroke:0.12px #000;">0</div>
<div style="left:1774px;top:422.67px;height:16px;line-height:16px;font-size:12.5px;font-weight:400;color:#000;white-space:nowrap;font-family:'Liberation Sans', sans-serif;width:181px;text-align:center;-webkit-text-stroke:0.12px #000;">0</div>
<div style="left:498px;top:442.67px;height:16px;line-height:16px;font-size:12.5px;font-weight:400;color:#000;white-space:nowrap;font-family:'Liberation Sans', sans-serif;width:181px;text-align:center;-webkit-text-stroke:0.12px #000;">0</div>
<div style="left:680px;top:442.67px;height:16px;line-height:16px;font-size:12.5px;font-weight:400;color:#000;white-space:nowrap;font-family:'Liberation Sans', sans-serif;width:181px;text-align:center;-webkit-text-stroke:0.12px #000;">0</div>
<div style="left:862px;top:442.67px;height:16px;line-height:16px;font-size:12.5px;font-weight:400;color:#000;white-space:nowrap;font-family:'Liberation Sans', sans-serif;width:181px;text-align:center;-webkit-text-stroke:0.12px #000;">0</div>
<div style="left:1044px;top:442.67px;height:16px;line-height:16px;font-size:12.5px;font-weight:400;color:#000;white-space:nowrap;font-family:'Liberation Sans', sans-serif;width:181px;text-align:center;-webkit-text-stroke:0.12px #000;">0</div>
<div style="left:1226px;top:442.67px;height:16px;line-height:16px;font-size:12.5px;font-weight:400;color:#000;white-space:nowrap;font-family:'Liberation Sans', sans-serif;width:181px;text-align:center;-webkit-text-stroke:0.12px #000;">0</div>
<div style="left:1408px;top:442.67px;height:16px;line-height:16px;font-size:12.5px;font-weight:400;color:#000;white-space:nowrap;font-family:'Liberation Sans', sans-serif;width:183px;text-align:center;-webkit-text-stroke:0.12px #000;">0</div>
<div style="left:1592px;top:442.67px;height:16px;line-height:16px;font-size:12.5px;font-weight:400;color:#000;white-space:nowrap;font-family:'Liberation Sans', sans-serif;width:181px;text-align:center;-webkit-text-stroke:0.12px #000;">0</div>
<div style="left:1774px;top:442.67px;height:16px;line-height:16px;font-size:12.5px;font-weight:400;color:#000;white-space:nowrap;font-family:'Liberation Sans', sans-serif;width:181px;text-align:center;-webkit-text-stroke:0.12px #000;">0</div>
<div style="left:498px;top:462.67px;height:16px;line-height:16px;font-size:12.5px;font-weight:400;color:#000;white-space:nowrap;font-family:'Liberation Sans', sans-serif;width:181px;text-align:center;-webkit-text-stroke:0.12px #000;">0</div>
<div style="left:680px;top:462.67px;height:16px;line-height:16px;font-size:12.5px;font-weight:400;color:#000;white-space:nowrap;font-family:'Liberation Sans', sans-serif;width:181px;text-align:center;-webkit-text-stroke:0.12px #000;">0</div>
<div style="left:862px;top:462.67px;height:16px;line-height:16px;font-size:12.5px;font-weight:400;color:#000;white-space:nowrap;font-family:'Liberation Sans', sans-serif;width:181px;text-align:center;-webkit-text-stroke:0.12px #000;">0</div>
<div style="left:1044px;top:462.67px;height:16px;line-height:16px;font-size:12.5px;font-weight:400;color:#000;white-space:nowrap;font-family:'Liberation Sans', sans-serif;width:181px;text-align:center;-webkit-text-stroke:0.12px #000;">0</div>
<div style="left:1226px;top:462.67px;height:16px;line-height:16px;font-size:12.5px;font-weight:400;color:#000;white-space:nowrap;font-family:'Liberation Sans', sans-serif;width:181px;text-align:center;-webkit-text-stroke:0.12px #000;">0</div>
<div style="left:1408px;top:462.67px;height:16px;line-height:16px;font-size:12.5px;font-weight:400;color:#000;white-space:nowrap;font-family:'Liberation Sans', sans-serif;width:183px;text-align:center;-webkit-text-stroke:0.12px #000;">0</div>
<div style="left:1592px;top:462.67px;height:16px;line-height:16px;font-size:12.5px;font-weight:400;color:#000;white-space:nowrap;font-family:'Liberation Sans', sans-serif;width:181px;text-align:center;-webkit-text-stroke:0.12px #000;">0</div>
<div style="left:1774px;top:462.67px;height:16px;line-height:16px;font-size:12.5px;font-weight:400;color:#000;white-space:nowrap;font-family:'Liberation Sans', sans-serif;width:181px;text-align:center;-webkit-text-stroke:0.12px #000;">0</div>
<div style="left:498px;top:482.67px;height:16px;line-height:16px;font-size:12.5px;font-weight:400;color:#000;white-space:nowrap;font-family:'Liberation Sans', sans-serif;width:181px;text-align:center;-webkit-text-stroke:0.12px #000;">0</div>
<div style="left:680px;top:482.67px;height:16px;line-height:16px;font-size:12.5px;font-weight:400;color:#000;white-space:nowrap;font-family:'Liberation Sans', sans-serif;width:181px;text-align:center;-webkit-text-stroke:0.12px #000;">0</div>
<div style="left:862px;top:482.67px;height:16px;line-height:16px;font-size:12.5px;font-weight:400;color:#000;white-space:nowrap;font-family:'Liberation Sans', sans-serif;width:181px;text-align:center;-webkit-text-stroke:0.12px #000;">0</div>
<div style="left:1044px;top:482.67px;height:16px;line-height:16px;font-size:12.5px;font-weight:400;color:#000;white-space:nowrap;font-family:'Liberation Sans', sans-serif;width:181px;text-align:center;-webkit-text-stroke:0.12px #000;">0</div>
<div style="left:1226px;top:482.67px;height:16px;line-height:16px;font-size:12.5px;font-weight:400;color:#000;white-space:nowrap;font-family:'Liberation Sans', sans-serif;width:181px;text-align:center;-webkit-text-stroke:0.12px #000;">0</div>
<div style="left:1408px;top:482.67px;height:16px;line-height:16px;font-size:12.5px;font-weight:400;color:#000;white-space:nowrap;font-family:'Liberation Sans', sans-serif;width:183px;text-align:center;-webkit-text-stroke:0.12px #000;">0</div>
<div style="left:1592px;top:482.67px;height:16px;line-height:16px;font-size:12.5px;font-weight:400;color:#000;white-space:nowrap;font-family:'Liberation Sans', sans-serif;width:181px;text-align:center;-webkit-text-stroke:0.12px #000;">0</div>
<div style="left:1774px;top:482.67px;height:16px;line-height:16px;font-size:12.5px;font-weight:400;color:#000;white-space:nowrap;font-family:'Liberation Sans', sans-serif;width:181px;text-align:center;-webkit-text-stroke:0.12px #000;">0</div>
<div style="left:498px;top:502.67px;height:16px;line-height:16px;font-size:12.5px;font-weight:400;color:#000;white-space:nowrap;font-family:'Liberation Sans', sans-serif;width:181px;text-align:center;-webkit-text-stroke:0.12px #000;">0</div>
<div style="left:680px;top:502.67px;height:16px;line-height:16px;font-size:12.5px;font-weight:400;color:#000;white-space:nowrap;font-family:'Liberation Sans', sans-serif;width:181px;text-align:center;-webkit-text-stroke:0.12px #000;">0</div>
<div style="left:862px;top:502.67px;height:16px;line-height:16px;font-size:12.5px;font-weight:400;color:#000;white-space:nowrap;font-family:'Liberation Sans', sans-serif;width:181px;text-align:center;-webkit-text-stroke:0.12px #000;">0</div>
<div style="left:1044px;top:502.67px;height:16px;line-height:16px;font-size:12.5px;font-weight:400;color:#000;white-space:nowrap;font-family:'Liberation Sans', sans-serif;width:181px;text-align:center;-webkit-text-stroke:0.12px #000;">0</div>
<div style="left:1226px;top:502.67px;height:16px;line-height:16px;font-size:12.5px;font-weight:400;color:#000;white-space:nowrap;font-family:'Liberation Sans', sans-serif;width:181px;text-align:center;-webkit-text-stroke:0.12px #000;">0</div>
<div style="left:1408px;top:502.67px;height:16px;line-height:16px;font-size:12.5px;font-weight:400;color:#000;white-space:nowrap;font-family:'Liberation Sans', sans-serif;width:183px;text-align:center;-webkit-text-stroke:0.12px #000;">0</div>
<div style="left:1592px;top:502.67px;height:16px;line-height:16px;font-size:12.5px;font-weight:400;color:#000;white-space:nowrap;font-family:'Liberation Sans', sans-serif;width:181px;text-align:center;-webkit-text-stroke:0.12px #000;">0</div>
<div style="left:1774px;top:502.67px;height:16px;line-height:16px;font-size:12.5px;font-weight:400;color:#000;white-space:nowrap;font-family:'Liberation Sans', sans-serif;width:181px;text-align:center;-webkit-text-stroke:0.12px #000;">0</div>
<div style="left:498px;top:522.67px;height:16px;line-height:16px;font-size:12.5px;font-weight:400;color:#000;white-space:nowrap;font-family:'Liberation Sans', sans-serif;width:181px;text-align:center;-webkit-text-stroke:0.12px #000;">0</div>
<div style="left:680px;top:522.67px;height:16px;line-height:16px;font-size:12.5px;font-weight:400;color:#000;white-space:nowrap;font-family:'Liberation Sans', sans-serif;width:181px;text-align:center;-webkit-text-stroke:0.12px #000;">0</div>
<div style="left:862px;top:522.67px;height:16px;line-height:16px;font-size:12.5px;font-weight:400;color:#000;white-space:nowrap;font-family:'Liberation Sans', sans-serif;width:181px;text-align:center;-webkit-text-stroke:0.12px #000;">0</div>
<div style="left:1044px;top:522.67px;height:16px;line-height:16px;font-size:12.5px;font-weight:400;color:#000;white-space:nowrap;font-family:'Liberation Sans', sans-serif;width:181px;text-align:center;-webkit-text-stroke:0.12px #000;">0</div>
<div style="left:1226px;top:522.67px;height:16px;line-height:16px;font-size:12.5px;font-weight:400;color:#000;white-space:nowrap;font-family:'Liberation Sans', sans-serif;width:181px;text-align:center;-webkit-text-stroke:0.12px #000;">0</div>
<div style="left:1408px;top:522.67px;height:16px;line-height:16px;font-size:12.5px;font-weight:400;color:#000;white-space:nowrap;font-family:'Liberation Sans', sans-serif;width:183px;text-align:center;-webkit-text-stroke:0.12px #000;">0</div>
<div style="left:1592px;top:522.67px;height:16px;line-height:16px;font-size:12.5px;font-weight:400;color:#000;white-space:nowrap;font-family:'Liberation Sans', sans-serif;width:181px;text-align:center;-webkit-text-stroke:0.12px #000;">0</div>
<div style="left:1774px;top:522.67px;height:16px;line-height:16px;font-size:12.5px;font-weight:400;color:#000;white-space:nowrap;font-family:'Liberation Sans', sans-serif;width:181px;text-align:center;-webkit-text-stroke:0.12px #000;">0</div>
<div style="left:498px;top:542.67px;height:16px;line-height:16px;font-size:12.5px;font-weight:400;color:#000;white-space:nowrap;font-family:'Liberation Sans', sans-serif;width:181px;text-align:center;-webkit-text-stroke:0.12px #000;">0</div>
<div style="left:680px;top:542.67px;height:16px;line-height:16px;font-size:12.5px;font-weight:400;color:#000;white-space:nowrap;font-family:'Liberation Sans', sans-serif;width:181px;text-align:center;-webkit-text-stroke:0.12px #000;">0</div>
<div style="left:862px;top:542.67px;height:16px;line-height:16px;font-size:12.5px;font-weight:400;color:#000;white-space:nowrap;font-family:'Liberation Sans', sans-serif;width:181px;text-align:center;-webkit-text-stroke:0.12px #000;">0</div>
<div style="left:1044px;top:542.67px;height:16px;line-height:16px;font-size:12.5px;font-weight:400;color:#000;white-space:nowrap;font-family:'Liberation Sans', sans-serif;width:181px;text-align:center;-webkit-text-stroke:0.12px #000;">0</div>
<div style="left:1226px;top:542.67px;height:16px;line-height:16px;font-size:12.5px;font-weight:400;color:#000;white-space:nowrap;font-family:'Liberation Sans', sans-serif;width:181px;text-align:center;-webkit-text-stroke:0.12px #000;">0</div>
<div style="left:1408px;top:542.67px;height:16px;line-height:16px;font-size:12.5px;font-weight:400;color:#000;white-space:nowrap;font-family:'Liberation Sans', sans-serif;width:183px;text-align:center;-webkit-text-stroke:0.12px #000;">0</div>
<div style="left:1592px;top:542.67px;height:16px;line-height:16px;font-size:12.5px;font-weight:400;color:#000;white-space:nowrap;font-family:'Liberation Sans', sans-serif;width:181px;text-align:center;-webkit-text-stroke:0.12px #000;">0</div>
<div style="left:1774px;top:542.67px;height:16px;line-height:16px;font-size:12.5px;font-weight:400;color:#000;white-space:nowrap;font-family:'Liberation Sans', sans-serif;width:181px;text-align:center;-webkit-text-stroke:0.12px #000;">0</div>
<div style="left:498px;top:562.67px;height:16px;line-height:16px;font-size:12.5px;font-weight:400;color:#000;white-space:nowrap;font-family:'Liberation Sans', sans-serif;width:181px;text-align:center;-webkit-text-stroke:0.12px #000;">0</div>
<div style="left:680px;top:562.67px;height:16px;line-height:16px;font-size:12.5px;font-weight:400;color:#000;white-space:nowrap;font-family:'Liberation Sans', sans-serif;width:181px;text-align:center;-webkit-text-stroke:0.12px #000;">0</div>
<div style="left:862px;top:562.67px;height:16px;line-height:16px;font-size:12.5px;font-weight:400;color:#000;white-space:nowrap;font-family:'Liberation Sans', sans-serif;width:181px;text-align:center;-webkit-text-stroke:0.12px #000;">0</div>
<div style="left:1044px;top:562.67px;height:16px;line-height:16px;font-size:12.5px;font-weight:400;color:#000;white-space:nowrap;font-family:'Liberation Sans', sans-serif;width:181px;text-align:center;-webkit-text-stroke:0.12px #000;">0</div>
<div style="left:1226px;top:562.67px;height:16px;line-height:16px;font-size:12.5px;font-weight:400;color:#000;white-space:nowrap;font-family:'Liberation Sans', sans-serif;width:181px;text-align:center;-webkit-text-stroke:0.12px #000;">0</div>
<div style="left:1408px;top:562.67px;height:16px;line-height:16px;font-size:12.5px;font-weight:400;color:#000;white-space:nowrap;font-family:'Liberation Sans', sans-serif;width:183px;text-align:center;-webkit-text-stroke:0.12px #000;">0</div>
<div style="left:1592px;top:562.67px;height:16px;line-height:16px;font-size:12.5px;font-weight:400;color:#000;white-space:nowrap;font-family:'Liberation Sans', sans-serif;width:181px;text-align:center;-webkit-text-stroke:0.12px #000;">0</div>
<div style="left:1774px;top:562.67px;height:16px;line-height:16px;font-size:12.5px;font-weight:400;color:#000;white-space:nowrap;font-family:'Liberation Sans', sans-serif;width:181px;text-align:center;-webkit-text-stroke:0.12px #000;">0</div>
<div style="left:498px;top:582.67px;height:16px;line-height:16px;font-size:12.5px;font-weight:400;color:#000;white-space:nowrap;font-family:'Liberation Sans', sans-serif;width:181px;text-align:center;-webkit-text-stroke:0.12px #000;">0</div>
<div style="left:680px;top:582.67px;height:16px;line-height:16px;font-size:12.5px;font-weight:400;color:#000;white-space:nowrap;font-family:'Liberation Sans', sans-serif;width:181px;text-align:center;-webkit-text-stroke:0.12px #000;">0</div>
<div style="left:862px;top:582.67px;height:16px;line-height:16px;font-size:12.5px;font-weight:400;color:#000;white-space:nowrap;font-family:'Liberation Sans', sans-serif;width:181px;text-align:center;-webkit-text-stroke:0.12px #000;">0</div>
<div style="left:1044px;top:582.67px;height:16px;line-height:16px;font-size:12.5px;font-weight:400;color:#000;white-space:nowrap;font-family:'Liberation Sans', sans-serif;width:181px;text-align:center;-webkit-text-stroke:0.12px #000;">0</div>
<div style="left:1226px;top:582.67px;height:16px;line-height:16px;font-size:12.5px;font-weight:400;color:#000;white-space:nowrap;font-family:'Liberation Sans', sans-serif;width:181px;text-align:center;-webkit-text-stroke:0.12px #000;">0</div>
<div style="left:1408px;top:582.67px;height:16px;line-height:16px;font-size:12.5px;font-weight:400;color:#000;white-space:nowrap;font-family:'Liberation Sans', sans-serif;width:183px;text-align:center;-webkit-text-stroke:0.12px #000;">0</div>
<div style="left:1592px;top:582.67px;height:16px;line-height:16px;font-size:12.5px;font-weight:400;color:#000;white-space:nowrap;font-family:'Liberation Sans', sans-serif;width:181px;text-align:center;-webkit-text-stroke:0.12px #000;">0</div>
<div style="left:1774px;top:582.67px;height:16px;line-height:16px;font-size:12.5px;font-weight:400;color:#000;white-space:nowrap;font-family:'Liberation Sans', sans-serif;width:181px;text-align:center;-webkit-text-stroke:0.12px #000;">0</div>
<div style="left:498px;top:602.67px;height:16px;line-height:16px;font-size:12.5px;font-weight:400;color:#000;white-space:nowrap;font-family:'Liberation Sans', sans-serif;width:181px;text-align:center;-webkit-text-stroke:0.12px #000;">0</div>
<div style="left:680px;top:602.67px;height:16px;line-height:16px;font-size:12.5px;font-weight:400;color:#000;white-space:nowrap;font-family:'Liberation Sans', sans-serif;width:181px;text-align:center;-webkit-text-stroke:0.12px #000;">0</div>
<div style="left:862px;top:602.67px;height:16px;line-height:16px;font-size:12.5px;font-weight:400;color:#000;white-space:nowrap;font-family:'Liberation Sans', sans-serif;width:181px;text-align:center;-webkit-text-stroke:0.12px #000;">0</div>
<div style="left:1044px;top:602.67px;height:16px;line-height:16px;font-size:12.5px;font-weight:400;color:#000;white-space:nowrap;font-family:'Liberation Sans', sans-serif;width:181px;text-align:center;-webkit-text-stroke:0.12px #000;">0</div>
<div style="left:1226px;top:602.67px;height:16px;line-height:16px;font-size:12.5px;font-weight:400;color:#000;white-space:nowrap;font-family:'Liberation Sans', sans-serif;width:181px;text-align:center;-webkit-text-stroke:0.12px #000;">0</div>
<div style="left:1408px;top:602.67px;height:16px;line-height:16px;font-size:12.5px;font-weight:400;color:#000;white-space:nowrap;font-family:'Liberation Sans', sans-serif;width:183px;text-align:center;-webkit-text-stroke:0.12px #000;">0</div>
<div style="left:1592px;top:602.67px;height:16px;line-height:16px;font-size:12.5px;font-weight:400;color:#000;white-space:nowrap;font-family:'Liberation Sans', sans-serif;width:181px;text-align:center;-webkit-text-stroke:0.12px #000;">0</div>
<div style="left:1774px;top:602.67px;height:16px;line-height:16px;font-size:12.5px;font-weight:400;color:#000;white-space:nowrap;font-family:'Liberation Sans', sans-serif;width:181px;text-align:center;-webkit-text-stroke:0.12px #000;">0</div>
<div style="left:498px;top:622.67px;height:16px;line-height:16px;font-size:12.5px;font-weight:400;color:#000;white-space:nowrap;font-family:'Liberation Sans', sans-serif;width:181px;text-align:center;-webkit-text-stroke:0.12px #000;">0</div>
<div style="left:680px;top:622.67px;height:16px;line-height:16px;font-size:12.5px;font-weight:400;color:#000;white-space:nowrap;font-family:'Liberation Sans', sans-serif;width:181px;text-align:center;-webkit-text-stroke:0.12px #000;">0</div>
<div style="left:862px;top:622.67px;height:16px;line-height:16px;font-size:12.5px;font-weight:400;color:#000;white-space:nowrap;font-family:'Liberation Sans', sans-serif;width:181px;text-align:center;-webkit-text-stroke:0.12px #000;">0</div>
<div style="left:1044px;top:622.67px;height:16px;line-height:16px;font-size:12.5px;font-weight:400;color:#000;white-space:nowrap;font-family:'Liberation Sans', sans-serif;width:181px;text-align:center;-webkit-text-stroke:0.12px #000;">0</div>
<div style="left:1226px;top:622.67px;height:16px;line-height:16px;font-size:12.5px;font-weight:400;color:#000;white-space:nowrap;font-family:'Liberation Sans', sans-serif;width:181px;text-align:center;-webkit-text-stroke:0.12px #000;">0</div>
<div style="left:1408px;top:622.67px;height:16px;line-height:16px;font-size:12.5px;font-weight:400;color:#000;white-space:nowrap;font-family:'Liberation Sans', sans-serif;width:183px;text-align:center;-webkit-text-stroke:0.12px #000;">0</div>
<div style="left:1592px;top:622.67px;height:16px;line-height:16px;font-size:12.5px;font-weight:400;color:#000;white-space:nowrap;font-family:'Liberation Sans', sans-serif;width:181px;text-align:center;-webkit-text-stroke:0.12px #000;">0</div>
<div style="left:1774px;top:622.67px;height:16px;line-height:16px;font-size:12.5px;font-weight:400;color:#000;white-space:nowrap;font-family:'Liberation Sans', sans-serif;width:181px;text-align:center;-webkit-text-stroke:0.12px #000;">0</div>
<div style="left:498px;top:642.67px;height:16px;line-height:16px;font-size:12.5px;font-weight:400;color:#000;white-space:nowrap;font-family:'Liberation Sans', sans-serif;width:181px;text-align:center;-webkit-text-stroke:0.12px #000;">0</div>
<div style="left:680px;top:642.67px;height:16px;line-height:16px;font-size:12.5px;font-weight:400;color:#000;white-space:nowrap;font-family:'Liberation Sans', sans-serif;width:181px;text-align:center;-webkit-text-stroke:0.12px #000;">0</div>
<div style="left:862px;top:642.67px;height:16px;line-height:16px;font-size:12.5px;font-weight:400;color:#000;white-space:nowrap;font-family:'Liberation Sans', sans-serif;width:181px;text-align:center;-webkit-text-stroke:0.12px #000;">0</div>
<div style="left:1044px;top:642.67px;height:16px;line-height:16px;font-size:12.5px;font-weight:400;color:#000;white-space:nowrap;font-family:'Liberation Sans', sans-serif;width:181px;text-align:center;-webkit-text-stroke:0.12px #000;">0</div>
<div style="left:1226px;top:642.67px;height:16px;line-height:16px;font-size:12.5px;font-weight:400;color:#000;white-space:nowrap;font-family:'Liberation Sans', sans-serif;width:181px;text-align:center;-webkit-text-stroke:0.12px #000;">0</div>
<div style="left:1408px;top:642.67px;height:16px;line-height:16px;font-size:12.5px;font-weight:400;color:#000;white-space:nowrap;font-family:'Liberation Sans', sans-serif;width:183px;text-align:center;-webkit-text-stroke:0.12px #000;">0</div>
<div style="left:1592px;top:642.67px;height:16px;line-height:16px;font-size:12.5px;font-weight:400;color:#000;white-space:nowrap;font-family:'Liberation Sans', sans-serif;width:181px;text-align:center;-webkit-text-stroke:0.12px #000;">0</div>
<div style="left:1774px;top:642.67px;height:16px;line-height:16px;font-size:12.5px;font-weight:400;color:#000;white-space:nowrap;font-family:'Liberation Sans', sans-serif;width:181px;text-align:center;-webkit-text-stroke:0.12px #000;">0</div>
<div style="left:498px;top:662.67px;height:16px;line-height:16px;font-size:12.5px;font-weight:400;color:#000;white-space:nowrap;font-family:'Liberation Sans', sans-serif;width:181px;text-align:center;-webkit-text-stroke:0.12px #000;">0</div>
<div style="left:680px;top:662.67px;height:16px;line-height:16px;font-size:12.5px;font-weight:400;color:#000;white-space:nowrap;font-family:'Liberation Sans', sans-serif;width:181px;text-align:center;-webkit-text-stroke:0.12px #000;">0</div>
<div style="left:862px;top:662.67px;height:16px;line-height:16px;font-size:12.5px;font-weight:400;color:#000;white-space:nowrap;font-family:'Liberation Sans', sans-serif;width:181px;text-align:center;-webkit-text-stroke:0.12px #000;">0</div>
<div style="left:1044px;top:662.67px;height:16px;line-height:16px;font-size:12.5px;font-weight:400;color:#000;white-space:nowrap;font-family:'Liberation Sans', sans-serif;width:181px;text-align:center;-webkit-text-stroke:0.12px #000;">0</div>
<div style="left:1226px;top:662.67px;height:16px;line-height:16px;font-size:12.5px;font-weight:400;color:#000;white-space:nowrap;font-family:'Liberation Sans', sans-serif;width:181px;text-align:center;-webkit-text-stroke:0.12px #000;">0</div>
<div style="left:1408px;top:662.67px;height:16px;line-height:16px;font-size:12.5px;font-weight:400;color:#000;white-space:nowrap;font-family:'Liberation Sans', sans-serif;width:183px;text-align:center;-webkit-text-stroke:0.12px #000;">0</div>
<div style="left:1592px;top:662.67px;height:16px;line-height:16px;font-size:12.5px;font-weight:400;color:#000;white-space:nowrap;font-family:'Liberation Sans', sans-serif;width:181px;text-align:center;-webkit-text-stroke:0.12px #000;">0</div>
<div style="left:1774px;top:662.67px;height:16px;line-height:16px;font-size:12.5px;font-weight:400;color:#000;white-space:nowrap;font-family:'Liberation Sans', sans-serif;width:181px;text-align:center;-webkit-text-stroke:0.12px #000;">0</div>
<div style="left:498px;top:682.67px;height:16px;line-height:16px;font-size:12.5px;font-weight:400;color:#000;white-space:nowrap;font-family:'Liberation Sans', sans-serif;width:181px;text-align:center;-webkit-text-stroke:0.12px #000;">0</div>
<div style="left:680px;top:682.67px;height:16px;line-height:16px;font-size:12.5px;font-weight:400;color:#000;white-space:nowrap;font-family:'Liberation Sans', sans-serif;width:181px;text-align:center;-webkit-text-stroke:0.12px #000;">0</div>
<div style="left:862px;top:682.67px;height:16px;line-height:16px;font-size:12.5px;font-weight:400;color:#000;white-space:nowrap;font-family:'Liberation Sans', sans-serif;width:181px;text-align:center;-webkit-text-stroke:0.12px #000;">0</div>
<div style="left:1044px;top:682.67px;height:16px;line-height:16px;font-size:12.5px;font-weight:400;color:#000;white-space:nowrap;font-family:'Liberation Sans', sans-serif;width:181px;text-align:center;-webkit-text-stroke:0.12px #000;">0</div>
<div style="left:1226px;top:682.67px;height:16px;line-height:16px;font-size:12.5px;font-weight:400;color:#000;white-space:nowrap;font-family:'Liberation Sans', sans-serif;width:181px;text-align:center;-webkit-text-stroke:0.12px #000;">0</div>
<div style="left:1408px;top:682.67px;height:16px;line-height:16px;font-size:12.5px;font-weight:400;color:#000;white-space:nowrap;font-family:'Liberation Sans', sans-serif;width:183px;text-align:center;-webkit-text-stroke:0.12px #000;">0</div>
<div style="left:1592px;top:682.67px;height:16px;line-height:16px;font-size:12.5px;font-weight:400;color:#000;white-space:nowrap;font-family:'Liberation Sans', sans-serif;width:181px;text-align:center;-webkit-text-stroke:0.12px #000;">0</div>
<div style="left:1774px;top:682.67px;height:16px;line-height:16px;font-size:12.5px;font-weight:400;color:#000;white-space:nowrap;font-family:'Liberation Sans', sans-serif;width:181px;text-align:center;-webkit-text-stroke:0.12px #000;">0</div>
<div style="left:498px;top:702.67px;height:16px;line-height:16px;font-size:12.5px;font-weight:400;color:#000;white-space:nowrap;font-family:'Liberation Sans', sans-serif;width:181px;text-align:center;-webkit-text-stroke:0.12px #000;">0</div>
<div style="left:680px;top:702.67px;height:16px;line-height:16px;font-size:12.5px;font-weight:400;color:#000;white-space:nowrap;font-family:'Liberation Sans', sans-serif;width:181px;text-align:center;-webkit-text-stroke:0.12px #000;">0</div>
<div style="left:862px;top:702.67px;height:16px;line-height:16px;font-size:12.5px;font-weight:400;color:#000;white-space:nowrap;font-family:'Liberation Sans', sans-serif;width:181px;text-align:center;-webkit-text-stroke:0.12px #000;">0</div>
<div style="left:1044px;top:702.67px;height:16px;line-height:16px;font-size:12.5px;font-weight:400;color:#000;white-space:nowrap;font-family:'Liberation Sans', sans-serif;width:181px;text-align:center;-webkit-text-stroke:0.12px #000;">0</div>
<div style="left:1226px;top:702.67px;height:16px;line-height:16px;font-size:12.5px;font-weight:400;color:#000;white-space:nowrap;font-family:'Liberation Sans', sans-serif;width:181px;text-align:center;-webkit-text-stroke:0.12px #000;">0</div>
<div style="left:1408px;top:702.67px;height:16px;line-height:16px;font-size:12.5px;font-weight:400;color:#000;white-space:nowrap;font-family:'Liberation Sans', sans-serif;width:183px;text-align:center;-webkit-text-stroke:0.12px #000;">0</div>
<div style="left:1592px;top:702.67px;height:16px;line-height:16px;font-size:12.5px;font-weight:400;color:#000;white-space:nowrap;font-family:'Liberation Sans', sans-serif;width:181px;text-align:center;-webkit-text-stroke:0.12px #000;">0</div>
<div style="left:1774px;top:702.67px;height:16px;line-height:16px;font-size:12.5px;font-weight:400;color:#000;white-space:nowrap;font-family:'Liberation Sans', sans-serif;width:181px;text-align:center;-webkit-text-stroke:0.12px #000;">0</div>
<div style="left:498px;top:722.67px;height:16px;line-height:16px;font-size:12.5px;font-weight:700;color:#000;white-space:nowrap;font-family:'Liberation Sans', sans-serif;width:181px;text-align:center;">20</div>
<div style="left:498px;top:742.67px;height:16px;line-height:16px;font-size:12.5px;font-weight:700;color:#000;white-space:nowrap;font-family:'Liberation Sans', sans-serif;width:181px;text-align:center;">4</div>
<div style="left:680px;top:722.67px;height:16px;line-height:16px;font-size:12.5px;font-weight:700;color:#000;white-space:nowrap;font-family:'Liberation Sans', sans-serif;width:181px;text-align:center;">25</div>
<div style="left:680px;top:742.67px;height:16px;line-height:16px;font-size:12.5px;font-weight:700;color:#000;white-space:nowrap;font-family:'Liberation Sans', sans-serif;width:181px;text-align:center;">5</div>
<div style="left:862px;top:722.67px;height:16px;line-height:16px;font-size:12.5px;font-weight:700;color:#000;white-space:nowrap;font-family:'Liberation Sans', sans-serif;width:181px;text-align:center;">30</div>
<div style="left:862px;top:742.67px;height:16px;line-height:16px;font-size:12.5px;font-weight:700;color:#000;white-space:nowrap;font-family:'Liberation Sans', sans-serif;width:181px;text-align:center;">6</div>
<div style="left:1044px;top:722.67px;height:16px;line-height:16px;font-size:12.5px;font-weight:700;color:#000;white-space:nowrap;font-family:'Liberation Sans', sans-serif;width:181px;text-align:center;">25</div>
<div style="left:1044px;top:742.67px;height:16px;line-height:16px;font-size:12.5px;font-weight:700;color:#000;white-space:nowrap;font-family:'Liberation Sans', sans-serif;width:181px;text-align:center;">6</div>
<div style="left:1226px;top:722.67px;height:16px;line-height:16px;font-size:12.5px;font-weight:700;color:#000;white-space:nowrap;font-family:'Liberation Sans', sans-serif;width:181px;text-align:center;">25</div>
<div style="left:1226px;top:742.67px;height:16px;line-height:16px;font-size:12.5px;font-weight:700;color:#000;white-space:nowrap;font-family:'Liberation Sans', sans-serif;width:181px;text-align:center;">5</div>
<div style="left:1408px;top:722.67px;height:16px;line-height:16px;font-size:12.5px;font-weight:700;color:#000;white-space:nowrap;font-family:'Liberation Sans', sans-serif;width:183px;text-align:center;">25</div>
<div style="left:1408px;top:742.67px;height:16px;line-height:16px;font-size:12.5px;font-weight:700;color:#000;white-space:nowrap;font-family:'Liberation Sans', sans-serif;width:183px;text-align:center;">5</div>
<div style="left:1592px;top:722.67px;height:16px;line-height:16px;font-size:12.5px;font-weight:700;color:#000;white-space:nowrap;font-family:'Liberation Sans', sans-serif;width:181px;text-align:center;">25</div>
<div style="left:1592px;top:742.67px;height:16px;line-height:16px;font-size:12.5px;font-weight:700;color:#000;white-space:nowrap;font-family:'Liberation Sans', sans-serif;width:181px;text-align:center;">5</div>
<div style="left:1774px;top:722.67px;height:16px;line-height:16px;font-size:12.5px;font-weight:700;color:#000;white-space:nowrap;font-family:'Liberation Sans', sans-serif;width:181px;text-align:center;">25</div>
<div style="left:1774px;top:742.67px;height:16px;line-height:16px;font-size:12.5px;font-weight:700;color:#000;white-space:nowrap;font-family:'Liberation Sans', sans-serif;width:181px;text-align:center;">5</div>
<div style="left:296px;top:722.67px;height:16px;line-height:16px;font-size:12.5px;font-weight:700;color:#000;white-space:nowrap;font-family:'Liberation Sans', sans-serif;width:177px;text-align:right;transform:scaleX(1.03);transform-origin:100% 0;">Total Days</div>
<div style="left:296px;top:742.67px;height:16px;line-height:16px;font-size:12.5px;font-weight:700;color:#000;white-space:nowrap;font-family:'Liberation Sans', sans-serif;width:177px;text-align:right;transform:scaleX(1.03);transform-origin:100% 0;">Resources</div>
<div style="left:298px;top:827.67px;height:16px;line-height:16px;font-size:12.5px;font-weight:700;color:#000;white-space:nowrap;font-family:'Liberation Sans', sans-serif;transform:scaleX(1.05);transform-origin:0 0;">Project Manager</div>
<div style="left:498px;top:827.67px;height:16px;line-height:16px;font-size:12.5px;font-weight:700;color:#000;white-space:nowrap;font-family:'Liberation Sans', sans-serif;width:181px;text-align:center;transform:scaleX(1.035);transform-origin:50% 0;">£4,225.00</div>
<div style="left:680px;top:827.67px;height:16px;line-height:16px;font-size:12.5px;font-weight:700;color:#000;white-space:nowrap;font-family:'Liberation Sans', sans-serif;width:181px;text-align:center;transform:scaleX(1.035);transform-origin:50% 0;">£4,225.00</div>
<div style="left:862px;top:827.67px;height:16px;line-height:16px;font-size:12.5px;font-weight:700;color:#000;white-space:nowrap;font-family:'Liberation Sans', sans-serif;width:181px;text-align:center;transform:scaleX(1.035);transform-origin:50% 0;">£4,225.00</div>
<div style="left:1044px;top:827.67px;height:16px;line-height:16px;font-size:12.5px;font-weight:700;color:#000;white-space:nowrap;font-family:'Liberation Sans', sans-serif;width:181px;text-align:center;transform:scaleX(1.035);transform-origin:50% 0;">£3,380.00</div>
<div style="left:1226px;top:827.67px;height:16px;line-height:16px;font-size:12.5px;font-weight:700;color:#000;white-space:nowrap;font-family:'Liberation Sans', sans-serif;width:181px;text-align:center;transform:scaleX(1.035);transform-origin:50% 0;">£4,225.00</div>
<div style="left:1408px;top:827.67px;height:16px;line-height:16px;font-size:12.5px;font-weight:700;color:#000;white-space:nowrap;font-family:'Liberation Sans', sans-serif;width:183px;text-align:center;transform:scaleX(1.035);transform-origin:50% 0;">£4,225.00</div>
<div style="left:1592px;top:827.67px;height:16px;line-height:16px;font-size:12.5px;font-weight:700;color:#000;white-space:nowrap;font-family:'Liberation Sans', sans-serif;width:181px;text-align:center;transform:scaleX(1.035);transform-origin:50% 0;">£4,225.00</div>
<div style="left:1774px;top:827.67px;height:16px;line-height:16px;font-size:12.5px;font-weight:700;color:#000;white-space:nowrap;font-family:'Liberation Sans', sans-serif;width:181px;text-align:center;transform:scaleX(1.035);transform-origin:50% 0;">£4,225.00</div>
<div style="left:298px;top:847.67px;height:16px;line-height:16px;font-size:12.5px;font-weight:700;color:#000;white-space:nowrap;font-family:'Liberation Sans', sans-serif;transform:scaleX(1.0);transform-origin:0 0;">Business Analyst</div>
<div style="left:498px;top:847.67px;height:16px;line-height:16px;font-size:12.5px;font-weight:700;color:#000;white-space:nowrap;font-family:'Liberation Sans', sans-serif;width:181px;text-align:center;transform:scaleX(1.035);transform-origin:50% 0;">£3,675.00</div>
<div style="left:680px;top:847.67px;height:16px;line-height:16px;font-size:12.5px;font-weight:700;color:#000;white-space:nowrap;font-family:'Liberation Sans', sans-serif;width:181px;text-align:center;transform:scaleX(1.035);transform-origin:50% 0;">£3,675.00</div>
<div style="left:862px;top:847.67px;height:16px;line-height:16px;font-size:12.5px;font-weight:700;color:#000;white-space:nowrap;font-family:'Liberation Sans', sans-serif;width:181px;text-align:center;transform:scaleX(1.035);transform-origin:50% 0;">£3,675.00</div>
<div style="left:1044px;top:847.67px;height:16px;line-height:16px;font-size:12.5px;font-weight:700;color:#000;white-space:nowrap;font-family:'Liberation Sans', sans-serif;width:181px;text-align:center;transform:scaleX(1.035);transform-origin:50% 0;">£2,940.00</div>
<div style="left:1226px;top:847.67px;height:16px;line-height:16px;font-size:12.5px;font-weight:700;color:#000;white-space:nowrap;font-family:'Liberation Sans', sans-serif;width:181px;text-align:center;transform:scaleX(1.035);transform-origin:50% 0;">£3,675.00</div>
<div style="left:1408px;top:847.67px;height:16px;line-height:16px;font-size:12.5px;font-weight:700;color:#000;white-space:nowrap;font-family:'Liberation Sans', sans-serif;width:183px;text-align:center;transform:scaleX(1.035);transform-origin:50% 0;">£3,675.00</div>
<div style="left:1592px;top:847.67px;height:16px;line-height:16px;font-size:12.5px;font-weight:700;color:#000;white-space:nowrap;font-family:'Liberation Sans', sans-serif;width:181px;text-align:center;transform:scaleX(1.035);transform-origin:50% 0;">£3,675.00</div>
<div style="left:1774px;top:847.67px;height:16px;line-height:16px;font-size:12.5px;font-weight:700;color:#000;white-space:nowrap;font-family:'Liberation Sans', sans-serif;width:181px;text-align:center;transform:scaleX(1.035);transform-origin:50% 0;">£3,675.00</div>
<div style="left:298px;top:867.67px;height:16px;line-height:16px;font-size:12.5px;font-weight:700;color:#000;white-space:nowrap;font-family:'Liberation Sans', sans-serif;transform:scaleX(1.036);transform-origin:0 0;">CRM Architect</div>
<div style="left:498px;top:867.67px;height:16px;line-height:16px;font-size:12.5px;font-weight:700;color:#000;white-space:nowrap;font-family:'Liberation Sans', sans-serif;width:181px;text-align:center;transform:scaleX(1.035);transform-origin:50% 0;">£4,225.00</div>
<div style="left:680px;top:867.67px;height:16px;line-height:16px;font-size:12.5px;font-weight:700;color:#000;white-space:nowrap;font-family:'Liberation Sans', sans-serif;width:181px;text-align:center;transform:scaleX(1.035);transform-origin:50% 0;">£4,225.00</div>
<div style="left:862px;top:867.67px;height:16px;line-height:16px;font-size:12.5px;font-weight:700;color:#000;white-space:nowrap;font-family:'Liberation Sans', sans-serif;width:181px;text-align:center;transform:scaleX(1.035);transform-origin:50% 0;">£4,225.00</div>
<div style="left:1044px;top:867.67px;height:16px;line-height:16px;font-size:12.5px;font-weight:700;color:#000;white-space:nowrap;font-family:'Liberation Sans', sans-serif;width:181px;text-align:center;transform:scaleX(1.035);transform-origin:50% 0;">£3,380.00</div>
<div style="left:1226px;top:867.67px;height:16px;line-height:16px;font-size:12.5px;font-weight:700;color:#000;white-space:nowrap;font-family:'Liberation Sans', sans-serif;width:181px;text-align:center;transform:scaleX(1.035);transform-origin:50% 0;">£4,225.00</div>
<div style="left:1408px;top:867.67px;height:16px;line-height:16px;font-size:12.5px;font-weight:700;color:#000;white-space:nowrap;font-family:'Liberation Sans', sans-serif;width:183px;text-align:center;transform:scaleX(1.035);transform-origin:50% 0;">£4,225.00</div>
<div style="left:1592px;top:867.67px;height:16px;line-height:16px;font-size:12.5px;font-weight:700;color:#000;white-space:nowrap;font-family:'Liberation Sans', sans-serif;width:181px;text-align:center;transform:scaleX(1.035);transform-origin:50% 0;">£4,225.00</div>
<div style="left:1774px;top:867.67px;height:16px;line-height:16px;font-size:12.5px;font-weight:700;color:#000;white-space:nowrap;font-family:'Liberation Sans', sans-serif;width:181px;text-align:center;transform:scaleX(1.035);transform-origin:50% 0;">£4,225.00</div>
<div style="left:298px;top:887.67px;height:16px;line-height:16px;font-size:12.5px;font-weight:700;color:#000;white-space:nowrap;font-family:'Liberation Sans', sans-serif;transform:scaleX(1.06);transform-origin:0 0;">CRM Developer</div>
<div style="left:498px;top:887.67px;height:16px;line-height:16px;font-size:12.5px;font-weight:700;color:#000;white-space:nowrap;font-family:'Liberation Sans', sans-serif;width:181px;text-align:center;transform:scaleX(1.035);transform-origin:50% 0;">£3,675.00</div>
<div style="left:680px;top:887.67px;height:16px;line-height:16px;font-size:12.5px;font-weight:700;color:#000;white-space:nowrap;font-family:'Liberation Sans', sans-serif;width:181px;text-align:center;transform:scaleX(1.035);transform-origin:50% 0;">£3,675.00</div>
<div style="left:862px;top:887.67px;height:16px;line-height:16px;font-size:12.5px;font-weight:700;color:#000;white-space:nowrap;font-family:'Liberation Sans', sans-serif;width:181px;text-align:center;transform:scaleX(1.035);transform-origin:50% 0;">£3,675.00</div>
<div style="left:1044px;top:887.67px;height:16px;line-height:16px;font-size:12.5px;font-weight:700;color:#000;white-space:nowrap;font-family:'Liberation Sans', sans-serif;width:181px;text-align:center;transform:scaleX(1.035);transform-origin:50% 0;">£2,940.00</div>
<div style="left:1226px;top:887.67px;height:16px;line-height:16px;font-size:12.5px;font-weight:700;color:#000;white-space:nowrap;font-family:'Liberation Sans', sans-serif;width:181px;text-align:center;transform:scaleX(1.035);transform-origin:50% 0;">£3,675.00</div>
<div style="left:1408px;top:887.67px;height:16px;line-height:16px;font-size:12.5px;font-weight:700;color:#000;white-space:nowrap;font-family:'Liberation Sans', sans-serif;width:183px;text-align:center;transform:scaleX(1.035);transform-origin:50% 0;">£3,675.00</div>
<div style="left:1592px;top:887.67px;height:16px;line-height:16px;font-size:12.5px;font-weight:700;color:#000;white-space:nowrap;font-family:'Liberation Sans', sans-serif;width:181px;text-align:center;transform:scaleX(1.035);transform-origin:50% 0;">£3,675.00</div>
<div style="left:1774px;top:887.67px;height:16px;line-height:16px;font-size:12.5px;font-weight:700;color:#000;white-space:nowrap;font-family:'Liberation Sans', sans-serif;width:181px;text-align:center;transform:scaleX(1.035);transform-origin:50% 0;">£3,675.00</div>
</div>
<div style="left:1899px;top:111px;width:21px;height:918px;background:#E6E6E6;"></div>
<div style="left:1902px;top:128px;width:15px;height:901px;background:#DADADA;"></div>
<div style="left:1898px;top:131px;width:1px;height:898px;background:#A0A0A0;"></div>
<div style="left:1902px;top:113px;width:15px;height:15px;background:#fff;border:1px solid #C6C6C6;"></div>
<svg style="left:1905px;top:118px" width="9" height="5" viewBox="0 0 9 5"><path d="M0 5L4.5 0L9 5z" fill="#777"/></svg>
<div style="left:1902px;top:412px;width:15px;height:171px;background:#fff;border:1px solid #ABABAB;"></div>
<div style="left:1902px;top:1015px;width:15px;height:15px;background:#fff;border:1px solid #C6C6C6;"></div>
<svg style="left:1905px;top:1021px" width="9" height="5" viewBox="0 0 9 5"><path d="M0 0L4.5 5L9 0z" fill="#777"/></svg>
<div style="left:0px;top:1029px;width:1920px;height:28px;background:#E6E6E6;"></div>
<div style="left:0px;top:1029px;width:1899px;height:1px;background:#A0A0A0;"></div>
<svg style="left:25px;top:1037px" width="40" height="12" viewBox="0 0 40 12"><path d="M7 1L2 6L7 11z" fill="#BBB"/><path d="M31 1L36 6L31 11z" fill="#BBB"/></svg>
<div style="left:100px;top:1029px;width:110px;height:25px;background:#fff;border-left:1px solid #A0A0A0;border-right:1px solid #A0A0A0;"></div>
<div style="left:100px;top:1052px;width:110px;height:2px;background:#1E6E3E;"></div>
<div style="left:101px;top:1034.50px;height:16px;line-height:16px;font-size:13px;font-weight:700;color:#217346;white-space:nowrap;font-family:'Liberation Sans', sans-serif;width:108px;text-align:center;transform:scaleX(1.05);transform-origin:50% 0;">PlanTemplate</div>
<div style="left:210px;top:1034.50px;height:16px;line-height:16px;font-size:13px;font-weight:400;color:#444;white-space:nowrap;font-family:'Liberation Sans', sans-serif;width:90px;text-align:center;">PlanTables</div>
<div style="left:300px;top:1033px;width:1px;height:18px;background:#999;"></div>
<div style="left:301px;top:1034.50px;height:16px;line-height:16px;font-size:13px;font-weight:400;color:#444;white-space:nowrap;font-family:'Liberation Sans', sans-serif;width:89px;text-align:center;transform:scaleX(0.97);transform-origin:50% 0;">PlanCharts</div>
<div style="left:390px;top:1033px;width:1px;height:18px;background:#999;"></div>
<div style="left:393px;top:1032px;width:92px;height:21px;background:#9BC2E6;"></div>
<div style="left:393px;top:1034.50px;height:16px;line-height:16px;font-size:13px;font-weight:400;color:#222;white-space:nowrap;font-family:'Liberation Sans', sans-serif;width:92px;text-align:center;">Instructions</div>
<div style="left:487px;top:1033px;width:1px;height:18px;background:#999;"></div>
<div style="left:490px;top:1032px;width:66px;height:21px;background:#FFE699;"></div>
<div style="left:490px;top:1034.50px;height:16px;line-height:16px;font-size:13px;font-weight:400;color:#222;white-space:nowrap;font-family:'Liberation Sans', sans-serif;width:66px;text-align:center;transform:scaleX(1.07);transform-origin:50% 0;">Version</div>
<div style="left:558px;top:1033px;width:1px;height:18px;background:#999;"></div>
<div style="left:559px;top:1034.50px;height:16px;line-height:16px;font-size:13px;font-weight:400;color:#444;white-space:nowrap;font-family:'Liberation Sans', sans-serif;width:131px;text-align:center;transform:scaleX(0.98);transform-origin:50% 0;">PlanExampleOnly</div>
<div style="left:690px;top:1033px;width:1px;height:18px;background:#999;"></div>
<svg style="left:722px;top:1035px" width="18" height="18" viewBox="0 0 18 18"><circle cx="9" cy="9" r="7.5" fill="none" stroke="#777" stroke-width="1.2"/><path d="M9 5v8M5 9h8" stroke="#777" stroke-width="1.5"/></svg>
<div style="left:1152px;top:1038px;width:2px;height:2px;background:#999;"></div>
<div style="left:1152px;top:1042px;width:2px;height:2px;background:#999;"></div>
<div style="left:1152px;top:1046px;width:2px;height:2px;background:#999;"></div>
<div style="left:1169px;top:1036px;width:15px;height:15px;background:#fff;border:1px solid #C6C6C6;"></div>
<svg style="left:1174px;top:1039px" width="5" height="9" viewBox="0 0 5 9"><path d="M5 0L0 4.5L5 9z" fill="#777"/></svg>
<div style="left:1184px;top:1037px;width:702px;height:13px;background:#DADADA;"></div>
<div style="left:1219px;top:1036px;width:166px;height:15px;background:#fff;border:1px solid #C6C6C6;"></div>
<div style="left:1886px;top:1036px;width:15px;height:15px;background:#fff;border:1px solid #C6C6C6;"></div>
<svg style="left:1891px;top:1039px" width="5" height="9" viewBox="0 0 5 9"><path d="M0 0L5 4.5L0 9z" fill="#777"/></svg>
<div style="left:0px;top:1057px;width:1920px;height:23px;background:#F3F2F1;"></div>
<div style="left:0px;top:1057px;width:1921px;height:1px;background:#D6D6D6;"></div>
<div style="left:1634px;top:1058px;width:38px;height:22px;background:#C8C8C8;"></div>
<svg style="left:1640px;top:1058px" width="100" height="20" viewBox="0 0 100 20"><g fill="none" stroke="#6B6B6B" stroke-width="1"><rect x="6.5" y="3.5" width="12" height="12"/><path d="M10.5 3.5v12M14.5 3.5v12M6.5 7.5h12M6.5 11.5h12"/><rect x="44.5" y="3.5" width="13" height="12"/><rect x="47.5" y="5.5" width="7" height="8"/><path d="M49 7.5h4M49 9.5h4M49 11.5h4"/><rect x="82.5" y="3.5" width="13" height="12"/><path d="M86.5 3.5v7M90.5 3.5v7M82.5 10.5h8"/></g></svg>
<div style="left:1753px;top:1067px;width:6px;height:2px;background:#666;"></div>
<div style="left:1763px;top:1068px;width:100px;height:1px;background:#999;"></div>
<div style="left:1811px;top:1062px;width:5px;height:11px;background:#777;"></div>
<div style="left:1866px;top:1067px;width:8px;height:2px;background:#666;"></div>
<div style="left:1869px;top:1064px;width:2px;height:8px;background:#666;"></div>
<div style="left:1885px;top:1060.69px;height:14px;line-height:14px;font-size:11px;font-weight:400;color:#444;white-space:nowrap;font-family:'Liberation Sans', sans-serif;transform:scaleX(0.97);transform-origin:0 0;">100%</div>
</body></html>
